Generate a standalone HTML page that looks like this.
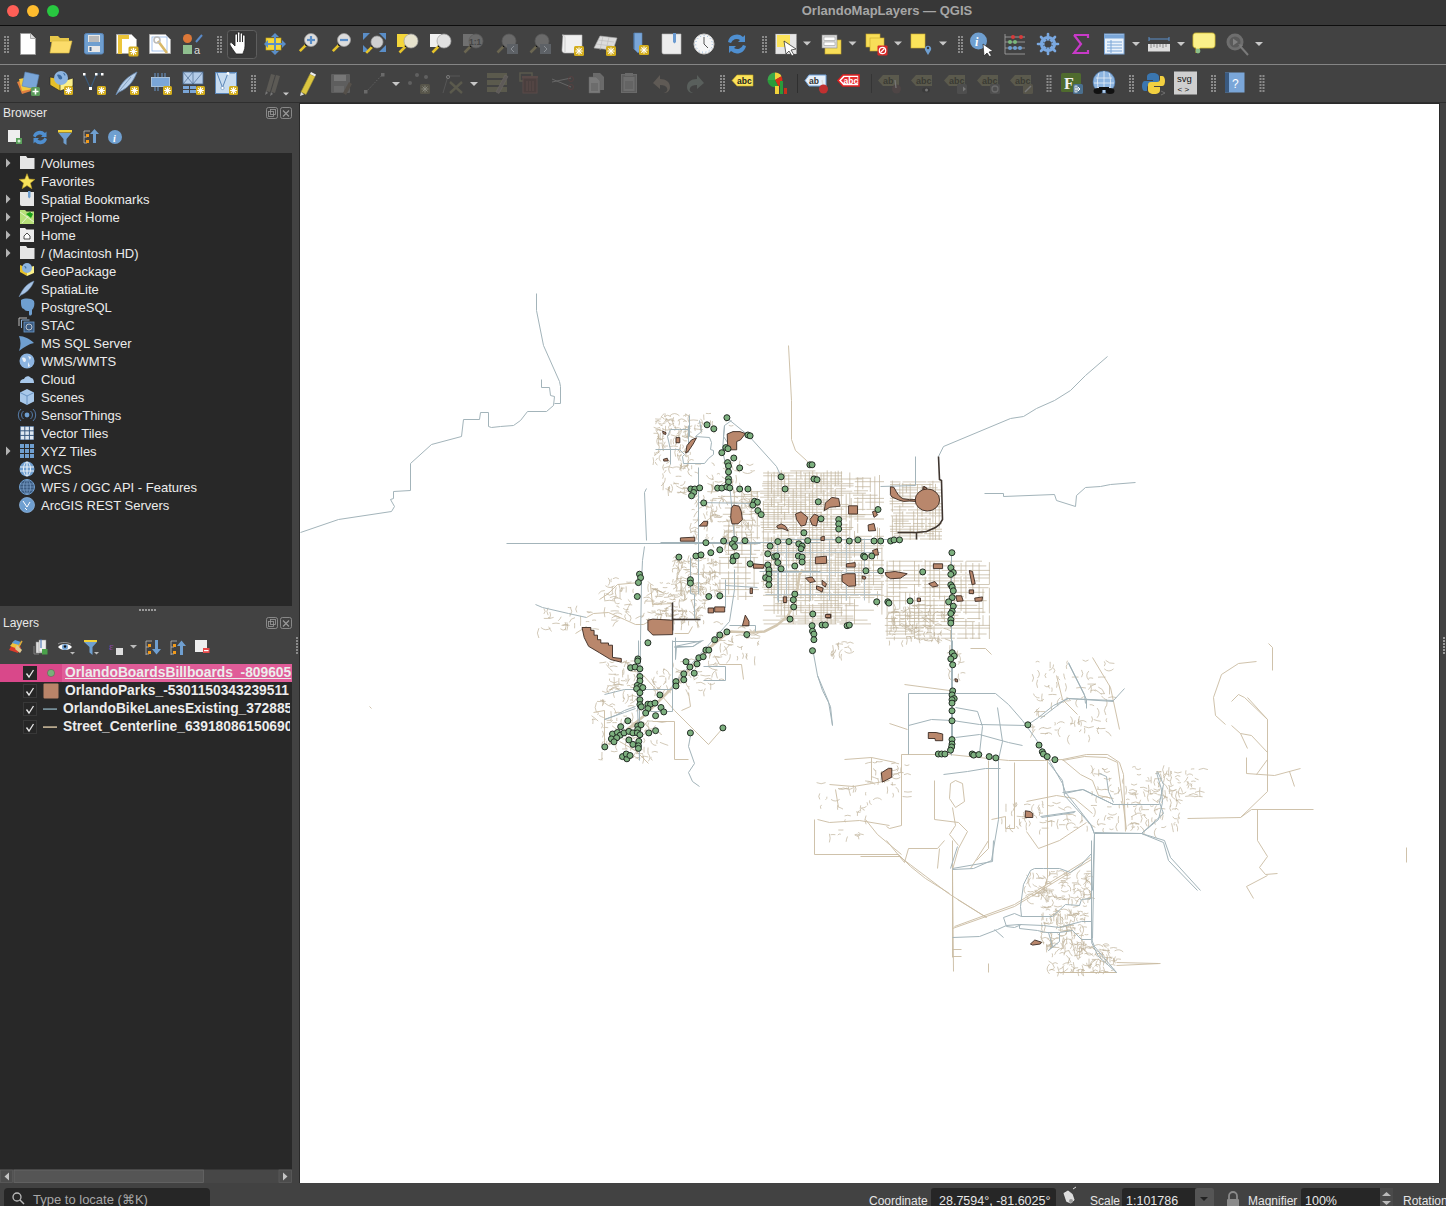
<!DOCTYPE html>
<html><head><meta charset="utf-8">
<style>
*{margin:0;padding:0;box-sizing:border-box}
html,body{width:1446px;height:1206px;overflow:hidden;background:#424242;font-family:"Liberation Sans",sans-serif;color:#e6e6e6}
.abs{position:absolute}
#title{left:0;top:0;width:1446px;height:25px;background:#373737}
#title .t{position:absolute;left:0;width:1774px;top:3px;text-align:center;font-size:13px;font-weight:700;color:#a6a6a6}
.tl{position:absolute;top:5px;width:12px;height:12px;border-radius:50%}
.ptitle{position:absolute;left:3px;font-size:12px;color:#e8e8e8;line-height:15px}
.item{position:absolute;left:41px;font-size:13px;line-height:18px;color:#ececec;white-space:nowrap}
.ltxt{position:absolute;font-size:13.8px;line-height:18px;font-weight:700;color:#ececec;white-space:nowrap;overflow:hidden;width:227px}
.st{position:absolute;font-size:12px;line-height:15px;color:#e6e6e6;white-space:nowrap}
</style></head><body>
<div id="title" class="abs">
 <div class="tl" style="left:7px;background:#fe5f57"></div>
 <div class="tl" style="left:27px;background:#febc2e"></div>
 <div class="tl" style="left:47px;background:#28c840"></div>
 <div class="t">OrlandoMapLayers — QGIS</div>
</div>
<div class="abs" style="left:0;top:25px;width:1446px;height:1px;background:#0e0e0e"></div>
<div class="abs" style="left:0;top:64px;width:1446px;height:1px;background:#858585"></div>
<div class="abs" style="left:0;top:102px;width:1446px;height:1px;background:#2e2e2e"></div>
<svg class="abs" style="left:0;top:0" width="1446" height="104"><rect x="4" y="36" width="2" height="2" fill="#8a8a8a"/><rect x="7" y="36" width="2" height="2" fill="#8a8a8a"/><rect x="4" y="39" width="2" height="2" fill="#8a8a8a"/><rect x="7" y="39" width="2" height="2" fill="#8a8a8a"/><rect x="4" y="42" width="2" height="2" fill="#8a8a8a"/><rect x="7" y="42" width="2" height="2" fill="#8a8a8a"/><rect x="4" y="45" width="2" height="2" fill="#8a8a8a"/><rect x="7" y="45" width="2" height="2" fill="#8a8a8a"/><rect x="4" y="48" width="2" height="2" fill="#8a8a8a"/><rect x="7" y="48" width="2" height="2" fill="#8a8a8a"/><rect x="4" y="51" width="2" height="2" fill="#8a8a8a"/><rect x="7" y="51" width="2" height="2" fill="#8a8a8a"/><path d="M20.5 33.5h10l5 5v16h-15z" fill="#fff" stroke="#9a9a9a" stroke-width="1"/><path d="M30.5 33.5v5h5" fill="#ddd" stroke="#9a9a9a" stroke-width="0.8"/><path d="M50 36h8l2 2h9v4h-19z" fill="#e8c84a"/><path d="M50 53l2-12h20l-3 12z" fill="#fbdc6a" stroke="#d9b840" stroke-width="0.6"/><rect x="84.5" y="33.5" width="19" height="20.5" rx="2" fill="#6f9fd0" stroke="#5a86b8"/><rect x="88" y="35" width="12" height="7" fill="#e8e8e8"/><g stroke="#666" stroke-width="0.7"><line x1="89" y1="37" x2="99" y2="37"/><line x1="89" y1="39" x2="99" y2="39"/><line x1="89" y1="41" x2="99" y2="41"/></g><rect x="88" y="46" width="12" height="6" fill="#e8e8e8"/><rect x="89.5" y="47" width="2" height="4" fill="#4a6a90"/><path d="M116.5 34.5h15l5 5v14h-20z" fill="#fff" stroke="#aaa"/><path d="M118 35h4v19h-4zM118 35h11v4h-11z" fill="#ecc53a"/><rect x="128.5" y="46.5" width="10" height="10" rx="1.5" fill="#d3ad1c"/><g stroke="#fff" stroke-width="1.1" stroke-linecap="round"><line x1="133.5" y1="48.2" x2="133.5" y2="54.8"/><line x1="130.2" y1="51.5" x2="136.8" y2="51.5"/><line x1="131.2" y1="49.2" x2="135.8" y2="53.8"/><line x1="131.2" y1="53.8" x2="135.8" y2="49.2"/></g><path d="M149.5 34.5h16l5 5v14h-21z" fill="#fff" stroke="#aaa"/><rect x="152" y="37" width="15" height="14" fill="none" stroke="#8fb4e8" stroke-width="0.8"/><path d="M158 41l9 12" stroke="#d8b868" stroke-width="2.6"/><circle cx="157" cy="40" r="3" fill="none" stroke="#bbb" stroke-width="1.6"/><circle cx="187.5" cy="38.5" r="4.5" fill="#dd7838"/><line x1="196" y1="42" x2="202" y2="35" stroke="#5a8ac8" stroke-width="2"/><rect x="183" y="45" width="9" height="9" fill="#8fbf8f"/><text x="194" y="54" font-size="11" fill="#ddd" font-family="Liberation Sans">a</text><rect x="217" y="36" width="2" height="2" fill="#8a8a8a"/><rect x="220" y="36" width="2" height="2" fill="#8a8a8a"/><rect x="217" y="39" width="2" height="2" fill="#8a8a8a"/><rect x="220" y="39" width="2" height="2" fill="#8a8a8a"/><rect x="217" y="42" width="2" height="2" fill="#8a8a8a"/><rect x="220" y="42" width="2" height="2" fill="#8a8a8a"/><rect x="217" y="45" width="2" height="2" fill="#8a8a8a"/><rect x="220" y="45" width="2" height="2" fill="#8a8a8a"/><rect x="217" y="48" width="2" height="2" fill="#8a8a8a"/><rect x="220" y="48" width="2" height="2" fill="#8a8a8a"/><rect x="217" y="51" width="2" height="2" fill="#8a8a8a"/><rect x="220" y="51" width="2" height="2" fill="#8a8a8a"/><rect x="227.5" y="30.5" width="29" height="28" rx="3" fill="#3a3a3a" stroke="#5e5e5e"/><path d="M236 54c-2-3-5-7-6-9s1-3 2-2l3 3v-11c0-1.5 2.5-1.5 2.5 0v7-9c0-1.5 2.5-1.5 2.5 0v9-8c0-1.5 2.5-1.5 2.5 0v8-6c0-1.5 2.5-1.5 2.5 0v10c0 4-2 6-2 8z" fill="#fff" stroke="#222" stroke-width="0.8"/><rect x="266" y="38" width="15" height="12" fill="#f4d63a" stroke="#c8a820" stroke-width="0.6"/><g fill="#5a8ec8"><path d="M275 33l4 4h-8z"/><path d="M275 55l4-4h-8z"/><path d="M264 44l4-4v8z"/><path d="M286 44l-4-4v8z"/><rect x="274" y="36" width="2" height="16"/><rect x="267" y="43" width="16" height="2"/></g><line x1="305.82" y1="45.18" x2="299.82" y2="51.18" stroke="#e6c42a" stroke-width="2.6"/><circle cx="306.32" cy="44.68" r="1.3" fill="#111"/><circle cx="311" cy="40" r="6.5" fill="#dcdcdc" stroke="#a0a0a0" stroke-width="0.7"/><g stroke="#5a8ec8" stroke-width="2.2"><line x1="307" y1="40" x2="315" y2="40"/><line x1="311" y1="36" x2="311" y2="44"/></g><line x1="338.82" y1="45.18" x2="332.82" y2="51.18" stroke="#e6c42a" stroke-width="2.6"/><circle cx="339.32" cy="44.68" r="1.3" fill="#111"/><circle cx="344" cy="40" r="6.5" fill="#dcdcdc" stroke="#a0a0a0" stroke-width="0.7"/><line x1="340" y1="40" x2="348" y2="40" stroke="#5a8ec8" stroke-width="2.2"/><g fill="#5a8ec8"><path d="M363 33h7l-7 7z"/><path d="M386 33h-7l7 7z"/><path d="M386 52h-7l7-7z"/><path d="M363 52h7l-7-7z"/></g><line x1="372.18" y1="46.82" x2="366.18" y2="52.82" stroke="#e6c42a" stroke-width="2.6"/><circle cx="372.68" cy="46.32" r="1.3" fill="#111"/><circle cx="377" cy="42" r="6" fill="#cfcfcf" stroke="#a0a0a0" stroke-width="0.7"/><rect x="397" y="34" width="11" height="13" fill="#f4d63a"/><line x1="405.46" y1="46.54" x2="399.46" y2="52.54" stroke="#e6c42a" stroke-width="2.6"/><circle cx="405.96" cy="46.04" r="1.3" fill="#111"/><circle cx="411" cy="41" r="7" fill="#e6e2cc" stroke="#a0a0a0" stroke-width="0.7"/><rect x="430" y="34" width="11" height="13" fill="#f0f0f0"/><line x1="438.46" y1="46.54" x2="432.46" y2="52.54" stroke="#e6c42a" stroke-width="2.6"/><circle cx="438.96" cy="46.04" r="1.3" fill="#111"/><circle cx="444" cy="41" r="7" fill="#e0e0e0" stroke="#a0a0a0" stroke-width="0.7"/><rect x="463" y="34" width="10" height="12" fill="#707070"/><line x1="470.46" y1="46.54" x2="464.46" y2="52.54" stroke="#6b6651" stroke-width="2.6"/><circle cx="470.96" cy="46.04" r="1.3" fill="#111"/><circle cx="476" cy="41" r="7" fill="#6a6a6a" stroke="#5a5a5a" stroke-width="0.7"/><text x="469" y="44.5" font-size="8.5" font-weight="700" fill="#454545" font-family="Liberation Sans">1:1</text><line x1="503.46" y1="46.54" x2="497.46" y2="52.54" stroke="#6b6651" stroke-width="2.6"/><circle cx="503.96" cy="46.04" r="1.3" fill="#111"/><circle cx="509" cy="41" r="7" fill="#6a6a6a" stroke="#5a5a5a" stroke-width="0.7"/><rect x="507" y="44" width="11" height="10" fill="#5d6166"/><path d="M514 46l-3 3 3 3" fill="none" stroke="#8a8e93" stroke-width="1"/><line x1="536.46" y1="46.54" x2="530.46" y2="52.54" stroke="#6b6651" stroke-width="2.6"/><circle cx="536.96" cy="46.04" r="1.3" fill="#111"/><circle cx="542" cy="41" r="7" fill="#6a6a6a" stroke="#5a5a5a" stroke-width="0.7"/><rect x="540" y="44" width="11" height="10" fill="#5d6166"/><path d="M544 46l3 3-3 3" fill="none" stroke="#8a8e93" stroke-width="1"/><path d="M563 35h19v18h-17c-2 0-3-1-3-3z" fill="#f0f0f0" stroke="#bbb" stroke-width="0.6"/><path d="M562 35c2 0 3 1 3 3v14" fill="none" stroke="#ccc"/><rect x="574" y="46" width="10" height="10" rx="1.5" fill="#d3ad1c"/><g stroke="#fff" stroke-width="1.1" stroke-linecap="round"><line x1="579.0" y1="47.7" x2="579.0" y2="54.3"/><line x1="575.7" y1="51.0" x2="582.3" y2="51.0"/><line x1="576.7" y1="48.7" x2="581.3" y2="53.3"/><line x1="576.7" y1="53.3" x2="581.3" y2="48.7"/></g><path d="M594 48l6-12 17 2-4 12z" fill="#dcdcdc" stroke="#aaa" stroke-width="0.6"/><path d="M598 40l16 2M596 44l16 2M603 36l-3 14M609 37l-3 13" stroke="#b8b8b8" stroke-width="0.6"/><rect x="606" y="46" width="10" height="10" rx="1.5" fill="#d3ad1c"/><g stroke="#fff" stroke-width="1.1" stroke-linecap="round"><line x1="611.0" y1="47.7" x2="611.0" y2="54.3"/><line x1="607.7" y1="51.0" x2="614.3" y2="51.0"/><line x1="608.7" y1="48.7" x2="613.3" y2="53.3"/><line x1="608.7" y1="53.3" x2="613.3" y2="48.7"/></g><path d="M634 33h8v16l-4 4-4-4z" fill="#7aa6d8" stroke="#5a86b8" stroke-width="0.6"/><path d="M634 33v16" stroke="#4a76a8"/><rect x="639" y="45" width="10" height="10" rx="1.5" fill="#d3ad1c"/><g stroke="#fff" stroke-width="1.1" stroke-linecap="round"><line x1="644.0" y1="46.7" x2="644.0" y2="53.3"/><line x1="640.7" y1="50.0" x2="647.3" y2="50.0"/><line x1="641.7" y1="47.7" x2="646.3" y2="52.3"/><line x1="641.7" y1="52.3" x2="646.3" y2="47.7"/></g><path d="M662 34h19v20h-17c-2 0-2-1-2-3z" fill="#ededed" stroke="#bbb" stroke-width="0.6"/><path d="M673 33h3v9l-1.5 1.5-1.5-1.5z" fill="#6a9ad0"/><circle cx="704" cy="44" r="10" fill="#f6f6f6" stroke="#ccc"/><circle cx="704" cy="44" r="8.3" fill="none" stroke="#6f9fd0" stroke-width="0.8" stroke-dasharray="1 2.5"/><path d="M704 37v7l4 4" fill="none" stroke="#555" stroke-width="1"/><path d="M728 42a9 9 0 0 1 15-5l2-2v7h-7l2-2a6 6 0 0 0-9 3z" fill="#4f8fd0"/><path d="M746 46a9 9 0 0 1-15 5l-2 2v-7h7l-2 2a6 6 0 0 0 9-3z" fill="#4f8fd0"/><rect x="762" y="36" width="2" height="2" fill="#8a8a8a"/><rect x="765" y="36" width="2" height="2" fill="#8a8a8a"/><rect x="762" y="39" width="2" height="2" fill="#8a8a8a"/><rect x="765" y="39" width="2" height="2" fill="#8a8a8a"/><rect x="762" y="42" width="2" height="2" fill="#8a8a8a"/><rect x="765" y="42" width="2" height="2" fill="#8a8a8a"/><rect x="762" y="45" width="2" height="2" fill="#8a8a8a"/><rect x="765" y="45" width="2" height="2" fill="#8a8a8a"/><rect x="762" y="48" width="2" height="2" fill="#8a8a8a"/><rect x="765" y="48" width="2" height="2" fill="#8a8a8a"/><rect x="762" y="51" width="2" height="2" fill="#8a8a8a"/><rect x="765" y="51" width="2" height="2" fill="#8a8a8a"/><rect x="775.5" y="34" width="21" height="20" fill="#e6e6e6" stroke="#999" stroke-width="0.6" stroke-dasharray="1 1"/><rect x="777" y="35" width="13" height="12" fill="#fbe35a"/><path d="M784 41l12 8-5 1 3 5-2 1-3-5-3 3z" fill="#fff" stroke="#222" stroke-width="0.7"/><path d="M803 41.5h8l-4 4z" fill="#c8c8c8"/><rect x="825" y="40" width="16" height="14" fill="#f8de58" stroke="#c9a92a" stroke-width="0.6"/><rect x="822" y="35" width="15" height="13" fill="#e0e0e0" stroke="#888" stroke-width="0.6"/><g fill="#fff" stroke="#888" stroke-width="0.5"><rect x="824" y="37" width="11" height="3.5"/><rect x="824" y="42" width="11" height="3.5"/></g><path d="M848.5 41.5h8l-4 4z" fill="#c8c8c8"/><rect x="866" y="34" width="14" height="13" fill="#f8de58" stroke="#c9a92a" stroke-width="0.6"/><rect x="870" y="38" width="14" height="13" fill="#f8de58" stroke="#c9a92a" stroke-width="0.6"/><rect x="877.5" y="45.5" width="10" height="10" rx="1" fill="#d92a2a"/><circle cx="882.5" cy="50.5" r="3.2" fill="none" stroke="#fff" stroke-width="1.2"/><line x1="880.5" y1="52.5" x2="884.5" y2="48.5" stroke="#fff" stroke-width="1.2"/><path d="M894 41.5h8l-4 4z" fill="#c8c8c8"/><rect x="911" y="34" width="14" height="14" fill="#fbe35a" stroke="#d0b030" stroke-width="0.6"/><path d="M928 55l-3-5a3.2 3.2 0 1 1 6 0z" fill="#6f9fd0"/><circle cx="928" cy="48" r="1.2" fill="#3a3a3a"/><path d="M939 41.5h8l-4 4z" fill="#c8c8c8"/><rect x="958" y="36" width="2" height="2" fill="#8a8a8a"/><rect x="961" y="36" width="2" height="2" fill="#8a8a8a"/><rect x="958" y="39" width="2" height="2" fill="#8a8a8a"/><rect x="961" y="39" width="2" height="2" fill="#8a8a8a"/><rect x="958" y="42" width="2" height="2" fill="#8a8a8a"/><rect x="961" y="42" width="2" height="2" fill="#8a8a8a"/><rect x="958" y="45" width="2" height="2" fill="#8a8a8a"/><rect x="961" y="45" width="2" height="2" fill="#8a8a8a"/><rect x="958" y="48" width="2" height="2" fill="#8a8a8a"/><rect x="961" y="48" width="2" height="2" fill="#8a8a8a"/><rect x="958" y="51" width="2" height="2" fill="#8a8a8a"/><rect x="961" y="51" width="2" height="2" fill="#8a8a8a"/><circle cx="978.5" cy="41" r="8.5" fill="#6f9fd0"/><text x="975" y="46" font-size="12" font-style="italic" font-weight="700" fill="#fff" font-family="Liberation Serif">i</text><path d="M983 44l10 7-4 1 2.5 3.5-2 1-2.5-3.5-3 3z" fill="#fff" stroke="#222" stroke-width="0.7"/><g stroke="#aaa" stroke-width="0.8"><line x1="1005" y1="34" x2="1005" y2="54"/><line x1="1005" y1="54" x2="1025" y2="54"/><line x1="1005" y1="37" x2="1025" y2="37"/><line x1="1005" y1="42" x2="1025" y2="42"/><line x1="1005" y1="48" x2="1025" y2="48"/></g><g><circle cx="1013" cy="37" r="2" fill="#d83a3a"/><circle cx="1021" cy="37" r="2" fill="#d83a3a"/><circle cx="1010" cy="42" r="2" fill="#7ab87a"/><circle cx="1015" cy="42" r="2" fill="#7ab87a"/><circle cx="1010" cy="48" r="2" fill="#6f9fd0"/><circle cx="1015" cy="48" r="2" fill="#6f9fd0"/><circle cx="1020" cy="48" r="2" fill="#6f9fd0"/></g><g transform="translate(1048 44)"><circle r="6.5" fill="none" stroke="#7aa8e0" stroke-width="3.2"/><g stroke="#7aa8e0" stroke-width="2.6" stroke-linecap="round"><line x1="0" y1="-10" x2="0" y2="10"/><line x1="-10" y1="0" x2="10" y2="0"/><line x1="-7" y1="-7" x2="7" y2="7"/><line x1="-7" y1="7" x2="7" y2="-7"/></g><circle r="3.5" fill="#424242"/></g><path d="M1074 35h14v3M1074 35l7 9-7 9h14v-3" fill="none" stroke="#c83ac8" stroke-width="2.2"/><rect x="1104.5" y="34" width="19.5" height="20" fill="#eaf2fb" stroke="#7aa6d8"/><rect x="1105" y="34.5" width="19" height="4" fill="#7aa6d8"/><g stroke="#7aa6d8" stroke-width="1"><line x1="1107" y1="42" x2="1122" y2="42"/><line x1="1107" y1="45" x2="1122" y2="45"/><line x1="1107" y1="48" x2="1122" y2="48"/><line x1="1107" y1="51" x2="1122" y2="51"/><line x1="1111" y1="40" x2="1111" y2="53"/></g><path d="M1132 42h8l-4 4z" fill="#c8c8c8"/><line x1="1149" y1="39" x2="1169" y2="39" stroke="#5a8ec8" stroke-width="1"/><line x1="1149" y1="37" x2="1149" y2="41" stroke="#5a8ec8"/><line x1="1169" y1="37" x2="1169" y2="41" stroke="#5a8ec8"/><rect x="1148" y="44" width="22" height="7.5" fill="#dedede"/><g stroke="#777" stroke-width="0.8"><line x1="1151" y1="44" x2="1151" y2="48"/><line x1="1154" y1="44" x2="1154" y2="47"/><line x1="1157" y1="44" x2="1157" y2="48"/><line x1="1160" y1="44" x2="1160" y2="47"/><line x1="1163" y1="44" x2="1163" y2="48"/><line x1="1166" y1="44" x2="1166" y2="47"/></g><path d="M1177 42h8l-4 4z" fill="#c8c8c8"/><path d="M1196 33h16c2 0 3 1 3 3v9c0 2-1 3-3 3h-12l-4 5v-5c-2 0-3-1-3-3v-9c0-2 1-3 3-3z" fill="#fbf08a" stroke="#d8c030" stroke-width="0.8"/><circle cx="1198" cy="51" r="2.4" fill="#8ac08a"/><g transform="translate(1235 42)"><circle r="7" fill="#5a5a5a" stroke="#6e6e6e" stroke-width="3"/><path d="M-2 -3.5v7l5-3.5z" fill="#808080"/></g><path d="M1240 46l8 9" stroke="#7a7a7a" stroke-width="2"/><path d="M1238 44l5 1-2 2z" fill="#7a7a7a"/><path d="M1255 42h8l-4 4z" fill="#c8c8c8"/><rect x="4" y="75" width="2" height="2" fill="#8a8a8a"/><rect x="7" y="75" width="2" height="2" fill="#8a8a8a"/><rect x="4" y="78" width="2" height="2" fill="#8a8a8a"/><rect x="7" y="78" width="2" height="2" fill="#8a8a8a"/><rect x="4" y="81" width="2" height="2" fill="#8a8a8a"/><rect x="7" y="81" width="2" height="2" fill="#8a8a8a"/><rect x="4" y="84" width="2" height="2" fill="#8a8a8a"/><rect x="7" y="84" width="2" height="2" fill="#8a8a8a"/><rect x="4" y="87" width="2" height="2" fill="#8a8a8a"/><rect x="7" y="87" width="2" height="2" fill="#8a8a8a"/><rect x="4" y="90" width="2" height="2" fill="#8a8a8a"/><rect x="7" y="90" width="2" height="2" fill="#8a8a8a"/><path d="M17 82l9-3 5 12-9 3z" fill="#e08040"/><path d="M19 79l11-2 3 12-11 2z" fill="#f2cc40"/><path d="M25 72l14 3-3 14-14-3z" fill="#7aa6d8" stroke="#5a86b8" stroke-width="0.6"/><rect x="31" y="87" width="9" height="9" rx="1.5" fill="#5a9a5a"/><path d="M35.5 88.5v6M32.5 91.5h6" stroke="#fff" stroke-width="1.6"/><path d="M50 85l10 6 4-3v-8l-14-3z" fill="#e6c02a" stroke="#222" stroke-width="0.6"/><path d="M60 91l13-5v-8l-13 4z" fill="#fbf08a" stroke="#222" stroke-width="0.6"/><circle cx="61" cy="78" r="7" fill="#8cb4e0"/><path d="M57 75c2-1 4 0 5 2s-1 3-3 2zM63 73c2 0 3 2 2 3z" fill="#3a6aa0"/><rect x="64" y="86" width="9" height="9" rx="1.5" fill="#d3ad1c"/><g stroke="#fff" stroke-width="1.1" stroke-linecap="round"><line x1="68.5" y1="87.53" x2="68.5" y2="93.47"/><line x1="65.53" y1="90.5" x2="71.47" y2="90.5"/><line x1="66.43" y1="88.43" x2="70.57" y2="92.57"/><line x1="66.43" y1="92.57" x2="70.57" y2="88.43"/></g><path d="M84 74l6.5 14.5 6-14.5M96.5 74h6" fill="none" stroke="#3a5a7a" stroke-width="1.2"/><g fill="#fff"><rect x="83" y="73" width="2.5" height="2.5"/><rect x="95" y="73" width="2.5" height="2.5"/><rect x="101" y="73" width="2.5" height="2.5"/><rect x="89" y="87" width="3" height="3"/></g><rect x="97" y="86" width="9" height="9" rx="1.5" fill="#d3ad1c"/><g stroke="#fff" stroke-width="1.1" stroke-linecap="round"><line x1="101.5" y1="87.53" x2="101.5" y2="93.47"/><line x1="98.53" y1="90.5" x2="104.47" y2="90.5"/><line x1="99.43" y1="88.43" x2="103.57" y2="92.57"/><line x1="99.43" y1="92.57" x2="103.57" y2="88.43"/></g><path d="M116 95c3-8 8-17 21-23-3 8-8 16-18 20z" fill="#b8d0ea" stroke="#6a8ab0" stroke-width="0.8"/><path d="M116 95l15-18" stroke="#5a7aa0" stroke-width="0.6"/><rect x="130" y="86" width="9" height="9" rx="1.5" fill="#d3ad1c"/><g stroke="#fff" stroke-width="1.1" stroke-linecap="round"><line x1="134.5" y1="87.53" x2="134.5" y2="93.47"/><line x1="131.53" y1="90.5" x2="137.47" y2="90.5"/><line x1="132.43" y1="88.43" x2="136.57" y2="92.57"/><line x1="132.43" y1="92.57" x2="136.57" y2="88.43"/></g><g stroke="#6a9ad0" stroke-width="1"><line x1="155" y1="73" x2="155" y2="77"/><line x1="158" y1="73" x2="158" y2="77"/><line x1="162" y1="73" x2="162" y2="77"/><line x1="165" y1="73" x2="165" y2="77"/><line x1="155" y1="87" x2="155" y2="91"/><line x1="158" y1="87" x2="158" y2="91"/></g><rect x="151.5" y="77.5" width="18" height="9" fill="#7aa6d8" stroke="#bcd4ec" stroke-width="0.8"/><rect x="163" y="86" width="9" height="9" rx="1.5" fill="#d3ad1c"/><g stroke="#fff" stroke-width="1.1" stroke-linecap="round"><line x1="167.5" y1="87.53" x2="167.5" y2="93.47"/><line x1="164.53" y1="90.5" x2="170.47" y2="90.5"/><line x1="165.43" y1="88.43" x2="169.57" y2="92.57"/><line x1="165.43" y1="92.57" x2="169.57" y2="88.43"/></g><rect x="183" y="72" width="20" height="12" fill="#b4cce8" stroke="#4a6a90" stroke-width="0.8"/><path d="M183 72l10 12M193 72l-10 12M193 72v12M203 72l-10 12" stroke="#4a6a90" stroke-width="0.7"/><g fill="#7aa6d8"><rect x="183" y="86" width="6" height="3"/><rect x="190" y="86" width="6" height="3"/><rect x="183" y="90" width="6" height="3"/><rect x="190" y="90" width="6" height="3"/></g><rect x="196" y="86" width="9" height="9" rx="1.5" fill="#d3ad1c"/><g stroke="#fff" stroke-width="1.1" stroke-linecap="round"><line x1="200.5" y1="87.53" x2="200.5" y2="93.47"/><line x1="197.53" y1="90.5" x2="203.47" y2="90.5"/><line x1="198.43" y1="88.43" x2="202.57" y2="92.57"/><line x1="198.43" y1="92.57" x2="202.57" y2="88.43"/></g><rect x="215.5" y="72.5" width="21" height="21" fill="#c8dcf0" stroke="#5a86b8"/><path d="M217 73l5.5 14.5 5.5-14.5 7 0" fill="none" stroke="#5a86b8" stroke-width="1"/><circle cx="222.5" cy="88" r="1.6" fill="#fff" stroke="#5a86b8" stroke-width="0.6"/><circle cx="228" cy="73.5" r="1.4" fill="#fff"/><rect x="229" y="86" width="9" height="9" rx="1.5" fill="#d3ad1c"/><g stroke="#fff" stroke-width="1.1" stroke-linecap="round"><line x1="233.5" y1="87.53" x2="233.5" y2="93.47"/><line x1="230.53" y1="90.5" x2="236.47" y2="90.5"/><line x1="231.43" y1="88.43" x2="235.57" y2="92.57"/><line x1="231.43" y1="92.57" x2="235.57" y2="88.43"/></g><rect x="251" y="75" width="2" height="2" fill="#8a8a8a"/><rect x="254" y="75" width="2" height="2" fill="#8a8a8a"/><rect x="251" y="78" width="2" height="2" fill="#8a8a8a"/><rect x="254" y="78" width="2" height="2" fill="#8a8a8a"/><rect x="251" y="81" width="2" height="2" fill="#8a8a8a"/><rect x="254" y="81" width="2" height="2" fill="#8a8a8a"/><rect x="251" y="84" width="2" height="2" fill="#8a8a8a"/><rect x="254" y="84" width="2" height="2" fill="#8a8a8a"/><rect x="251" y="87" width="2" height="2" fill="#8a8a8a"/><rect x="254" y="87" width="2" height="2" fill="#8a8a8a"/><rect x="251" y="90" width="2" height="2" fill="#8a8a8a"/><rect x="254" y="90" width="2" height="2" fill="#8a8a8a"/><path d="M266 91l5-17 4 1-5 17z" fill="#5c5a55"/><path d="M271 92l5-17 4 1-5 17z" fill="#5c5a55"/><path d="M266 91l-1 4 3-2zM271 92l-1 4 3-2z" fill="#777"/><path d="M283 92.5h6l-3 3z" fill="#c8c8c8"/><path d="M301 92l9-18 5 2.5-9 18z" fill="#dcc640" stroke="#a09030" stroke-width="0.6"/><path d="M310 74l1-2 5 2.5-1 2z" fill="#eee"/><path d="M301 92l-1 4 4-1.5z" fill="#ddd"/><rect x="331" y="74" width="19" height="19" rx="1" fill="#5e5e5e"/><rect x="334" y="75" width="12" height="6" fill="#777"/><rect x="334" y="86" width="10" height="6" fill="#6a6a6a"/><path d="M343 93l6-11 3 2-6 11z" fill="#55504a"/><path d="M366 92l16-17" stroke="#6a6a6a" stroke-width="0.8" stroke-dasharray="1.5 1.5"/><rect x="364" y="90" width="3.5" height="3.5" fill="#6a6a6a"/><rect x="381" y="73" width="3.5" height="3.5" fill="#6a6a6a"/><path d="M392 82h8l-4 4z" fill="#c8c8c8"/><circle cx="410" cy="83" r="2" fill="#606060"/><circle cx="417" cy="75" r="2" fill="#606060"/><circle cx="426" cy="77" r="2" fill="#606060"/><rect x="420" y="84" width="10" height="10" rx="1.5" fill="#57554a"/><g stroke="#8a8a80" stroke-width="0.9"><line x1="425" y1="85.5" x2="425" y2="92.5"/><line x1="421.5" y1="89" x2="428.5" y2="89"/><line x1="422.5" y1="86.5" x2="427.5" y2="91.5"/><line x1="422.5" y1="91.5" x2="427.5" y2="86.5"/></g><path d="M443 93l5-17h12" fill="none" stroke="#5e5e5e" stroke-width="0.7"/><circle cx="448" cy="77" r="1.6" fill="none" stroke="#777"/><path d="M450 82l12 11M462 82l-12 11" stroke="#5b5a4d" stroke-width="2.4"/><path d="M470 82h8l-4 4z" fill="#c8c8c8"/><g fill="#5b5a4d"><rect x="487" y="73" width="20" height="5"/><rect x="487" y="80" width="20" height="5"/><rect x="487" y="87" width="20" height="5"/></g><path d="M496 92l9-17 3 1.5-9 17z" fill="#5e5a58" stroke="#6e6a68" stroke-width="0.5"/><rect x="520" y="73" width="12" height="8" fill="none" stroke="#5b5a4d" stroke-width="1.5"/><rect x="523" y="78" width="14" height="15" fill="#4a3f3e" stroke="#5a4a48" stroke-width="1"/><g stroke="#5a4a48" stroke-width="1.2"><line x1="527" y1="81" x2="527" y2="91"/><line x1="530" y1="81" x2="530" y2="91"/><line x1="533" y1="81" x2="533" y2="91"/></g><rect x="522" y="76" width="16" height="2" fill="#5a4a48"/><path d="M552 79l19 8M552 82l19-4" stroke="#666" stroke-width="1"/><circle cx="571" cy="79" r="2.5" fill="none" stroke="#5a4040" stroke-width="0.8"/><circle cx="571" cy="87" r="2.5" fill="none" stroke="#5a4040" stroke-width="0.8"/><path d="M593 73h7l4 4v13h-11z" fill="#6a6a6a"/><path d="M589 77h7l4 4v12h-11z" fill="#7a7a7a" stroke="#666" stroke-width="0.5"/><g stroke="#555" stroke-width="0.7"><line x1="591" y1="84" x2="598" y2="84"/><line x1="591" y1="86" x2="598" y2="86"/><line x1="591" y1="88" x2="598" y2="88"/><line x1="591" y1="90" x2="598" y2="90"/></g><rect x="621.5" y="74.5" width="15" height="18" fill="#5e5e5e" stroke="#6a6a6a"/><rect x="625" y="73" width="8" height="3" fill="#6a6a6a"/><rect x="623.5" y="77" width="11" height="14" fill="#6e6e6e"/><g stroke="#555" stroke-width="0.7"><line x1="625" y1="82" x2="633" y2="82"/><line x1="625" y1="84" x2="633" y2="84"/><line x1="625" y1="86" x2="633" y2="86"/><line x1="625" y1="88" x2="633" y2="88"/></g><path d="M653 83l7-8v4c6 0 10 3 10 8s-4 6-6 6c3-1 4-3 3-5s-3-3-7-3v4z" fill="#5f5a55"/><path d="M704 83l-7-8v4c-6 0-10 3-10 8s4 6 6 6c-3-1-4-3-3-5s3-3 7-3v4z" fill="#595f5c"/><rect x="720" y="75" width="2" height="2" fill="#8a8a8a"/><rect x="723" y="75" width="2" height="2" fill="#8a8a8a"/><rect x="720" y="78" width="2" height="2" fill="#8a8a8a"/><rect x="723" y="78" width="2" height="2" fill="#8a8a8a"/><rect x="720" y="81" width="2" height="2" fill="#8a8a8a"/><rect x="723" y="81" width="2" height="2" fill="#8a8a8a"/><rect x="720" y="84" width="2" height="2" fill="#8a8a8a"/><rect x="723" y="84" width="2" height="2" fill="#8a8a8a"/><rect x="720" y="87" width="2" height="2" fill="#8a8a8a"/><rect x="723" y="87" width="2" height="2" fill="#8a8a8a"/><rect x="720" y="90" width="2" height="2" fill="#8a8a8a"/><rect x="723" y="90" width="2" height="2" fill="#8a8a8a"/><path d="M732 80.5l5-5.5h16v11h-16z" fill="#fbe35a" stroke="#c8a820" stroke-width="0.6"/><text x="737" y="84" font-size="8.5" font-weight="700" fill="#222" font-family="Liberation Sans">abc</text><path d="M775 80v-7.5a7.5 7.5 0 0 1 6.5 3.75z" fill="#f2d23a"/><path d="M775 80l6.5-3.75a7.5 7.5 0 0 1-3 10.2z" fill="#d8301a"/><path d="M775 80l3.5 6.45a7.5 7.5 0 0 1-11-6.45z" fill="#2a9a3a"/><path d="M775 80h-7.5a7.5 7.5 0 0 1 7.5-7.5z" fill="#3aa84a"/><rect x="775" y="86" width="4" height="8" fill="#f2d23a"/><rect x="780" y="81" width="3" height="13" fill="#2a9a3a"/><rect x="784" y="88" width="3" height="6" fill="#c8301a"/><line x1="797.5" y1="74" x2="797.5" y2="93" stroke="#2f2f2f" stroke-width="1"/><path d="M805 80.5l4-5.5h17v11h-17z" fill="#e6f0fa" stroke="#6fa0d8" stroke-width="1"/><text x="809" y="84.3" font-size="8.5" font-weight="700" fill="#333" font-family="Liberation Sans">ab</text><line x1="822" y1="80" x2="823.5" y2="88" stroke="#ddd" stroke-width="1.4"/><circle cx="823.5" cy="89" r="4.5" fill="#c03030"/><path d="M838 80.5l5-5.5h16v11h-16z" fill="#fff" stroke="#e02020" stroke-width="1.6"/><path d="M841 80.5l3.5-3.5h13v7h-13z" fill="#e83030"/><text x="843.5" y="84" font-size="8.5" font-weight="700" fill="#fff" font-family="Liberation Sans">abc</text><line x1="871.5" y1="74" x2="871.5" y2="93" stroke="#353535" stroke-width="1"/><path d="M878 80.5l5-5.5h16v11h-16z" fill="#5b5a4d"/><text x="883" y="84" font-size="9" font-weight="700" fill="#3a3a34" font-family="Liberation Sans">ab</text><circle cx="896.5" cy="89" r="4.5" fill="#4e4545"/><line x1="895" y1="80" x2="896" y2="88" stroke="#777" stroke-width="1.2"/><path d="M911 80.5l5-5.5h16v11h-16z" fill="#5b5a4d"/><text x="916" y="84" font-size="9" font-weight="700" fill="#3a3a34" font-family="Liberation Sans">abc</text><ellipse cx="926" cy="90" rx="4" ry="2.5" fill="#3a3a3a"/><circle cx="926.5" cy="90" r="1.5" fill="#777"/><path d="M944 80.5l5-5.5h16v11h-16z" fill="#5b5a4d"/><text x="949" y="84" font-size="9" font-weight="700" fill="#3a3a34" font-family="Liberation Sans">abc</text><rect x="957" y="84" width="10" height="10" rx="1.5" fill="#4e4e4e"/><path d="M959 89h4v-2.5l3 2.5-3 2.5v-2.5" fill="#777"/><path d="M977 80.5l5-5.5h16v11h-16z" fill="#5b5a4d"/><text x="982" y="84" font-size="9" font-weight="700" fill="#3a3a34" font-family="Liberation Sans">abc</text><rect x="990" y="84" width="10" height="10" rx="1.5" fill="#4e4e4e"/><circle cx="995" cy="89" r="3" fill="none" stroke="#6a6a6a" stroke-width="1.3"/><path d="M1010 80.5l5-5.5h16v11h-16z" fill="#5b5a4d"/><text x="1015" y="84" font-size="9" font-weight="700" fill="#3a3a34" font-family="Liberation Sans">abc</text><rect x="1023" y="84" width="10" height="10" rx="1.5" fill="#57554a"/><path d="M1025 92l6-6" stroke="#777" stroke-width="1.5"/><rect x="1046.5" y="75" width="2" height="2" fill="#8a8a8a"/><rect x="1049.5" y="75" width="2" height="2" fill="#8a8a8a"/><rect x="1046.5" y="78" width="2" height="2" fill="#8a8a8a"/><rect x="1049.5" y="78" width="2" height="2" fill="#8a8a8a"/><rect x="1046.5" y="81" width="2" height="2" fill="#8a8a8a"/><rect x="1049.5" y="81" width="2" height="2" fill="#8a8a8a"/><rect x="1046.5" y="84" width="2" height="2" fill="#8a8a8a"/><rect x="1049.5" y="84" width="2" height="2" fill="#8a8a8a"/><rect x="1046.5" y="87" width="2" height="2" fill="#8a8a8a"/><rect x="1049.5" y="87" width="2" height="2" fill="#8a8a8a"/><rect x="1046.5" y="90" width="2" height="2" fill="#8a8a8a"/><rect x="1049.5" y="90" width="2" height="2" fill="#8a8a8a"/><rect x="1061" y="73" width="20" height="19" rx="1.5" fill="#4f6b2e"/><text x="1064" y="89" font-size="16" font-weight="700" fill="#f2f2f2" font-family="Liberation Serif">F</text><rect x="1073" y="84" width="10" height="10" rx="1.5" fill="#4a6f8e"/><path d="M1075 89h5m-2-2l2 2-2 2" fill="none" stroke="#fff" stroke-width="1"/><rect x="1075" y="86" width="2" height="6" fill="none" stroke="#fff" stroke-width="0.8"/><circle cx="1104" cy="82" r="11" fill="#8cb4e0" stroke="#4a76a8" stroke-width="0.6"/><path d="M1096 78h16M1094 83h20M1097 88h14M1104 71v22M1099 73c-2 5-2 13 0 18M1109 73c2 5 2 13 0 18" stroke="#e8f0f8" stroke-width="0.8" fill="none"/><g fill="#111"><ellipse cx="1098" cy="91" rx="4.5" ry="3"/><ellipse cx="1110" cy="91" rx="4.5" ry="3"/><rect x="1099" y="87" width="10" height="3"/></g><rect x="1129" y="75" width="2" height="2" fill="#8a8a8a"/><rect x="1132" y="75" width="2" height="2" fill="#8a8a8a"/><rect x="1129" y="78" width="2" height="2" fill="#8a8a8a"/><rect x="1132" y="78" width="2" height="2" fill="#8a8a8a"/><rect x="1129" y="81" width="2" height="2" fill="#8a8a8a"/><rect x="1132" y="81" width="2" height="2" fill="#8a8a8a"/><rect x="1129" y="84" width="2" height="2" fill="#8a8a8a"/><rect x="1132" y="84" width="2" height="2" fill="#8a8a8a"/><rect x="1129" y="87" width="2" height="2" fill="#8a8a8a"/><rect x="1132" y="87" width="2" height="2" fill="#8a8a8a"/><rect x="1129" y="90" width="2" height="2" fill="#8a8a8a"/><rect x="1132" y="90" width="2" height="2" fill="#8a8a8a"/><path d="M1153 73c-5 0-6 2-6 4v3h6v1h-8c-2 0-3 2-3 5s1 5 3 5h2v-3c0-2 1-3 3-3h6c2 0 3-1 3-3v-5c0-2-2-4-6-4z" fill="#3a76b0"/><path d="M1154 94c5 0 6-2 6-4v-3h-6v-1h8c2 0 3-2 3-5s-1-5-3-5h-2v3c0 2-1 3-3 3h-6c-2 0-3 1-3 3v5c0 2 2 4 6 4z" fill="#f2d040"/><path d="M1161 91l4 2-4 2" fill="none" stroke="#777" stroke-width="0.8"/><rect x="1174" y="71.5" width="23" height="23" fill="#cfcfcf"/><text x="1177" y="82" font-size="9.5" fill="#111" font-family="Liberation Sans">svg</text><text x="1177.5" y="92" font-size="8" fill="#111" font-family="Liberation Sans">&lt; &gt;</text><rect x="1211" y="75" width="2" height="2" fill="#8a8a8a"/><rect x="1214" y="75" width="2" height="2" fill="#8a8a8a"/><rect x="1211" y="78" width="2" height="2" fill="#8a8a8a"/><rect x="1214" y="78" width="2" height="2" fill="#8a8a8a"/><rect x="1211" y="81" width="2" height="2" fill="#8a8a8a"/><rect x="1214" y="81" width="2" height="2" fill="#8a8a8a"/><rect x="1211" y="84" width="2" height="2" fill="#8a8a8a"/><rect x="1214" y="84" width="2" height="2" fill="#8a8a8a"/><rect x="1211" y="87" width="2" height="2" fill="#8a8a8a"/><rect x="1214" y="87" width="2" height="2" fill="#8a8a8a"/><rect x="1211" y="90" width="2" height="2" fill="#8a8a8a"/><rect x="1214" y="90" width="2" height="2" fill="#8a8a8a"/><rect x="1225" y="72.5" width="19.5" height="20" fill="#7aa6d8"/><rect x="1225" y="72.5" width="4" height="20" fill="#3a5a80"/><text x="1232" y="88" font-size="12" fill="#fff" font-family="Liberation Sans">?</text><rect x="1259.5" y="75" width="2" height="2" fill="#8a8a8a"/><rect x="1262.5" y="75" width="2" height="2" fill="#8a8a8a"/><rect x="1259.5" y="78" width="2" height="2" fill="#8a8a8a"/><rect x="1262.5" y="78" width="2" height="2" fill="#8a8a8a"/><rect x="1259.5" y="81" width="2" height="2" fill="#8a8a8a"/><rect x="1262.5" y="81" width="2" height="2" fill="#8a8a8a"/><rect x="1259.5" y="84" width="2" height="2" fill="#8a8a8a"/><rect x="1262.5" y="84" width="2" height="2" fill="#8a8a8a"/><rect x="1259.5" y="87" width="2" height="2" fill="#8a8a8a"/><rect x="1262.5" y="87" width="2" height="2" fill="#8a8a8a"/><rect x="1259.5" y="90" width="2" height="2" fill="#8a8a8a"/><rect x="1262.5" y="90" width="2" height="2" fill="#8a8a8a"/></svg>
<div class="abs" style="left:0;top:153px;width:292px;height:453px;background:#282828"></div>
<div class="abs" style="left:0;top:664px;width:292px;height:506px;background:#282828"></div>
<div class="abs" style="left:299px;top:103px;width:1141px;height:1080px;background:#2a2a2a"></div>
<div class="abs" style="left:300px;top:104px;width:1139px;height:1079px;background:#fff;overflow:hidden"><svg width="1139" height="1079" viewBox="300 104 1139 1079" style="position:absolute;left:0;top:0"><path d="M790.3 470.9L815.4 470.9M763.1 473.0L801.5 473.0M803.0 473.0L842.2 473.0M763.2 475.8L783.1 475.8M783.8 475.8L793.7 475.8M795.9 475.8L817.6 475.8M819.5 475.8L842.0 475.8M781.7 479.0L803.0 479.0M803.9 479.0L827.6 479.0M829.7 479.0L862.2 479.0M762.9 481.8L785.5 481.8M788.4 481.8L811.5 481.8M812.2 481.8L842.6 481.8M762.3 483.7L775.7 483.7M776.3 483.7L808.9 483.7M810.0 483.7L830.5 483.7M831.2 483.7L853.6 483.7M762.1 485.9L781.6 485.9M784.5 485.9L797.3 485.9M798.4 485.9L813.8 485.9M815.8 485.9L832.2 485.9M833.8 485.9L853.6 485.9M763.4 488.7L773.1 488.7M775.6 488.7L811.5 488.7M813.0 488.7L833.8 488.7M835.9 488.7L845.9 488.7M760.1 491.2L796.1 491.2M797.0 491.2L813.0 491.2M814.5 491.2L826.4 491.2M829.4 491.2L852.3 491.2M760.1 493.2L798.5 493.2M799.4 493.2L824.8 493.2M826.6 493.2L865.9 493.2M763.9 495.3L788.9 495.3M790.2 495.3L805.4 495.3M808.3 495.3L843.6 495.3M760.1 497.2L777.1 497.2M779.3 497.2L817.9 497.2M764.5 500.0L799.4 500.0M801.5 500.0L835.1 500.0M763.9 502.2L782.6 502.2M785.5 502.2L806.2 502.2M809.0 502.2L840.2 502.2M762.7 504.6L774.9 504.6M777.9 504.6L806.7 504.6M809.5 504.6L831.4 504.6M833.9 504.6L848.7 504.6M764.6 506.6L783.9 506.6M785.8 506.6L822.8 506.6M825.6 506.6L849.6 506.6M763.6 509.2L789.4 509.2M791.2 509.2L817.0 509.2M817.8 509.2L843.7 509.2M762.2 512.5L789.8 512.5M791.6 512.5L821.8 512.5M762.8 514.7L801.0 514.7M801.8 514.7L813.7 514.7M814.4 514.7L830.1 514.7M832.3 514.7L865.4 514.7M764.4 516.8L803.4 516.8M806.3 516.8L827.0 516.8M830.0 516.8L864.6 516.8M761.6 518.9L792.7 518.9M794.6 518.9L816.7 518.9M818.0 518.9L846.0 518.9M760.5 522.3L777.0 522.3M779.5 522.3L796.1 522.3M797.7 522.3L834.8 522.3M760.4 524.8L798.4 524.8M800.9 524.8L811.6 524.8M812.2 524.8L847.8 524.8M761.2 527.5L772.7 527.5M773.3 527.5L787.8 527.5M789.0 527.5L821.3 527.5M823.1 527.5L836.8 527.5M837.3 527.5L853.3 527.5M764.1 529.5L785.9 529.5M788.5 529.5L809.1 529.5M811.3 529.5L850.7 529.5M761.7 531.9L771.5 531.9M772.2 531.9L803.9 531.9M804.8 531.9L815.5 531.9M818.2 531.9L847.6 531.9M779.8 535.3L799.2 535.3M800.7 535.3L823.9 535.3M824.9 535.3L849.0 535.3M762.6 538.1L794.7 538.1M797.0 538.1L833.1 538.1M764.2 540.0L800.7 540.0M803.1 540.0L837.0 540.0M838.9 540.0L863.0 540.0M763.4 543.2L793.6 543.2M794.2 543.2L806.4 543.2M807.2 543.2L841.9 543.2M844.0 543.2L872.1 543.2M873.8 543.2L881.9 543.2M762.7 545.8L791.8 545.8M794.1 545.8L810.2 545.8M811.3 545.8L842.7 545.8M845.0 545.8L884.0 545.8M763.4 548.4L796.0 548.4M798.1 548.4L808.5 548.4M809.7 548.4L841.5 548.4M843.4 548.4L851.8 548.4M853.0 548.4L882.5 548.4M762.6 550.7L785.5 550.7M786.2 550.7L822.8 550.7M825.8 550.7L863.8 550.7M761.0 553.0L799.3 553.0M801.3 553.0L813.8 553.0M816.7 553.0L828.9 553.0M830.7 553.0L867.1 553.0M760.0 554.9L783.8 554.9M785.0 554.9L797.5 554.9M798.8 554.9L833.7 554.9M836.1 554.9L870.9 554.9M784.4 557.2L803.9 557.2M805.1 557.2L814.7 557.2M835.5 557.2L852.0 557.2M764.7 560.4L790.3 560.4M790.9 560.4L822.3 560.4M824.7 560.4L853.3 560.4M854.0 560.4L884.0 560.4M794.3 562.8L823.3 562.8M825.2 562.8L845.8 562.8M760.5 565.0L779.4 565.0M780.5 565.0L796.8 565.0M799.5 565.0L831.5 565.0M833.0 565.0L857.8 565.0M859.1 565.0L869.1 565.0M872.0 565.0L884.0 565.0M761.1 568.2L777.8 568.2M804.1 568.2L840.1 568.2M840.7 568.2L871.4 568.2M764.6 570.6L799.1 570.6M802.0 570.6L817.9 570.6M818.8 570.6L843.5 570.6M846.4 570.6L877.5 570.6M781.5 572.5L799.2 572.5M800.3 572.5L828.7 572.5M829.5 572.5L839.7 572.5M841.7 572.5L862.1 572.5M864.1 572.5L872.4 572.5M762.4 575.7L777.9 575.7M780.8 575.7L811.3 575.7M811.9 575.7L835.8 575.7M837.4 575.7L853.6 575.7M856.4 575.7L871.7 575.7M873.0 575.7L884.0 575.7M763.7 578.8L787.9 578.8M790.8 578.8L808.8 578.8M809.8 578.8L824.9 578.8M826.2 578.8L864.6 578.8M865.6 578.8L880.7 578.8M761.1 581.3L800.2 581.3M800.9 581.3L810.8 581.3M813.5 581.3L849.8 581.3M852.8 581.3L884.0 581.3M763.7 584.6L772.8 584.6M774.2 584.6L794.2 584.6M795.1 584.6L803.2 584.6M804.6 584.6L843.1 584.6M846.0 584.6L860.7 584.6M863.2 584.6L884.0 584.6M761.9 587.2L799.3 587.2M800.7 587.2L837.4 587.2M838.9 587.2L872.9 587.2M873.5 587.2L882.6 587.2M763.7 589.4L800.5 589.4M801.7 589.4L840.3 589.4M841.5 589.4L872.4 589.4M873.6 589.4L881.7 589.4M764.7 592.3L773.5 592.3M815.3 592.3L831.3 592.3M833.0 592.3L870.7 592.3M763.0 595.3L781.5 595.3M782.9 595.3L816.0 595.3M817.0 595.3L849.0 595.3M849.7 595.3L858.8 595.3M860.1 595.3L884.0 595.3M773.3 597.6L804.0 597.6M805.1 597.6L826.4 597.6M828.6 597.6L860.5 597.6M862.7 597.6L874.5 597.6M778.0 600.6L790.9 600.6M792.9 600.6L811.3 600.6M814.3 600.6L838.5 600.6M775.1 603.7L786.9 603.7M817.9 603.7L853.7 603.7M763.0 605.7L790.8 605.7M792.2 605.7L804.8 605.7M805.9 605.7L833.1 605.7M834.1 605.7L842.5 605.7M844.7 605.7L858.6 605.7M783.0 607.7L811.5 607.7M812.4 607.7L842.6 607.7M764.3 610.2L804.2 610.2M805.2 610.2L836.5 610.2M837.0 610.2L873.9 610.2M800.4 612.7L828.3 612.7M830.1 612.7L842.7 612.7M775.9 616.1L815.1 616.1M815.7 616.1L853.4 616.1M780.5 618.2L815.6 618.2M816.6 618.2L831.6 618.2M833.4 618.2L853.6 618.2M762.8 620.1L795.1 620.1M797.6 620.1L809.4 620.1M811.3 620.1L839.4 620.1M840.9 620.1L867.5 620.1M787.8 622.0L820.3 622.0M821.9 622.0L835.7 622.0M836.4 622.0L848.6 622.0M763.7 623.9L796.6 623.9M797.2 623.9L821.3 623.9M824.2 623.9L836.5 623.9M839.5 623.9L871.0 623.9M763.4 500.9L763.4 518.4M763.4 519.6L763.4 551.8M763.4 556.0L763.4 567.8M763.4 572.5L763.4 586.1M768.1 470.8L768.1 500.0M768.1 502.9L768.1 528.1M768.1 532.5L768.1 555.5M768.1 574.2L768.1 592.8M771.5 473.8L771.5 493.8M771.5 497.6L771.5 506.9M771.5 537.0L771.5 562.9M771.5 563.4L771.5 572.3M771.5 575.6L771.5 595.2M774.1 471.8L774.1 482.6M774.1 484.2L774.1 507.9M774.1 509.3L774.1 534.2M774.1 535.3L774.1 568.6M774.1 569.7L774.1 580.3M774.1 584.8L774.1 613.9M778.0 471.8L778.0 497.2M778.0 501.9L778.0 529.7M778.0 534.3L778.0 543.5M778.0 545.8L778.0 560.2M778.0 564.2L778.0 572.5M778.0 577.3L778.0 589.1M778.0 592.4L778.0 614.0M781.3 470.2L781.3 502.3M781.3 506.0L781.3 514.1M781.3 518.0L781.3 538.6M781.3 541.1L781.3 555.2M781.3 556.7L781.3 565.8M781.3 569.7L781.3 596.4M781.3 600.1L781.3 615.3M784.6 473.2L784.6 507.3M784.6 511.7L784.6 520.1M784.6 590.2L784.6 617.0M788.7 474.3L788.7 494.1M788.7 497.2L788.7 513.5M788.7 528.0L788.7 536.7M788.7 541.4L788.7 558.7M788.7 559.4L788.7 568.5M788.7 571.8L788.7 598.7M788.7 599.5L788.7 623.4M793.2 488.9L793.2 522.3M793.2 523.8L793.2 534.8M793.2 539.1L793.2 569.0M793.2 573.2L793.2 598.3M793.2 599.3L793.2 609.9M793.2 611.3L793.2 624.0M796.4 471.4L796.4 498.7M796.4 500.7L796.4 534.7M796.4 539.0L796.4 563.7M796.4 566.1L796.4 585.9M796.4 587.9L796.4 615.0M800.9 470.9L800.9 478.9M800.9 482.8L800.9 517.2M800.9 519.9L800.9 541.2M800.9 542.5L800.9 563.9M800.9 584.9L800.9 598.7M800.9 601.5L800.9 612.4M805.3 473.1L805.3 490.7M805.3 493.0L805.3 525.1M805.3 529.6L805.3 538.2M805.3 539.9L805.3 572.3M805.3 574.5L805.3 606.3M805.3 608.9L805.3 624.0M809.4 471.7L809.4 488.6M809.4 492.9L809.4 518.7M809.4 520.0L809.4 539.8M809.4 542.9L809.4 554.4M809.4 558.8L809.4 573.3M809.4 575.1L809.4 602.1M809.4 603.3L809.4 615.5M812.7 470.9L812.7 505.3M812.7 506.2L812.7 540.2M812.7 542.4L812.7 577.0M812.7 580.8L812.7 600.6M812.7 603.9L812.7 614.8M812.7 617.1L812.7 624.0M816.9 472.5L816.9 497.6M816.9 498.7L816.9 523.0M816.9 526.8L816.9 559.4M816.9 562.4L816.9 590.7M821.1 473.2L821.1 493.5M821.1 496.8L821.1 507.4M821.1 511.5L821.1 538.7M821.1 540.3L821.1 559.8M821.1 563.1L821.1 582.1M821.1 586.8L821.1 599.7M821.1 603.8L821.1 622.2M823.8 472.7L823.8 485.1M823.8 489.8L823.8 511.8M823.8 514.9L823.8 537.5M823.8 540.3L823.8 565.6M823.8 588.9L823.8 615.4M827.2 470.3L827.2 485.7M827.2 486.3L827.2 505.6M827.2 509.2L827.2 526.7M827.2 559.1L827.2 573.0M827.2 575.3L827.2 589.0M827.2 593.0L827.2 622.9M831.1 471.1L831.1 505.2M831.1 508.5L831.1 538.6M831.1 541.2L831.1 557.2M831.1 558.3L831.1 588.8M831.1 593.1L831.1 608.3M831.1 610.0L831.1 624.0M835.3 471.4L835.3 486.0M835.3 488.7L835.3 508.2M835.3 533.8L835.3 543.4M835.3 548.0L835.3 577.1M835.3 581.4L835.3 606.5M835.3 607.0L835.3 624.0M838.2 470.7L838.2 485.0M838.2 519.0L838.2 548.1M838.2 552.7L838.2 581.9M838.2 583.3L838.2 610.0M841.4 471.2L841.4 482.9M841.4 483.7L841.4 504.3M841.4 507.0L841.4 528.5M841.4 532.9L841.4 541.0M841.4 543.6L841.4 566.8M841.4 571.1L841.4 589.2M841.4 594.1L841.4 604.1M841.4 607.5L841.4 616.2M846.2 494.3L846.2 521.7M846.2 523.7L846.2 555.0M846.2 557.6L846.2 579.8M846.2 581.2L846.2 601.0M846.2 604.0L846.2 624.0M849.8 472.5L849.8 487.9M849.8 492.7L849.8 518.4M849.8 520.4L849.8 537.0M849.8 540.1L849.8 565.2M849.8 596.4L849.8 605.7M854.5 531.0L854.5 557.4M854.5 560.9L854.5 581.3M854.5 582.2L854.5 595.1M854.5 599.1L854.5 624.0M858.9 562.4L858.9 585.8M861.6 537.8L861.6 556.9M861.6 560.3L861.6 574.0M861.6 574.6L861.6 582.7M864.3 538.3L864.3 569.4M864.3 570.3L864.3 595.3M869.0 553.2L869.0 584.4M869.0 585.2L869.0 603.1M873.5 556.1L873.5 585.2M877.5 527.3L877.5 559.3M877.5 591.2L877.5 606.9M881.9 547.3L881.9 578.3M881.9 581.9L881.9 614.6M855.7 478.2L871.1 478.2M854.8 481.7L884.0 481.7M854.9 486.7L870.3 486.7M853.9 490.8L868.0 490.8M853.0 495.2L877.6 495.2M854.2 498.4L884.0 498.4M853.6 502.2L862.3 502.2M865.2 502.2L884.0 502.2M851.2 509.4L865.6 509.4M866.3 509.4L876.0 509.4M851.3 514.6L878.5 514.6M854.2 519.0L884.0 519.0M854.4 536.3L871.9 536.3M874.3 536.3L884.0 536.3M853.4 539.6L866.8 539.6M867.7 539.6L884.0 539.6M851.2 498.0L851.2 530.0M857.7 477.3L857.7 494.4M857.7 497.1L857.7 522.0M857.7 523.5L857.7 533.1M862.8 477.1L862.8 489.3M862.8 493.5L862.8 510.6M870.3 478.3L870.3 492.0M870.3 493.8L870.3 508.8M874.8 476.4L874.8 508.6M879.5 475.0L879.5 505.5M879.5 528.1L879.5 540.0M890.0 481.9L900.5 481.9M902.5 481.9L926.4 481.9M927.4 481.9L942.0 481.9M890.0 484.6L900.1 484.6M901.6 484.6L932.7 484.6M901.7 487.8L937.6 487.8M890.9 489.9L917.9 489.9M919.7 489.9L942.0 489.9M893.1 492.9L928.8 492.9M931.1 492.9L942.0 492.9M893.8 496.1L917.6 496.1M919.4 496.1L942.0 496.1M889.9 498.3L901.2 498.3M903.7 498.3L912.7 498.3M915.0 498.3L929.2 498.3M889.5 501.2L925.3 501.2M926.0 501.2L937.9 501.2M889.7 503.7L916.6 503.7M917.5 503.7L942.0 503.7M893.7 506.8L914.1 506.8M916.7 506.8L941.5 506.8M890.7 509.9L906.4 509.9M908.0 509.9L942.0 509.9M893.2 513.0L903.0 513.0M905.8 513.0L942.0 513.0M890.8 515.9L915.8 515.9M917.4 515.9L941.5 515.9M892.9 519.2L930.9 519.2M892.2 521.1L908.7 521.1M893.8 523.6L911.0 523.6M913.1 523.6L924.9 523.6M927.8 523.6L942.0 523.6M889.7 526.3L901.7 526.3M902.9 526.3L924.0 526.3M925.1 526.3L935.9 526.3M890.0 529.2L920.7 529.2M922.6 529.2L942.0 529.2M890.1 531.4L914.5 531.4M916.5 531.4L924.9 531.4M927.5 531.4L942.0 531.4M893.9 533.7L911.4 533.7M912.3 533.7L922.4 533.7M924.0 533.7L934.0 533.7M893.8 535.9L925.4 535.9M926.8 535.9L942.0 535.9M893.1 539.0L917.7 539.0M920.0 539.0L942.0 539.0M892.4 480.6L892.4 512.1M892.4 516.1L892.4 539.9M896.3 514.5L896.3 532.7M899.8 482.8L899.8 501.2M899.8 505.2L899.8 536.1M902.8 482.9L902.8 506.6M902.8 511.2L902.8 528.0M906.4 484.6L906.4 492.8M910.2 483.4L910.2 501.9M910.2 526.1L910.2 540.0M913.7 511.1L913.7 532.3M917.5 484.1L917.5 496.7M917.5 501.6L917.5 531.9M922.0 485.0L922.0 516.9M922.0 518.1L922.0 534.0M926.0 503.9L926.0 513.1M926.0 517.1L926.0 533.4M930.0 483.3L930.0 496.7M930.0 499.6L930.0 514.8M930.0 517.7L930.0 540.0M932.9 480.8L932.9 509.3M932.9 510.2L932.9 522.8M932.9 527.0L932.9 540.0M935.5 483.9L935.5 500.6M935.5 502.7L935.5 515.2M935.5 516.2L935.5 540.0M939.2 494.5L939.2 528.4M939.2 531.7L939.2 540.0M888.5 561.2L922.6 561.2M924.6 561.2L963.3 561.2M966.2 561.2L982.0 561.2M886.4 565.9L919.8 565.9M920.7 565.9L940.2 565.9M943.1 565.9L960.4 565.9M961.2 565.9L986.3 565.9M885.8 570.4L901.6 570.4M902.8 570.4L918.4 570.4M920.6 570.4L939.5 570.4M941.7 570.4L952.7 570.4M955.3 570.4L967.4 570.4M970.0 570.4L990.0 570.4M885.9 574.8L924.6 574.8M927.4 574.8L951.6 574.8M953.2 574.8L965.4 574.8M966.6 574.8L990.0 574.8M887.0 578.0L901.8 578.0M902.6 578.0L927.1 578.0M928.2 578.0L960.9 578.0M963.1 578.0L989.2 578.0M884.9 580.9L920.1 580.9M922.3 580.9L933.8 580.9M935.2 580.9L959.2 580.9M959.8 580.9L977.8 580.9M888.5 584.5L921.3 584.5M924.0 584.5L936.2 584.5M936.8 584.5L966.5 584.5M967.9 584.5L989.1 584.5M888.2 587.7L907.5 587.7M922.5 587.7L953.3 587.7M953.9 587.7L967.1 587.7M968.3 587.7L988.5 587.7M886.9 592.3L917.8 592.3M919.4 592.3L949.3 592.3M949.8 592.3L984.5 592.3M884.2 596.4L900.1 596.4M919.6 596.4L930.4 596.4M931.9 596.4L963.8 596.4M888.1 600.7L916.2 600.7M916.9 600.7L947.2 600.7M949.0 600.7L986.7 600.7M912.9 605.3L938.3 605.3M938.9 605.3L958.4 605.3M959.4 605.3L977.3 605.3M910.2 608.5L927.8 608.5M928.6 608.5L954.7 608.5M957.2 608.5L982.7 608.5M887.8 612.2L922.4 612.2M923.7 612.2L943.2 612.2M943.8 612.2L960.8 612.2M963.1 612.2L985.4 612.2M895.1 615.3L905.8 615.3M908.7 615.3L934.8 615.3M936.5 615.3L958.4 615.3M885.2 618.5L897.7 618.5M900.1 618.5L935.0 618.5M935.9 618.5L964.4 618.5M967.2 618.5L980.6 618.5M888.1 621.6L906.4 621.6M908.2 621.6L928.1 621.6M929.2 621.6L938.5 621.6M940.6 621.6L974.8 621.6M884.8 625.4L902.4 625.4M903.1 625.4L933.1 625.4M934.7 625.4L973.7 625.4M974.3 625.4L990.0 625.4M888.2 628.1L923.6 628.1M925.1 628.1L942.2 628.1M944.0 628.1L965.5 628.1M967.1 628.1L990.0 628.1M885.5 631.2L907.7 631.2M909.0 631.2L923.3 631.2M887.4 634.0L914.9 634.0M916.8 634.0L955.3 634.0M957.4 634.0L975.0 634.0M977.7 634.0L986.6 634.0M885.9 638.2L912.4 638.2M914.3 638.2L940.3 638.2M941.1 638.2L954.9 638.2M956.8 638.2L968.4 638.2M969.5 638.2L980.5 638.2M887.1 560.6L887.1 582.4M887.1 583.3L887.1 602.3M887.1 604.8L887.1 636.1M893.4 560.6L893.4 595.3M893.4 596.3L893.4 626.7M899.8 560.7L899.8 589.6M899.8 591.2L899.8 609.3M899.8 612.4L899.8 626.2M905.6 592.0L905.6 604.5M905.6 606.6L905.6 635.2M909.8 593.5L909.8 602.7M909.8 603.6L909.8 626.5M914.5 561.0L914.5 581.0M914.5 584.1L914.5 595.2M914.5 596.2L914.5 625.8M914.5 628.8L914.5 639.0M918.8 564.4L918.8 586.9M918.8 591.1L918.8 624.7M918.8 626.7L918.8 638.8M925.2 560.2L925.2 573.1M925.2 576.7L925.2 595.3M925.2 596.5L925.2 627.3M930.1 561.1L930.1 593.2M930.1 593.9L930.1 606.5M930.1 609.1L930.1 632.7M930.1 634.8L930.1 639.0M934.0 562.3L934.0 596.9M934.0 598.1L934.0 624.2M934.0 625.9L934.0 639.0M939.6 564.8L939.6 599.6M944.6 595.6L944.6 622.0M950.5 561.8L950.5 584.6M950.5 585.4L950.5 602.5M950.5 607.4L950.5 628.4M950.5 630.0L950.5 639.0M954.3 564.4L954.3 584.6M954.3 587.6L954.3 603.8M954.3 604.6L954.3 620.8M961.1 562.9L961.1 573.1M961.1 576.2L961.1 610.9M965.9 561.3L965.9 569.9M965.9 571.6L965.9 598.6M965.9 600.9L965.9 614.3M965.9 618.7L965.9 639.0M972.8 563.0L972.8 573.1M972.8 577.6L972.8 594.8M972.8 622.0L972.8 639.0M979.1 563.2L979.1 582.2M979.1 584.2L979.1 593.8M979.1 594.5L979.1 619.4M979.1 622.1L979.1 639.0M983.0 588.6L983.0 613.2M983.0 615.2L983.0 625.7M989.4 562.1L989.4 584.7M989.4 587.7L989.4 613.4M989.4 615.4L989.4 639.0M933.2 615.4Q932.7 619.6 933.2 623.9M909.6 623.6Q911.4 625.3 913.0 627.1M926.4 632.6Q929.1 632.1 931.9 632.6M944.8 638.7Q948.2 640.1 951.6 641.4M920.6 610.7Q925.4 614.6 930.2 610.7M938.6 635.7Q936.3 639.9 938.6 644.1M902.8 640.3Q900.2 643.6 902.8 646.8M911.2 611.8Q915.3 614.2 919.7 612.6M892.7 627.9Q895.6 626.3 898.5 627.9M910.4 637.6Q913.2 634.9 916.1 637.6M890.2 630.2Q889.0 632.6 890.2 634.9M925.6 615.0Q927.7 620.4 933.4 621.3M916.2 638.6Q920.4 641.3 924.6 638.6M905.1 616.3Q908.3 615.1 911.5 616.3M923.8 639.4Q926.0 641.0 928.3 639.4M930.9 605.7Q927.9 609.9 930.9 614.1M945.7 615.0Q947.3 613.8 948.9 615.0M906.3 622.6Q905.3 625.3 906.3 628.1M894.1 616.6Q889.6 621.3 894.1 626.0M890.9 612.7Q895.1 609.6 899.4 612.7M922.9 625.3Q926.9 629.1 930.8 625.3M907.0 636.5Q909.0 636.6 910.9 636.5M889.1 612.3Q887.8 615.4 886.4 618.5M895.4 617.1Q892.4 620.3 895.4 623.6M937.6 640.0Q940.2 639.0 942.1 641.0M904.1 606.6Q903.1 608.2 904.1 609.9M943.3 613.9Q943.0 616.5 943.3 619.2M920.3 629.5Q916.6 633.6 911.2 633.3M913.1 624.0Q910.9 626.8 913.1 629.7M934.8 637.2Q935.4 642.1 940.3 642.3M903.5 626.6Q906.3 627.5 909.2 626.6M893.9 627.0Q893.3 628.6 893.9 630.2M907.5 627.9Q912.2 628.9 911.2 633.6M931.5 635.6Q933.3 638.9 931.5 642.1M924.9 631.5Q922.2 634.3 924.9 637.2M904.2 628.4Q908.1 630.8 912.7 630.4M941.7 632.3Q939.9 634.1 937.4 634.6M922.6 625.1Q927.8 624.8 932.4 627.2M900.7 610.3Q903.5 612.0 906.2 610.3M915.2 627.7Q919.6 626.1 924.0 627.7M909.6 636.0Q911.9 638.4 911.3 641.7M894.9 617.2Q893.5 621.5 894.9 625.8M904.7 614.7Q907.6 615.7 910.4 616.9M934.5 632.1Q934.5 634.1 934.5 636.1M926.6 627.0Q929.8 630.4 926.6 633.7M900.4 625.1Q901.8 626.1 903.3 626.9M941.3 613.5Q941.1 616.0 942.2 618.2M938.0 611.5Q934.6 611.9 933.2 615.1M941.5 630.5Q938.8 633.4 941.5 636.2M913.6 626.5Q916.5 626.8 917.1 629.7M924.3 640.2Q928.7 641.7 933.2 640.2M907.8 606.6Q910.0 610.2 910.8 614.3M942.3 627.8Q946.5 628.9 950.4 630.6M915.3 635.1Q918.3 634.7 921.2 635.1M917.0 622.9Q917.0 628.1 912.5 630.5M919.9 638.3Q918.5 640.8 919.9 643.3M895.7 612.2Q897.5 612.2 899.3 612.2M937.3 612.0Q940.4 613.3 943.5 612.0M916.5 606.0Q920.2 609.1 918.5 613.6M912.2 605.9Q915.9 606.0 919.6 605.9M889.3 640.6Q889.9 643.0 889.3 645.5M926.8 615.1Q925.1 618.5 921.4 617.1M906.4 636.1Q908.0 640.4 906.4 644.7M896.5 611.7Q892.8 612.6 889.1 613.3M922.3 617.5Q925.5 620.5 929.2 622.6M891.9 615.6Q890.8 619.5 893.8 622.1M891.0 612.1Q894.0 614.0 897.1 612.1M922.7 620.8Q927.5 616.6 932.3 620.8M913.7 627.7Q915.4 628.7 917.1 627.7M917.3 604.5Q921.4 604.5 925.4 604.5M927.4 629.0Q929.9 627.2 932.5 629.0M941.3 611.7Q943.2 613.3 945.0 611.7M912.6 628.4Q910.4 629.4 908.0 629.8M938.5 638.2Q939.3 640.1 938.5 642.1M902.3 625.5Q904.9 624.5 907.5 625.5M903.7 624.3Q901.1 622.6 899.3 625.1M911.3 605.2Q914.1 606.1 917.0 605.2M928.6 611.3Q927.8 613.4 928.6 615.4M895.5 634.7Q893.2 633.5 891.8 635.6M919.0 614.8Q916.9 617.5 919.0 620.2M941.0 611.4Q942.3 613.6 943.9 615.5M894.0 609.2Q896.5 609.6 898.9 609.2M906.1 625.5Q907.9 627.1 909.8 625.5M926.4 605.9Q929.1 604.9 931.8 605.9M909.8 608.1Q905.8 610.1 902.5 613.0M894.5 624.4Q898.4 628.7 894.5 632.9M891.3 625.4Q890.8 628.4 891.3 631.3M909.1 617.9Q912.9 619.1 916.8 617.9M894.1 604.2Q896.8 607.9 894.1 611.7M894.4 636.5Q894.2 638.4 894.4 640.3M907.5 613.1Q908.4 616.6 907.5 620.1M900.3 618.9Q902.5 619.9 904.7 618.9M919.5 612.9Q921.3 612.8 923.1 612.9M934.1 625.1Q938.0 622.4 941.9 625.1M950.0 645.1Q949.6 648.0 950.0 650.9M947.8 668.6Q948.8 670.8 951.1 671.7M946.9 653.1Q950.5 651.0 954.1 653.1M957.6 650.5Q957.1 653.0 957.6 655.6M948.7 655.7Q953.5 651.8 958.3 655.7M949.7 671.1Q947.6 675.0 949.7 678.9M949.1 678.2Q953.0 682.1 956.9 678.2M957.9 661.7Q961.1 663.4 964.4 661.7M955.5 651.4Q958.6 655.1 955.5 658.7M956.8 656.9Q954.6 656.0 952.6 657.4M953.4 653.6Q957.4 655.5 961.3 653.6M958.5 673.7Q957.2 677.6 959.9 680.7M959.1 655.1Q962.3 660.3 958.1 664.7M960.5 673.1Q962.9 671.9 965.3 673.1M842.2 649.4Q837.6 653.0 840.0 658.3M832.0 651.0Q830.1 653.8 832.0 656.7M838.7 642.3Q837.5 646.1 838.7 649.9M848.2 647.4Q851.7 648.0 851.2 651.6M833.1 653.2Q835.2 656.2 833.1 659.1M841.4 642.2Q844.2 641.0 847.1 642.2M832.7 645.1Q833.1 649.0 834.1 652.8M835.6 644.2Q839.3 643.4 843.0 644.2M837.3 643.3Q836.8 645.8 839.2 647.0M849.2 645.6Q847.4 648.1 844.4 647.6M846.8 643.4Q850.1 640.8 853.5 643.4M835.7 649.5Q835.3 654.3 830.5 655.1M841.5 653.9Q840.4 657.2 841.5 660.5M832.4 650.4Q833.6 653.4 832.4 656.5M844.5 651.3Q849.3 655.2 854.0 651.3M718.8 557.6L758.1 557.6M719.8 563.4L742.1 563.4M733.7 567.2L746.4 567.2M748.3 567.2L757.8 567.2M718.4 572.9L750.8 572.9M721.0 578.6L750.7 578.6M717.8 583.2L744.2 583.2M746.7 583.2L759.0 583.2M717.8 589.6L749.4 589.6M750.7 589.6L759.0 589.6M721.8 596.4L735.8 596.4M738.7 596.4L753.0 596.4M719.9 559.8L719.9 575.0M719.9 579.6L719.9 599.8M728.6 556.6L728.6 568.7M728.6 571.3L728.6 594.4M738.0 557.6L738.0 573.4M738.0 575.1L738.0 600.0M745.8 556.8L745.8 590.1M745.8 591.7L745.8 600.0M754.1 557.1L754.1 586.9M748.9 491.6L760.0 491.6M722.9 496.4L758.8 496.4M726.5 502.2L738.8 502.2M739.4 502.2L760.0 502.2M724.9 508.0L745.8 508.0M722.8 514.3L752.2 514.3M726.1 520.3L754.9 520.3M723.4 525.9L733.5 525.9M736.1 525.9L752.8 525.9M753.9 525.9L760.0 525.9M723.8 532.1L754.2 532.1M722.7 537.8L739.5 537.8M741.1 537.8L760.0 537.8M722.6 544.0L737.7 544.0M739.1 544.0L757.7 544.0M726.0 550.4L751.2 550.4M753.7 550.4L760.0 550.4M725.2 554.2L756.3 554.2M728.5 524.7L728.5 555.0M734.4 490.3L734.4 516.7M734.4 519.2L734.4 536.5M734.4 538.8L734.4 554.4M741.9 490.2L741.9 503.5M741.9 504.9L741.9 520.1M741.9 523.7L741.9 555.0M751.3 491.6L751.3 519.0M751.3 532.6L751.3 555.0M757.3 491.2L757.3 525.9M757.3 526.6L757.3 539.4M676.8 560.7Q681.0 564.2 685.2 560.7M707.8 572.6Q712.1 572.9 716.5 572.6M683.3 569.4Q686.0 570.5 688.8 569.4M714.5 591.3Q716.6 594.3 714.5 597.3M712.3 571.2Q714.1 572.2 716.1 572.5M689.1 555.3Q686.6 559.7 689.1 564.1M681.2 576.2Q680.0 580.9 681.2 585.6M711.8 572.9Q715.6 570.7 719.3 572.9M688.0 587.6Q689.8 587.4 691.6 587.6M697.7 589.1Q701.6 589.6 705.5 589.1M704.4 586.9Q701.6 587.8 702.4 590.6M704.3 572.4Q708.8 576.1 713.4 572.4M699.0 557.3Q701.3 555.0 703.6 557.3M697.5 582.6Q697.5 585.7 694.4 585.9M676.2 591.1Q680.5 590.3 684.8 591.1M714.4 590.5Q718.4 592.2 722.7 591.7M713.4 564.7Q715.4 565.8 717.4 564.7M711.7 558.6Q711.5 560.6 711.3 562.6M676.8 584.1Q681.4 580.2 686.0 584.1M673.3 579.0Q672.7 580.7 672.6 582.5M708.0 557.9Q708.1 559.6 708.0 561.3M702.2 575.7Q703.3 578.1 705.9 578.2M692.6 559.5Q689.0 563.3 692.6 567.1M699.6 558.2Q702.9 559.7 706.2 558.2M710.2 586.4Q710.9 588.2 710.2 590.1M685.3 573.3Q688.8 569.8 692.3 573.3M675.4 559.2Q675.0 563.2 673.0 566.7M716.3 589.2Q717.9 592.7 721.8 593.5M675.6 555.8Q674.0 556.7 673.3 558.4M710.2 570.9Q710.8 575.5 710.2 580.1M703.8 564.3Q704.4 566.9 703.8 569.5M679.3 561.0Q676.8 565.8 679.3 570.7M709.7 591.8Q713.8 587.8 717.9 591.8M696.2 567.6Q699.6 571.0 696.2 574.4M706.7 563.8Q709.4 561.7 712.1 563.8M709.1 566.6Q713.2 568.9 712.1 573.4M692.6 562.8Q694.3 564.3 696.0 562.8M690.3 588.8Q694.3 590.0 698.2 588.8M681.8 582.9Q679.8 587.5 681.8 592.1M716.5 561.5Q712.6 562.5 713.2 566.6M684.8 569.5Q687.5 570.5 690.2 569.5M681.4 564.6Q682.4 570.5 677.2 573.4M675.1 557.5Q678.5 555.8 680.7 558.9M672.7 568.4Q672.1 570.4 672.7 572.4M695.0 587.5Q699.7 585.2 704.4 587.5M689.8 580.8Q691.9 582.3 694.0 580.8M692.7 566.9Q694.9 565.2 697.2 566.9M681.4 568.0Q684.1 565.7 686.7 568.0M676.0 584.0Q678.5 587.8 676.0 591.6M678.5 558.6Q684.0 561.7 682.0 567.8M698.3 557.3Q700.8 559.5 703.3 557.3M688.0 575.1Q689.8 576.6 689.7 578.9M688.5 574.4Q690.4 573.5 692.3 574.4M689.1 583.3Q691.4 584.5 693.7 583.3M710.4 563.9Q715.0 559.8 719.6 563.9M701.9 585.9Q701.9 588.3 701.9 590.6M676.9 575.5Q677.1 578.8 676.9 582.0M679.8 563.5Q682.9 562.1 685.9 563.5M692.0 563.8Q694.9 562.9 697.3 564.8M705.5 575.8Q709.0 580.4 705.5 584.9M714.5 574.4Q715.8 576.8 714.5 579.1M675.7 564.8Q679.8 569.1 676.9 574.2M708.3 578.3Q709.9 580.2 708.3 582.0M703.7 572.6Q702.9 575.0 703.5 577.4M695.2 555.9Q692.3 557.6 690.8 560.5M706.8 579.6Q705.6 581.6 706.8 583.6M714.6 582.4Q719.0 585.4 718.2 590.6M682.2 577.1Q686.9 580.4 691.5 577.1M684.8 591.1Q684.1 595.5 684.8 600.0M714.3 569.9Q716.3 573.8 714.3 577.6M693.5 573.9Q698.3 575.1 703.1 573.9M681.7 585.9Q682.7 588.1 681.7 590.3M715.9 583.0Q715.3 584.6 715.9 586.2M673.0 568.8Q675.1 567.4 677.2 568.8M708.5 577.4Q710.8 580.6 708.5 583.8M682.8 559.5Q687.7 564.3 692.5 559.5M678.1 566.9Q680.8 571.0 678.1 575.2M698.4 571.7Q696.2 574.3 692.8 573.8M678.8 582.5Q683.7 578.2 688.6 582.5M713.2 558.9Q712.4 560.4 713.2 562.0M679.9 560.1Q678.8 561.9 679.9 563.6M701.4 574.0Q702.7 575.4 704.2 576.6M702.6 568.7Q705.4 572.0 702.6 575.3M712.4 576.1Q711.8 578.2 712.4 580.4M690.5 590.4Q687.9 590.7 686.5 592.9M700.1 572.5Q703.9 572.0 707.8 572.5M687.3 583.1Q682.9 588.0 687.3 592.8M707.4 563.6Q710.4 563.9 713.4 563.6M690.0 560.0Q692.7 563.3 693.3 567.5M701.9 583.4Q703.8 584.8 705.7 583.4M677.1 573.9Q679.1 579.5 673.8 582.5M698.2 589.9Q698.1 593.8 701.3 596.2M686.2 585.0Q690.1 584.2 694.0 585.0M677.3 578.3Q679.8 579.0 682.3 578.3M703.7 590.8Q703.1 592.9 703.7 595.1M679.4 557.4Q680.3 561.5 676.3 562.8M712.4 577.0Q715.3 574.5 718.3 577.0M672.2 561.4Q676.1 558.8 680.1 561.4M712.5 584.1Q714.9 586.1 717.2 584.1M715.6 560.5Q716.8 563.2 715.6 565.8M705.6 587.4Q707.4 590.0 705.6 592.7M676.1 578.1Q679.8 580.1 681.5 583.9M694.6 560.2Q698.2 562.0 701.8 560.2M709.8 570.6Q708.2 573.2 709.8 575.7M693.7 584.8Q696.8 586.5 699.6 588.8M673.0 613.6Q672.6 617.3 673.0 620.9M652.6 588.7Q656.0 589.6 659.2 591.1M690.6 601.1Q693.9 597.9 697.2 601.1M688.9 589.8Q688.0 592.2 686.8 594.4M655.9 588.4Q659.6 593.3 655.9 598.3M647.8 599.5Q644.3 600.2 644.6 603.8M693.3 593.4Q695.9 594.8 698.5 593.4M663.6 592.7Q666.2 595.0 668.8 592.7M698.4 599.5Q700.1 601.2 702.5 601.1M697.9 608.4Q701.1 605.9 704.3 608.4M648.3 596.5Q650.5 598.8 652.8 601.0M671.9 615.1Q674.3 619.4 674.3 624.3M671.7 618.1Q676.5 620.7 681.2 618.1M649.4 617.9Q648.3 620.1 645.9 619.6M672.9 605.8Q675.1 607.7 677.9 606.9M671.1 584.4Q674.6 582.8 676.6 586.1M661.9 611.7Q663.8 611.0 665.8 611.7M694.7 605.1Q693.2 608.1 694.7 611.0M670.4 594.5Q672.8 594.8 673.2 597.2M660.1 610.6Q662.6 615.2 660.1 619.9M655.5 613.4Q659.6 615.4 663.8 613.4M652.0 588.7Q657.1 588.9 661.2 591.9M659.4 591.2Q662.5 594.2 665.7 591.2M682.2 593.5Q679.7 597.6 674.9 597.2M669.9 613.9Q674.5 616.5 679.0 613.9M659.8 582.6Q661.4 583.7 663.0 582.6M694.8 591.6Q695.4 594.4 694.8 597.2M661.6 618.7Q660.1 619.6 660.0 621.3M679.2 617.5Q683.5 621.8 687.9 617.5M689.1 611.2Q693.3 613.2 695.2 617.4M671.1 593.3Q668.5 594.2 668.2 597.0M665.4 614.8Q669.9 617.9 674.3 614.8M703.2 615.9Q699.0 613.7 696.7 617.8M702.7 599.8Q705.8 601.2 708.9 599.8M666.4 583.6Q668.3 582.5 670.2 583.6M648.4 583.7Q647.2 587.8 648.4 591.9M663.3 600.1Q662.3 602.7 660.9 605.2M699.8 610.3Q696.6 609.4 695.0 612.3M681.2 620.9Q682.0 625.5 681.2 630.2M698.6 607.6Q696.7 609.8 698.6 612.1M684.8 615.5Q684.2 619.3 684.8 623.1M670.8 609.7Q674.0 609.4 676.6 611.4M675.9 610.8Q673.8 611.0 673.0 613.0M657.6 616.3Q656.2 621.3 657.6 626.3M648.8 597.7Q646.1 596.5 643.5 597.8M655.6 602.9Q658.8 603.6 662.1 602.9M667.4 614.3Q672.1 618.1 676.7 614.3M678.2 611.4Q682.7 608.7 687.3 611.4M645.5 601.1Q650.1 601.2 654.7 601.1M701.8 603.4Q703.8 603.1 705.8 603.4M681.3 591.4Q681.3 593.9 682.6 596.1M647.4 612.0Q651.7 614.1 656.0 612.0M658.7 591.2Q662.6 591.1 664.3 594.7M698.1 620.0Q696.4 624.1 698.1 628.1M688.1 591.9Q692.5 591.8 696.9 591.9M644.1 615.8Q639.3 615.7 635.5 618.6M652.8 599.4Q653.5 603.1 652.8 606.9M688.7 620.9Q688.2 623.2 688.7 625.5M662.8 587.5Q665.1 587.9 667.3 587.5M651.7 592.8Q649.2 594.3 646.5 595.7M702.6 599.9Q704.8 599.9 707.0 599.9M658.4 595.1Q661.3 594.2 664.1 595.1M670.4 595.1Q674.3 594.8 678.2 595.1M695.7 602.9Q696.2 604.6 695.7 606.2M683.1 617.8Q685.1 620.7 683.1 623.6M684.4 610.9Q683.9 612.4 682.8 613.4M696.8 612.6Q694.7 616.2 696.8 619.8M653.7 603.1Q657.5 606.1 661.3 603.1M693.6 582.1Q694.8 584.7 693.6 587.3M676.3 581.8Q675.4 585.2 676.3 588.6M673.6 594.3Q676.3 597.2 673.6 600.0M693.6 583.7Q697.9 581.7 702.3 583.7M664.6 613.9Q666.7 612.1 668.7 613.9M657.0 610.5Q659.0 608.7 661.0 610.5M660.4 610.3Q664.4 610.7 668.4 610.3M701.2 584.6Q705.9 580.2 710.6 584.6M674.8 610.2Q672.2 612.4 672.4 615.7M681.0 620.1Q682.6 618.6 684.3 620.1M664.3 608.8Q666.4 607.4 668.5 608.8M681.8 607.9Q683.5 612.8 681.8 617.7M669.4 598.8Q672.4 600.4 675.7 599.3M654.9 588.2Q655.2 590.3 656.7 591.8M671.6 605.9Q666.3 606.7 664.4 611.8M679.7 599.1Q678.2 603.6 679.7 608.2M675.7 586.9Q675.1 588.9 673.1 589.0M654.9 596.3Q658.8 596.5 662.7 596.4M644.3 612.9Q643.5 615.8 641.4 618.0M685.1 594.4Q686.4 598.0 683.5 600.5M699.5 588.6Q701.7 594.0 707.3 594.8M694.9 620.6Q698.6 622.9 699.1 627.2M681.9 587.3Q678.6 591.8 681.9 596.3M705.3 600.7Q703.0 605.1 705.3 609.5M679.5 617.3Q683.1 614.4 686.7 617.3M692.2 585.1Q692.5 587.6 692.2 590.1M689.0 591.3Q693.1 587.5 697.1 591.3M695.7 593.0Q696.7 594.7 695.7 596.4M675.5 601.0Q671.6 601.7 670.5 605.5M691.0 599.2Q692.6 603.5 693.8 607.9M651.4 611.0Q653.4 611.4 655.4 611.0M697.6 610.5Q694.2 615.3 697.6 620.0M660.1 601.3Q663.2 603.4 666.2 601.3M699.4 582.4Q702.3 585.2 700.0 588.6M662.0 614.6Q658.1 612.8 654.8 615.6M651.4 588.4Q654.7 591.1 657.9 588.4M657.8 615.3Q660.1 614.0 662.4 615.3M700.2 605.5Q697.3 609.6 692.8 612.0M682.7 619.7Q681.4 622.0 682.7 624.2M686.3 610.8Q684.4 613.3 686.8 615.4M701.2 587.4Q698.2 591.3 701.2 595.2M700.7 617.0Q697.8 618.4 694.6 618.3M678.4 611.5Q681.9 610.5 685.5 611.5M703.5 620.3Q704.0 622.3 703.5 624.2M677.9 593.6Q679.5 595.0 681.1 593.6M672.2 595.8Q668.3 597.7 663.9 597.4M702.9 606.4Q700.7 609.8 696.7 609.2M655.7 588.6Q652.2 589.2 652.6 592.6M648.0 581.4Q650.1 584.4 653.5 585.5M690.7 590.5Q692.6 592.3 694.5 590.5M686.0 609.5Q687.3 611.0 686.0 612.5M661.4 616.8Q658.2 620.7 661.4 624.7M680.5 614.0Q682.1 615.2 683.6 614.0M657.9 589.4Q657.3 591.3 656.9 593.1M664.1 619.7Q667.0 620.2 669.9 619.7M687.3 598.0Q684.1 602.4 678.9 600.9M666.6 607.5Q665.4 612.3 666.6 617.1M684.5 587.4Q681.1 591.5 684.5 595.5M666.9 602.7Q669.0 603.1 671.1 602.7M693.7 587.4Q692.9 590.6 692.1 593.7M672.7 611.0Q676.8 608.9 680.8 611.0M690.9 590.7Q695.3 593.6 699.7 590.7M680.5 598.2Q683.3 601.7 686.8 599.0M647.0 620.5Q649.4 619.1 651.7 620.5M610.6 611.1Q614.7 610.4 618.9 611.1M612.2 599.5Q617.0 596.4 621.7 599.5M616.3 618.0Q618.1 618.3 620.0 618.0M618.4 620.6Q613.9 621.9 612.8 626.5M611.4 578.7Q610.6 580.4 611.2 582.1M618.9 584.4Q620.0 588.1 620.5 591.9M609.9 597.6Q613.9 595.2 617.8 597.6M604.9 607.2Q603.3 612.2 604.9 617.2M612.9 578.7Q615.9 576.6 618.8 578.7M604.3 600.9Q609.3 599.7 614.3 600.9M624.5 588.1Q622.4 587.5 620.9 589.0M611.6 618.1Q616.0 614.3 620.3 618.1M616.4 606.0Q618.6 605.7 619.1 607.8M625.6 612.2Q627.5 611.2 629.4 612.2M633.3 588.8Q632.4 590.9 633.3 593.0M611.1 620.0Q614.2 620.3 617.2 620.0M616.2 587.3Q614.2 592.0 616.2 596.7M605.8 593.7Q609.7 596.6 613.5 593.7M604.8 590.5Q600.7 590.3 598.5 593.8M630.5 602.9Q628.1 607.1 626.3 611.7M612.3 586.0Q612.2 590.0 612.3 594.1M621.4 586.8Q623.7 589.3 621.4 591.7M616.2 603.3Q617.8 604.2 619.5 603.3M625.2 611.4Q627.4 613.9 629.9 616.0M620.0 589.9Q620.1 594.3 620.0 598.7M626.1 586.4Q626.4 589.5 626.1 592.5M604.8 592.9Q603.7 596.6 604.8 600.4M624.3 605.0Q628.2 603.7 632.2 605.0M615.5 596.2Q613.3 599.9 615.5 603.5M609.6 591.8Q608.8 593.9 606.6 594.1M605.4 585.7Q610.0 589.3 614.6 585.7M630.0 615.2Q632.1 618.2 630.0 621.3M623.2 608.4Q625.5 610.8 628.5 609.4M612.9 614.5Q617.6 611.3 622.2 614.5M627.9 599.4Q629.4 600.6 630.4 602.3M621.6 588.2Q620.8 589.8 621.6 591.4M626.3 582.0Q628.9 582.7 631.5 582.0M608.2 577.9Q611.3 581.8 608.2 585.6M625.4 614.4Q623.8 616.8 625.8 619.0M543.8 618.4Q547.1 618.5 550.4 618.4M543.9 608.7Q546.4 611.3 543.9 613.9M549.8 612.0Q551.3 614.9 549.8 617.8M569.9 613.2Q570.6 614.8 569.9 616.5M580.5 615.9Q580.8 620.9 580.5 625.8M570.5 607.7Q573.0 611.3 570.5 614.9M590.5 629.4Q594.7 627.9 598.9 629.4M585.8 621.7Q587.5 621.3 589.3 621.7M561.2 616.7Q560.3 619.1 558.2 620.8M576.9 605.7Q574.5 609.1 576.9 612.4M548.7 626.7Q549.8 629.2 551.5 631.5M552.3 623.6Q556.0 622.6 559.7 623.6M592.1 620.3Q594.1 619.7 596.1 620.3M560.4 628.8Q563.1 631.6 565.9 628.8M548.1 617.4Q550.8 619.0 553.6 617.4M562.6 625.5Q565.4 624.8 568.2 625.5M586.7 611.7Q589.6 611.9 592.5 612.4M548.1 607.7Q545.7 611.4 548.1 615.2M565.1 622.0Q566.9 626.2 565.1 630.4M566.9 622.3Q568.5 626.4 566.9 630.5M575.0 617.7Q570.6 618.2 569.4 622.4M574.6 623.1Q574.7 625.7 574.6 628.3M567.8 607.4Q569.5 607.8 571.2 607.4M538.9 628.2Q535.9 633.1 538.9 638.0M540.9 627.5Q545.5 631.6 550.6 628.2M561.6 625.4Q565.6 623.1 569.5 625.4M587.3 612.1Q588.9 613.5 590.5 612.1M709.1 649.1Q708.8 650.9 707.2 651.8M754.9 656.3Q754.0 660.9 754.9 665.4M757.5 642.6Q758.3 644.1 757.5 645.6M712.7 657.1Q716.1 656.3 719.5 657.1M735.7 635.7Q740.0 633.8 744.3 635.7M746.0 653.4Q748.1 655.8 746.0 658.2M712.8 638.2Q712.8 642.4 712.8 646.7M709.4 650.4Q710.2 654.5 709.4 658.6M716.2 640.4Q720.9 640.6 725.5 640.4M715.9 656.8Q719.0 657.8 722.2 656.8M720.7 643.3Q719.4 647.9 720.7 652.6M732.6 635.7Q730.4 639.2 732.6 642.7M752.5 632.8Q756.0 635.4 760.3 636.4M739.9 625.9Q744.1 628.3 748.4 625.9M742.6 652.8Q744.5 655.8 742.6 658.8M713.1 637.1Q716.4 638.0 719.7 637.1M730.1 631.8Q732.0 630.6 733.8 631.8M737.9 628.5Q741.7 624.9 745.4 628.5M755.4 628.8Q755.1 630.8 753.0 631.0M730.2 654.2Q730.7 659.8 726.3 663.2M737.2 646.3Q740.0 649.0 742.8 646.3M716.0 633.0Q718.4 630.9 720.8 633.0M737.2 656.0Q738.3 658.2 737.2 660.4M712.4 640.1Q713.7 642.5 712.4 644.8M720.4 655.3Q723.3 653.0 726.3 655.3M746.2 638.6Q749.4 636.8 752.7 638.6M709.9 650.5Q711.5 653.5 709.9 656.4M729.3 645.1Q726.7 648.6 723.2 651.3M747.2 653.4Q744.6 656.6 747.2 659.7M749.9 629.2Q750.3 631.3 752.5 631.3M758.8 640.8Q756.9 642.8 758.8 644.7M708.7 645.5Q706.3 649.2 708.7 652.9M752.6 637.9Q756.3 639.0 760.1 637.9M741.5 646.7Q741.4 648.2 741.5 649.8M719.8 623.6Q721.5 624.6 723.1 623.6M723.6 642.3Q727.2 645.0 731.7 645.4M758.8 632.7Q755.4 636.4 750.6 634.9M728.1 640.6Q731.0 641.5 733.6 642.8M732.8 638.3Q731.1 640.2 732.8 642.1M724.4 646.2Q727.7 649.7 727.3 654.5M713.6 622.6Q716.7 620.5 719.7 622.6M727.9 644.8Q730.6 644.4 733.4 644.8M687.7 460.6Q689.7 462.9 687.7 465.2M675.7 448.2Q673.9 452.4 675.7 456.7M655.3 462.0Q655.5 464.2 657.5 465.0M683.0 432.3Q687.3 429.3 691.6 432.3M661.2 417.3Q663.6 417.1 664.2 419.4M663.7 464.4Q661.6 467.4 663.7 470.4M654.7 452.3Q655.5 454.2 654.7 456.0M655.2 418.9Q658.2 419.5 661.2 418.9M679.7 427.7Q682.8 431.0 679.7 434.2M669.9 430.2Q671.0 434.5 667.0 436.5M682.6 439.3Q684.3 441.5 686.9 440.9M663.8 429.3Q661.8 431.0 659.2 430.6M689.3 460.3Q684.9 465.3 689.3 470.2M684.7 455.5Q686.7 456.7 688.6 455.5M673.6 417.2Q671.9 421.7 673.6 426.3M687.4 434.2Q686.7 436.3 687.4 438.4M656.9 438.2Q660.6 441.2 664.4 438.2M688.4 433.8Q690.8 437.3 694.8 438.3M680.4 447.5Q680.4 450.4 679.1 453.1M667.4 420.5Q669.3 423.2 670.7 426.2M684.0 425.8Q688.1 428.5 692.2 425.8M685.5 427.2Q684.7 431.4 685.5 435.7M689.4 460.2Q691.5 458.8 693.7 460.2M658.8 443.1Q661.0 443.2 663.2 443.1M658.3 442.2Q660.3 447.1 658.3 452.1M662.9 433.9Q663.0 435.5 662.9 437.0M669.3 446.5Q673.6 445.6 677.8 446.5M661.9 444.5Q662.7 447.5 663.5 450.5M662.1 428.2Q667.0 432.0 671.9 428.2M657.6 458.0Q656.7 459.2 655.7 460.4M658.4 434.1Q659.4 438.8 658.4 443.4M660.1 450.5Q658.1 453.7 654.7 455.0M669.0 423.3Q671.6 425.4 674.1 423.3M666.7 418.4Q666.1 421.3 663.5 422.7M663.1 435.8Q661.4 439.1 663.1 442.5M664.8 418.8Q668.4 420.6 672.1 418.8M678.1 450.4Q680.3 451.2 681.6 453.2M688.1 465.8Q684.4 466.0 683.3 469.5M683.1 416.1Q686.2 413.1 689.2 416.1M670.8 434.8Q675.6 437.5 680.5 434.8M674.7 425.6Q677.0 428.2 674.7 430.7M685.6 413.5Q686.6 415.1 685.6 416.8M665.4 413.6Q664.1 415.5 665.4 417.3M671.1 439.1Q670.7 441.9 671.1 444.7M653.5 433.3Q655.9 433.3 658.3 433.3M672.5 418.5Q671.6 420.3 672.5 422.2M682.6 444.7Q684.3 446.6 682.6 448.5M685.5 448.2Q683.6 450.7 685.5 453.2M662.2 443.6Q663.3 446.2 665.5 448.1M665.3 441.8Q661.5 445.8 663.3 451.1M677.4 435.8Q671.6 438.2 673.7 444.2M676.1 438.3Q677.2 442.2 675.3 445.7M677.7 420.8Q681.6 417.1 685.6 420.8M677.0 455.4Q679.3 456.6 681.6 455.4M679.6 464.9Q683.8 468.7 688.0 464.9M681.8 463.4Q679.7 465.8 681.8 468.2M658.7 436.8Q654.8 441.2 658.7 445.7M653.7 427.3Q656.9 429.5 660.1 427.3M653.0 457.3Q654.4 461.2 653.0 465.0M658.8 420.1Q655.7 421.0 655.7 424.2M684.6 437.4Q688.7 435.0 692.8 437.4M687.8 455.9Q689.6 458.3 687.8 460.6M681.4 454.0Q677.8 457.7 681.4 461.4M657.8 422.8Q661.8 425.6 665.7 422.8M674.0 427.6Q676.4 428.2 678.7 427.6M666.8 421.1Q670.7 418.7 674.6 421.1M664.3 413.3Q662.7 415.4 660.7 417.2M683.2 421.5Q685.0 420.2 686.9 421.5M655.7 452.9Q657.5 451.5 659.4 452.9M669.8 415.8Q674.6 411.3 679.4 415.8M665.6 425.8Q665.3 430.1 665.6 434.3M678.9 419.7Q680.1 422.6 678.9 425.4M657.3 436.1Q658.9 439.3 662.4 439.5M664.2 446.0Q666.0 446.2 667.9 446.0M684.9 426.6Q686.9 428.3 689.5 428.1M676.7 440.1Q675.3 442.3 676.7 444.4M688.7 431.2Q686.2 434.5 687.3 438.5M687.2 448.0Q688.1 450.6 687.2 453.1M683.7 428.3Q680.4 431.4 676.8 434.2M688.7 420.4Q693.4 419.5 698.1 420.4M689.7 414.3Q686.3 418.8 689.7 423.3M685.3 435.6Q683.8 436.6 682.2 435.7M682.6 451.7Q684.4 451.1 686.2 451.7M660.5 432.7Q659.5 436.5 660.5 440.3M666.5 418.7Q665.6 420.4 666.3 422.2M681.1 462.6Q682.7 466.9 679.5 470.1M687.7 444.3Q688.5 447.7 687.7 451.1M690.0 451.8Q690.9 453.4 690.0 455.0M655.0 421.4Q657.7 420.0 660.4 421.4M681.9 436.4Q685.3 438.0 688.6 436.4M659.4 424.0Q660.5 425.9 662.6 425.7M664.2 416.5Q667.6 414.0 671.0 416.5M655.9 430.2Q659.2 433.9 658.6 438.8M669.5 425.3Q667.6 427.5 669.5 429.6M686.3 453.2Q685.3 455.2 686.3 457.2M655.4 429.1Q658.2 429.9 660.9 429.1M656.7 430.7Q659.0 428.5 661.3 430.7M678.6 435.8Q680.5 439.6 678.6 443.3M679.1 428.8Q678.5 432.9 679.1 436.9M683.2 465.2Q686.0 465.7 688.8 465.2M680.8 444.2Q680.6 448.4 677.7 451.4M660.7 454.6Q657.4 458.0 660.7 461.4M670.4 460.1Q669.2 462.8 666.3 463.5M677.6 453.5Q677.4 457.3 679.0 460.8M684.3 428.1Q687.5 431.3 690.7 428.1M705.9 413.4Q708.5 413.8 711.0 413.4M696.9 425.4Q698.8 427.2 700.7 425.4M702.1 425.9Q699.6 428.9 702.1 431.8M701.3 425.7Q700.1 429.7 701.3 433.6M728.8 425.4Q731.1 426.7 733.4 425.4M700.5 418.8Q704.5 422.9 700.5 426.9M726.0 417.6Q726.7 419.9 726.0 422.1M710.3 420.3Q711.0 422.1 710.3 423.9M711.0 426.2Q710.9 430.8 714.8 433.3M712.5 421.1Q711.9 423.7 712.5 426.4M693.9 428.7Q698.5 429.4 703.1 429.7M695.2 424.6Q694.2 427.8 695.2 431.0M697.7 423.7Q700.7 420.9 703.7 423.7M703.7 414.5Q703.7 417.2 704.0 419.9M668.1 487.0Q669.5 488.9 668.1 490.7M669.6 486.2Q667.8 489.3 669.6 492.5M669.3 486.4Q670.2 488.0 669.3 489.6M681.1 491.3Q679.9 493.1 677.7 493.0M688.8 473.8Q689.9 475.7 692.1 476.1M673.1 483.9Q676.0 482.7 679.0 483.9M683.9 487.4Q685.1 490.5 683.9 493.6M681.1 464.7Q679.9 467.9 681.1 471.2M676.9 492.3Q681.7 492.5 686.5 492.3M691.6 465.3Q691.8 467.2 691.6 469.2M682.8 487.6Q685.4 486.7 687.7 488.1M663.4 468.0Q668.4 465.4 673.4 468.0M663.0 482.4Q663.6 486.3 663.0 490.2M695.1 464.1Q698.1 464.1 701.1 464.1M682.5 488.6Q687.0 488.5 691.6 488.6M679.2 468.2Q682.5 468.2 685.8 468.2M694.6 472.1Q696.4 472.2 698.0 473.3M665.4 488.7Q669.3 488.9 671.1 492.3M662.6 473.5Q664.2 476.1 662.6 478.7M665.2 477.8Q665.4 483.1 661.0 485.9M676.3 485.8Q679.3 488.0 683.0 489.0M689.1 468.9Q686.6 471.6 689.1 474.3M666.1 470.1Q665.4 471.9 663.7 473.0M680.2 491.4Q682.9 493.9 686.5 494.5M685.0 481.1Q684.6 485.4 680.3 485.5M673.5 482.2Q675.1 483.1 676.1 484.6M675.7 476.4Q678.5 476.0 681.3 476.4M673.3 467.3Q676.6 466.4 679.8 467.3M670.4 464.4Q667.0 469.0 670.4 473.6M685.6 490.4Q690.7 491.7 692.5 496.7M670.9 484.2Q674.2 488.5 670.9 492.8M668.5 487.4Q667.7 491.7 668.5 496.0M754.3 505.8Q757.4 505.3 760.5 505.8M716.6 506.4Q718.0 509.9 715.1 512.3M740.1 460.5Q738.7 463.4 740.0 466.4M712.0 474.7Q714.2 477.4 712.0 480.1M736.0 514.1Q732.1 517.9 735.5 522.2M722.0 498.8Q723.7 500.3 723.1 502.4M730.5 514.0Q733.6 511.9 736.6 514.0M721.0 499.6Q717.2 504.2 721.0 508.9M739.5 488.6Q742.3 491.5 744.4 495.0M750.5 470.6Q752.7 471.6 754.8 470.6M714.5 512.4Q716.3 515.0 714.5 517.5M723.9 463.1Q728.3 467.3 732.7 463.1M731.7 503.6Q734.6 501.5 737.4 503.6M750.8 523.9Q753.1 528.4 750.4 532.6M714.7 481.5Q718.6 482.9 722.4 481.5M742.6 471.9Q747.5 475.1 752.4 471.9M733.0 480.9Q731.6 483.3 733.0 485.7M739.2 504.6Q737.6 505.5 736.8 507.0M711.6 462.8Q714.3 463.1 714.4 465.9M736.8 515.4Q735.8 517.6 737.0 519.7M722.7 462.9Q727.7 461.9 732.6 462.9M744.2 510.1Q743.7 514.1 740.0 515.5M745.5 522.6Q747.2 526.4 745.5 530.1M735.9 475.0Q737.2 479.2 735.9 483.4M715.1 487.9Q719.9 491.4 724.7 487.9M753.1 493.0Q755.6 493.3 758.1 493.0M707.5 483.5Q710.7 484.4 713.5 486.3M734.4 470.6Q737.4 470.4 739.8 472.1M713.0 498.5Q710.3 502.8 713.0 507.0M748.5 521.8Q747.5 525.1 748.5 528.3M732.6 478.9Q733.0 481.0 732.6 483.1M712.2 484.6Q713.1 488.1 712.2 491.5M744.6 493.9Q742.1 497.9 745.6 501.1M743.5 494.3Q747.8 494.9 752.0 494.3M735.9 469.7Q738.5 469.9 741.2 469.7M710.9 505.2Q712.5 509.5 710.9 513.7M713.1 508.7Q711.9 512.7 713.1 516.6M751.3 489.2Q752.6 493.0 751.3 496.8M731.1 507.7Q732.9 512.0 735.2 515.9M739.5 482.8Q741.1 486.2 739.5 489.7M749.4 511.3Q751.9 512.1 754.5 511.3M727.1 462.6Q732.4 464.3 733.1 469.9M750.8 494.5Q753.2 494.8 753.6 497.2M739.0 501.0Q743.3 497.1 747.6 501.0M706.5 475.2Q708.8 480.0 714.0 479.1M713.3 514.5Q710.7 518.3 706.8 520.7M729.5 477.8Q726.8 482.2 721.9 483.9M733.4 510.1Q729.8 514.9 733.4 519.6M739.5 488.8Q737.4 491.8 733.9 492.8M737.9 505.6Q732.2 507.4 732.0 513.4M713.3 481.6Q712.8 485.6 713.3 489.6M707.3 491.6Q712.1 492.2 716.8 491.6M721.8 476.7Q724.2 479.5 727.7 478.2M733.4 488.4Q733.4 491.0 733.4 493.6M747.6 523.1Q749.3 525.4 747.6 527.6M722.9 468.1Q725.9 470.8 728.9 468.1M716.9 474.2Q718.4 472.7 720.0 474.2M726.5 518.9Q729.6 522.3 729.4 526.9M742.0 504.1Q739.2 508.1 742.0 512.1M725.7 466.2Q725.3 472.2 730.8 474.4M749.1 514.6Q753.4 512.3 757.8 514.6M724.1 499.1Q726.8 501.7 727.8 505.3M723.1 498.3Q723.8 500.1 723.1 502.0M741.2 512.2Q743.2 512.6 745.2 512.2M746.5 464.0Q749.9 467.0 753.3 464.0M711.1 483.9Q713.6 488.9 711.1 493.9M707.3 520.6Q709.3 523.0 707.3 525.4M726.1 530.5Q729.0 529.6 731.8 530.5M691.6 509.8Q693.2 508.9 694.7 509.8M736.0 527.6Q737.9 527.7 739.7 527.6M706.6 499.9Q707.1 504.8 706.6 509.6M705.3 503.9Q702.8 507.2 698.7 508.5M743.3 518.7Q745.9 522.1 749.2 524.7M745.2 505.0Q749.4 508.5 754.2 505.7M693.7 534.9Q694.5 539.3 693.7 543.7M728.4 516.5Q729.8 517.0 731.3 517.3M698.3 517.1Q698.4 521.4 694.5 523.2M690.3 532.7Q693.9 529.5 697.5 532.7M707.1 507.1Q709.0 507.6 710.9 507.1M704.9 506.5Q706.8 505.9 708.6 506.5M710.5 518.8Q712.5 520.3 711.8 522.7M714.7 517.4Q718.1 517.1 721.5 517.4M749.7 500.3Q746.8 504.4 749.7 508.5M695.5 528.8Q694.4 531.7 695.5 534.7M729.6 516.2Q731.6 518.1 730.1 520.4M729.0 539.9Q729.3 542.0 730.6 543.7M738.0 507.4Q738.0 511.3 738.0 515.2M722.1 521.9Q726.4 520.6 730.7 521.9M754.0 498.3Q754.3 500.8 754.3 503.4M752.9 539.0Q756.6 541.1 754.8 545.0M718.1 496.4Q721.4 498.1 724.7 496.4M712.4 511.3Q714.6 511.5 716.8 511.3M707.1 534.0Q706.4 535.5 707.1 537.0M745.0 497.9Q748.7 500.4 752.6 498.2M697.1 534.0Q695.7 536.8 697.1 539.7M713.2 536.9Q711.9 538.1 711.9 539.8M699.2 496.8Q697.2 500.7 694.6 504.3M727.1 533.3Q728.6 537.8 727.1 542.4M712.7 498.4Q717.6 498.6 722.5 498.4M745.7 534.5Q748.9 536.3 752.1 534.5M697.9 495.7Q696.2 496.5 694.6 497.4M705.2 537.8Q707.2 538.6 709.1 537.8M723.7 529.7Q728.6 534.5 733.5 529.7M740.3 541.4Q745.2 538.7 750.1 541.4M711.1 512.1Q709.5 517.0 711.1 522.0M722.5 536.3Q724.7 537.4 726.9 536.3M711.9 515.7Q716.0 514.1 720.1 515.7M745.1 531.9Q746.9 535.0 747.1 538.6M695.9 500.3Q698.9 503.6 696.2 507.1M735.1 496.6Q736.6 497.3 738.1 497.9M730.4 516.0Q729.9 518.9 732.5 520.2M731.1 541.6Q732.6 543.1 733.9 544.7M745.6 505.9Q746.4 508.2 748.3 509.6M727.7 534.5Q723.2 536.1 724.6 540.6M741.5 501.3Q742.6 503.0 744.4 503.8M744.9 503.0Q745.4 505.1 744.9 507.2M703.3 495.1Q705.1 497.5 703.3 499.9M707.1 511.3Q706.2 513.4 707.1 515.4M722.0 495.1Q721.3 497.5 722.0 499.8M744.1 519.2Q743.9 521.2 744.1 523.2M697.6 511.0Q695.1 513.7 693.8 517.2M742.6 521.5Q744.1 526.0 748.8 525.9M748.8 498.8Q752.0 503.0 748.8 507.2M726.6 543.5Q722.5 548.2 726.6 553.0M706.9 523.7Q707.6 527.6 706.9 531.4M717.6 521.5Q719.7 522.1 721.7 521.5M731.4 521.2Q735.9 521.2 740.4 521.2M751.9 505.3Q752.6 507.5 751.9 509.6M747.6 527.8Q748.0 530.2 750.4 530.1M691.2 528.7Q694.7 525.9 698.2 528.7M714.0 541.8Q711.4 544.7 714.0 547.7M715.7 516.2Q719.1 518.0 722.5 516.2M725.0 530.8Q723.1 534.6 725.0 538.3M704.1 523.4Q705.8 526.5 704.1 529.5M736.1 519.5Q735.3 522.6 732.5 524.2M753.0 516.9Q751.4 520.9 753.0 525.0M692.8 519.9Q696.1 520.1 699.3 519.9M710.0 500.3Q713.2 499.9 716.4 500.3M753.1 518.9Q755.9 520.2 755.5 523.2M691.2 523.0Q688.5 527.9 691.2 532.8M710.8 515.6Q714.5 512.9 718.1 515.6M703.4 513.4Q704.8 516.0 705.4 518.9M727.4 543.2Q731.2 541.9 734.9 543.2M692.3 542.9Q695.7 545.6 699.1 542.9M710.0 515.8Q712.0 518.5 712.5 521.8M707.9 539.7Q706.8 542.0 707.9 544.3M725.6 542.4Q725.6 545.5 725.6 548.6M734.9 507.8Q736.6 507.3 738.3 507.8M742.9 518.6Q739.7 523.2 742.9 527.8M749.3 501.3Q753.7 502.0 758.1 501.3M746.1 502.5Q749.3 501.9 752.5 502.5M737.0 531.3Q735.3 533.6 737.0 536.0M752.0 524.7Q753.7 526.1 755.4 524.7M731.9 525.8Q736.6 525.5 741.3 525.8M610.8 681.5Q614.2 684.4 617.6 681.5M639.5 662.1Q637.9 664.9 639.5 667.8M635.7 663.4Q638.1 665.2 640.4 663.4M621.3 663.1Q624.4 661.2 627.5 663.1M615.5 689.5Q617.0 688.2 618.6 689.5M608.8 689.9Q610.9 688.7 612.9 689.9M607.6 662.6Q608.7 664.1 608.8 665.9M630.4 661.0Q633.7 660.9 637.0 661.0M631.4 685.1Q633.2 683.7 635.0 685.1M609.6 661.6Q612.0 663.8 614.5 661.6M635.4 663.7Q631.5 668.0 635.4 672.3M614.3 674.7Q616.5 675.2 618.8 674.7M627.2 685.7Q628.8 685.0 630.3 685.7M615.0 686.0Q616.9 686.2 618.8 686.0M626.7 660.2Q625.3 663.5 624.2 667.0M609.9 666.7Q613.7 665.1 617.4 666.7M630.9 671.4Q633.8 671.8 636.7 671.4M614.1 677.0Q614.4 681.5 614.1 686.0M619.0 678.1Q618.5 681.1 619.0 684.0M606.4 664.5Q608.9 668.4 612.6 671.2M633.9 674.0Q636.6 677.7 633.9 681.4M607.0 686.0Q609.8 685.2 612.7 686.0M614.6 685.1Q619.3 683.3 623.9 685.1M625.9 678.7Q626.5 680.3 625.9 681.9M621.0 680.5Q623.1 681.2 625.1 680.5M625.9 663.1Q628.2 662.2 630.4 663.1M628.0 674.7Q628.2 677.9 628.0 681.1M623.6 668.4Q624.3 671.6 623.6 674.7M616.9 688.8Q618.7 688.8 620.5 689.0M637.5 682.9Q639.4 682.6 641.1 683.2M609.5 678.6Q609.0 680.6 610.7 681.7M626.5 661.3Q624.3 660.9 622.8 662.5M612.5 685.2Q617.5 682.9 622.5 685.2M638.7 672.4Q641.0 675.8 645.1 676.5M606.3 661.9Q602.9 662.8 599.4 662.9M638.0 678.2Q640.6 680.4 643.3 678.2M630.2 686.9Q634.6 689.3 639.1 686.9M608.6 686.1Q605.2 689.5 608.6 692.9M616.9 687.2Q611.5 686.3 609.5 691.4M622.7 669.8Q622.3 673.6 622.7 677.4M637.2 669.2Q637.3 672.6 637.2 676.0M628.4 662.0Q626.5 664.5 628.4 666.9M627.6 663.2Q629.3 665.0 627.6 666.9M629.9 678.6Q627.9 681.1 626.8 684.2M608.5 674.1Q612.3 674.6 616.1 674.1M685.8 681.3Q686.0 684.7 688.1 687.3M697.3 671.5Q699.7 672.2 702.1 671.5M661.1 685.7Q660.0 688.5 657.0 688.5M718.9 679.6Q721.4 678.4 724.0 679.6M678.7 670.8Q677.4 672.3 675.5 672.2M680.5 675.3Q683.6 676.5 686.6 675.3M687.4 674.9Q690.6 674.9 691.1 678.0M651.6 678.7Q653.4 682.2 655.4 685.6M657.3 670.8Q656.4 672.5 657.3 674.3M675.5 668.3Q679.6 672.4 684.9 669.9M654.8 688.5Q656.2 692.3 654.8 696.1M675.9 683.6Q678.7 680.9 681.4 683.6M704.5 679.4Q708.3 677.1 712.1 679.4M700.4 675.0Q705.3 676.6 710.4 675.5M654.3 676.8Q651.6 680.9 654.3 685.0M705.3 688.4Q702.4 692.0 704.1 696.3M689.0 686.0Q688.2 687.8 689.2 689.5M670.3 689.8Q669.6 691.5 670.3 693.2M690.5 665.3Q695.5 665.6 700.4 665.3M694.1 673.2Q693.2 676.3 694.1 679.4M698.3 690.0Q700.6 691.3 702.8 690.0M680.2 661.8Q686.4 659.8 688.9 665.8M695.5 664.4Q695.8 666.8 695.5 669.2M679.3 672.1Q683.0 673.3 683.5 677.2M659.3 676.5Q662.0 675.6 664.7 676.5M707.9 665.4Q712.7 663.7 717.5 665.4M687.3 668.4Q689.6 671.8 689.4 675.8M665.7 677.5Q666.1 680.3 665.7 683.0M670.7 674.5Q668.5 676.5 668.8 679.6M666.4 685.3Q669.4 689.5 666.4 693.8M697.7 677.4Q695.8 678.7 693.8 680.0M710.7 683.0Q710.8 686.4 710.7 689.8M715.3 663.5Q717.1 664.8 718.8 663.5M676.1 671.2Q679.4 673.6 682.7 671.2M654.5 686.5Q652.4 688.8 654.5 691.2M708.7 660.7Q708.2 662.7 708.7 664.6M693.4 673.1Q696.1 674.4 698.7 675.7M664.2 668.4Q662.2 671.4 664.2 674.4M695.6 661.3Q697.4 661.4 699.1 661.3M672.8 662.4Q674.5 665.7 672.3 668.8M663.0 669.2Q668.3 669.7 669.4 674.9M685.8 689.4Q687.4 692.4 688.7 695.6M715.8 671.7Q716.3 675.2 717.5 678.4M677.0 681.3Q681.6 683.8 686.2 681.3M696.0 682.9Q701.2 680.9 705.4 684.5M652.3 682.1Q654.4 681.6 656.5 682.1M708.3 666.7Q712.4 669.8 717.5 670.1M686.5 660.4Q691.4 657.6 696.3 660.4M716.2 662.5Q714.5 663.4 713.2 664.8M665.3 681.0Q665.6 683.8 663.0 684.5M679.9 677.3Q677.4 680.4 679.9 683.5M707.8 682.9Q711.4 686.3 715.0 682.9M716.5 670.1Q711.9 672.4 711.8 677.6M681.8 671.9Q678.9 675.2 677.8 679.4M665.2 689.3Q662.9 691.0 663.6 693.8M656.2 686.5Q657.5 689.2 660.3 688.3M647.4 721.0Q650.1 721.2 652.9 721.0M627.7 736.5Q631.6 737.4 635.1 739.2M637.6 723.7Q641.3 725.7 640.1 729.6M632.4 755.2Q636.3 757.4 640.0 760.1M612.1 725.8Q614.6 727.8 617.1 729.6M643.6 738.0Q646.1 740.5 643.6 743.1M624.0 755.1Q622.7 758.2 624.5 761.1M646.3 728.6Q643.8 731.3 646.3 734.0M612.4 722.6Q614.6 722.6 616.8 722.6M602.5 730.9Q604.6 734.2 602.5 737.4M659.9 742.3Q664.0 744.0 668.2 745.4M638.9 723.5Q638.6 727.9 642.7 729.2M610.9 751.1Q614.2 752.5 617.6 751.1M648.6 722.5Q647.1 725.5 648.6 728.4M630.7 755.9Q632.2 756.2 633.8 755.9M622.5 739.0Q625.9 738.8 629.2 739.0M648.0 720.4Q646.2 724.2 642.8 726.7M657.1 721.5Q662.0 723.4 666.8 721.5M603.4 727.7Q605.8 727.1 608.2 727.7M605.1 738.8Q603.5 741.6 605.1 744.3M630.7 722.9Q633.9 723.3 637.1 722.9M631.6 726.8Q634.2 725.9 636.9 726.8M601.5 722.7Q603.8 725.5 601.5 728.3M650.8 740.3Q651.3 745.2 656.3 745.4M635.6 758.2Q638.0 756.5 640.4 758.2M648.9 730.7Q650.7 730.6 652.5 730.7M645.0 722.9Q646.2 726.2 649.5 727.7M629.3 726.5Q625.9 728.5 627.0 732.3M644.1 730.8Q647.5 731.7 651.0 730.9M606.8 740.8Q606.7 744.0 606.8 747.2M633.3 737.8Q635.4 737.0 637.5 737.8M642.7 754.4Q645.0 759.0 642.7 763.6M648.1 747.5Q647.7 750.6 648.1 753.7M644.1 746.8Q643.9 749.7 644.1 752.6M657.1 739.8Q656.4 741.9 657.1 743.9M630.6 742.9Q632.2 746.8 630.6 750.6M626.2 734.0Q625.1 735.7 626.2 737.4M602.0 752.0Q601.8 756.2 602.0 760.5M626.1 741.2Q624.7 745.0 626.1 748.9M606.6 720.2Q609.0 720.5 611.5 720.2M638.5 751.5Q633.3 752.7 633.4 758.0M643.6 721.7Q644.6 723.5 643.6 725.3M651.8 752.2Q654.9 750.6 657.9 752.2M628.5 720.6Q630.2 719.8 631.8 720.6M645.0 733.8Q641.0 735.0 637.6 737.4M603.1 741.4Q600.1 744.7 603.1 748.0M618.6 736.9Q619.2 740.1 616.2 741.5M641.2 757.0Q644.8 755.5 648.3 757.0M622.1 749.0Q624.9 748.9 627.6 749.0M616.1 744.3Q614.7 747.4 616.9 750.0M641.1 737.8Q639.3 740.4 636.3 739.3M651.0 756.8Q650.1 759.3 652.6 760.3M659.6 732.1Q659.6 734.6 662.0 734.6M636.0 753.6Q639.5 753.7 643.0 753.6M655.4 725.5Q653.2 730.4 648.1 728.6M648.3 753.7Q651.4 757.5 648.3 761.3M602.8 758.2Q601.1 760.8 598.4 759.4M605.7 745.9Q604.7 747.6 603.7 749.3M624.0 758.6Q621.1 757.6 618.3 758.8M637.3 722.4Q635.5 727.4 630.2 728.3M635.8 749.7Q639.2 749.8 642.6 749.7M612.8 720.2Q610.7 723.6 606.7 722.8M631.7 748.2Q634.9 752.5 639.5 749.7M627.4 720.3Q628.6 721.8 627.4 723.3M603.0 699.4Q603.2 702.1 603.0 704.9M602.3 699.3Q604.5 702.7 602.3 706.1M621.5 718.8Q620.4 721.6 621.5 724.4M613.7 708.0Q615.4 710.5 616.2 713.5M609.5 705.1Q612.3 702.4 615.1 705.1M600.0 700.2Q602.2 701.1 604.3 700.2M622.9 696.8Q625.4 699.4 622.9 702.0M631.9 712.6Q634.2 717.2 631.9 721.8M610.3 690.0Q614.9 685.9 619.5 690.0M604.2 702.7Q608.0 706.1 613.0 707.0M628.5 696.8Q632.8 694.1 637.0 696.8M602.1 691.2Q605.5 693.6 608.9 691.2M591.9 719.7Q593.7 718.5 595.5 719.7M597.0 701.4Q601.3 701.8 605.7 701.4M629.9 700.1Q631.9 699.4 633.1 701.1M626.8 719.1Q624.3 720.8 623.7 723.8M597.7 711.8Q598.9 713.4 597.7 715.0M616.9 717.8Q616.5 719.4 616.9 721.0M624.7 690.3Q621.4 694.7 624.7 699.1M596.5 702.5Q593.8 707.4 596.5 712.4M614.5 691.0Q612.4 694.4 614.5 697.8M591.5 715.7Q595.0 718.1 598.2 721.1M632.3 693.8Q632.6 697.1 632.3 700.4M635.9 711.1Q639.1 708.1 642.3 711.1M599.1 715.4Q601.3 716.8 603.7 717.6M627.6 694.0Q629.9 699.8 625.1 703.7M636.6 698.0Q634.8 702.3 630.3 703.5M614.3 713.0Q618.1 711.5 621.8 713.0M592.8 718.8Q593.2 721.4 592.8 724.0M623.4 716.0Q625.2 716.5 626.9 716.0M627.8 706.3Q631.1 704.5 634.4 706.3M610.9 711.2Q611.6 716.0 610.9 720.8M1082.6 660.0Q1085.6 662.6 1088.5 660.0M1044.9 734.4Q1048.4 731.1 1052.0 734.4M1038.8 710.7Q1037.6 713.7 1038.8 716.6M1093.8 719.6Q1097.2 720.8 1100.8 721.3M1106.8 718.3Q1105.2 720.2 1106.8 722.1M1050.2 661.8Q1050.0 665.0 1050.2 668.1M1060.3 702.3Q1062.1 701.9 1063.9 702.3M1070.5 716.5Q1074.3 720.9 1070.5 725.2M1088.5 678.3Q1090.8 677.4 1093.1 678.3M1104.3 668.9Q1108.9 673.0 1113.5 668.9M1105.9 706.1Q1102.9 710.5 1105.9 715.0M1032.3 674.2Q1034.9 677.9 1032.3 681.7M1036.7 699.2Q1040.3 702.7 1043.9 699.2M1057.9 676.2Q1057.5 679.0 1060.1 680.0M1105.7 731.2Q1109.6 732.5 1111.2 736.2M1043.9 727.5Q1040.9 727.4 1038.8 729.6M1096.4 728.4Q1100.9 728.9 1105.4 728.4M1054.9 722.1Q1055.7 723.8 1054.9 725.4M1088.8 671.1Q1084.7 675.6 1088.8 680.2M1106.5 699.5Q1107.6 702.9 1106.5 706.4M1090.4 691.0Q1093.1 689.0 1095.8 691.0M1066.7 664.7Q1065.8 666.8 1066.7 668.9M1098.3 687.1Q1103.1 688.6 1104.3 693.5M1081.0 729.4Q1080.9 731.4 1079.0 731.8M1090.7 685.0Q1092.0 688.9 1090.7 692.9M1109.5 685.5Q1109.6 690.0 1109.5 694.4M1070.0 723.3Q1071.9 724.0 1073.8 723.3M1039.3 707.7Q1036.8 710.3 1034.2 712.8M1038.4 716.5Q1041.7 716.1 1045.0 716.5M1051.8 687.5Q1052.5 689.7 1051.8 691.8M1104.3 661.4Q1106.2 663.7 1104.3 666.1M1083.9 726.5Q1088.8 729.1 1093.7 726.5M1063.7 673.6Q1064.0 676.7 1065.2 679.5M1037.5 670.1Q1041.3 674.1 1037.5 678.1M1042.2 693.6Q1041.2 697.5 1042.2 701.5M1077.6 698.9Q1073.9 703.1 1077.6 707.3M1105.7 660.4Q1109.3 664.0 1114.4 663.4M1064.5 722.9Q1060.3 720.1 1056.9 723.9M1069.5 734.9Q1065.5 739.6 1069.5 744.4M1035.1 729.2Q1031.9 732.9 1030.5 737.6M1089.7 704.7Q1092.1 704.3 1094.1 705.8M1067.5 660.7Q1066.1 662.6 1067.5 664.5M1079.5 716.1Q1077.6 720.5 1079.5 724.8M1048.4 685.2Q1048.4 687.0 1049.6 688.4M1046.1 673.1Q1043.7 675.5 1046.1 678.0M1087.5 684.1Q1091.7 684.0 1095.8 684.1M1040.4 733.4Q1044.2 733.6 1048.0 733.4M1053.5 664.5Q1053.5 669.3 1048.9 670.3M1100.9 693.6Q1102.9 693.8 1104.9 693.6M1071.8 677.1Q1075.2 677.0 1078.5 677.1M1078.7 719.0Q1078.5 721.9 1078.7 724.8M1097.2 708.1Q1100.9 712.9 1097.2 717.7M1095.8 684.0Q1090.6 684.9 1088.3 689.7M1061.3 699.3Q1065.1 701.9 1069.6 700.8M1032.6 724.5Q1033.5 728.0 1032.6 731.5M1084.5 727.8Q1085.2 730.6 1084.5 733.3M1091.6 716.4Q1093.6 719.3 1091.6 722.2M1108.3 697.7Q1112.3 695.8 1116.4 697.7M1080.9 721.3Q1081.9 723.9 1080.9 726.4M1035.5 711.6Q1040.3 711.5 1045.1 711.6M1051.7 702.4Q1050.7 706.3 1051.7 710.2M1036.7 709.3Q1037.6 712.4 1036.7 715.6M1098.0 677.2Q1101.8 676.8 1105.6 677.2M1066.4 697.3Q1069.5 698.0 1070.6 701.0M1056.5 682.0Q1057.7 684.9 1056.5 687.7M1076.2 688.0Q1081.1 686.7 1085.9 688.0M1060.3 697.7Q1055.8 701.1 1057.9 706.3M1035.7 662.0Q1037.6 660.6 1039.5 662.0M1048.5 694.7Q1052.5 694.1 1056.5 694.7M1081.5 669.9Q1084.1 673.6 1081.5 677.2M1043.3 727.6Q1047.2 729.5 1051.2 727.6M1053.6 668.1Q1056.1 670.6 1053.6 673.2M1088.6 734.9Q1090.7 738.5 1088.6 742.2M1094.7 689.5Q1098.5 691.5 1101.6 694.5M1065.4 683.3Q1067.6 687.3 1065.4 691.4M1037.6 679.7Q1035.6 683.8 1037.6 687.8M1086.4 722.0Q1081.1 718.4 1077.0 723.4M1044.4 685.7Q1047.0 688.2 1049.6 685.7M1054.6 729.9Q1056.2 730.4 1057.7 729.9M1083.8 696.6Q1082.3 697.6 1080.7 698.5M1075.0 720.3Q1073.8 723.5 1075.0 726.8M1101.5 695.9Q1103.6 699.0 1107.1 700.2M1060.2 727.4Q1055.9 732.2 1060.2 737.0M1098.7 727.0Q1095.7 730.5 1098.7 734.0M1035.1 726.8Q1031.6 727.5 1028.1 726.9M1033.5 693.6Q1034.9 698.0 1039.5 697.9M1154.9 779.1Q1153.0 782.4 1154.9 785.6M1162.4 792.9Q1163.0 797.0 1167.1 797.2M1106.0 815.1Q1104.3 817.6 1104.3 820.5M1119.4 803.9Q1119.0 806.1 1119.4 808.3M1157.0 771.8Q1159.3 771.9 1161.6 771.8M1148.2 819.0Q1149.2 823.6 1148.2 828.2M1155.4 819.1Q1153.1 821.8 1155.4 824.6M1103.8 778.3Q1107.7 780.5 1111.5 778.3M1140.4 806.7Q1138.3 809.3 1140.4 811.8M1160.9 814.7Q1160.9 816.6 1160.5 818.5M1147.6 777.0Q1148.9 778.1 1148.9 779.8M1094.3 768.4Q1090.8 772.4 1094.3 776.4M1107.1 806.8Q1109.3 807.1 1111.5 806.8M1142.2 809.6Q1145.6 809.7 1149.0 809.6M1127.8 802.3Q1127.2 805.0 1127.8 807.7M1090.9 805.5Q1093.8 805.4 1096.8 805.5M1109.3 777.7Q1110.1 779.6 1109.3 781.4M1137.6 826.1Q1139.4 828.2 1137.6 830.3M1118.5 816.2Q1118.0 819.5 1118.5 822.9M1155.1 773.7Q1156.8 772.9 1158.5 773.7M1104.0 771.4Q1106.9 773.5 1109.8 771.4M1169.0 767.2Q1168.2 772.0 1169.0 776.8M1136.0 807.6Q1133.4 810.9 1136.0 814.1M1140.7 799.8Q1138.5 802.5 1140.7 805.2M1097.5 824.5Q1101.5 822.8 1105.5 824.5M1142.0 815.3Q1143.9 814.3 1145.8 815.3M1147.1 819.8Q1144.1 823.0 1147.1 826.2M1166.2 826.3Q1164.1 828.3 1161.3 827.4M1131.4 826.8Q1133.2 827.8 1135.1 826.8M1152.6 799.1Q1155.5 801.1 1158.4 803.0M1162.1 811.9Q1163.9 816.0 1162.1 820.1M1156.3 828.1Q1152.3 832.9 1156.3 837.7M1175.3 822.1Q1173.3 823.3 1174.3 825.4M1157.6 794.6Q1162.9 794.5 1167.0 797.8M1138.3 803.1Q1137.0 806.9 1133.1 806.5M1149.1 794.1Q1150.8 793.2 1152.5 794.1M1107.0 817.9Q1108.3 819.4 1110.4 819.3M1156.6 805.5Q1152.6 810.2 1156.6 814.9M1151.8 789.9Q1155.9 793.8 1160.1 789.9M1118.4 787.1Q1119.3 790.4 1118.4 793.7M1164.0 765.3Q1161.2 769.8 1164.0 774.2M1100.4 798.5Q1105.4 794.9 1110.3 798.5M1165.3 809.0Q1160.3 807.1 1155.6 809.5M1171.6 823.3Q1172.6 827.7 1173.4 832.1M1101.9 768.3Q1104.2 768.7 1104.5 770.9M1173.6 785.1Q1171.1 787.6 1168.2 785.5M1136.6 813.3Q1139.1 813.0 1141.6 813.3M1177.6 782.6Q1179.2 783.2 1180.9 782.6M1102.0 768.5Q1104.8 771.2 1107.6 768.5M1140.2 826.3Q1145.4 829.4 1143.8 835.1M1130.3 824.2Q1134.8 821.4 1139.2 824.2M1098.6 769.4Q1099.1 772.8 1098.6 776.2M1179.6 812.7Q1177.1 815.7 1179.6 818.7M1140.1 787.5Q1143.8 786.6 1147.2 788.5M1093.5 807.3Q1097.1 812.1 1093.5 817.0M1175.1 808.3Q1177.5 808.0 1178.3 810.2M1171.0 805.3Q1168.4 808.2 1171.0 811.2M1117.3 823.0Q1114.3 827.0 1117.3 831.1M1157.4 800.5Q1158.9 801.3 1160.0 802.6M1103.5 828.1Q1102.1 830.1 1103.5 832.2M1157.3 794.0Q1153.8 791.6 1150.5 794.3M1140.8 814.5Q1143.3 818.6 1140.8 822.6M1157.8 809.6Q1155.6 809.6 1153.8 810.8M1178.4 817.1Q1177.2 820.2 1178.4 823.4M1097.5 789.2Q1101.5 790.5 1105.5 789.2M1175.7 800.7Q1179.1 798.8 1182.6 800.7M1174.2 772.0Q1177.9 773.9 1181.6 772.0M1136.7 790.4Q1133.9 794.6 1136.7 798.7M1145.6 780.8Q1148.3 781.3 1151.0 780.8M1137.3 823.6Q1131.7 821.4 1127.6 825.8M1131.0 784.0Q1134.0 786.4 1137.1 784.0M1125.8 785.9Q1127.3 790.2 1125.8 794.5M1136.9 813.9Q1133.8 815.0 1131.1 816.9M1093.9 773.7Q1097.8 774.6 1101.6 773.7M1158.3 782.9Q1159.9 785.1 1158.3 787.2M1120.2 789.0Q1119.1 794.1 1113.9 794.1M1172.7 816.7Q1174.0 819.5 1177.0 818.8M1153.6 788.9Q1157.2 791.6 1160.7 788.9M1128.3 792.4Q1131.9 794.2 1135.4 792.4M1171.9 809.3Q1173.9 808.3 1176.0 809.3M1152.1 817.4Q1151.2 819.9 1152.1 822.3M1167.2 770.6Q1166.4 774.7 1163.7 778.0M1131.2 803.2Q1135.6 800.7 1139.9 803.2M1136.9 774.4Q1139.0 775.7 1141.1 774.4M1165.4 796.6Q1162.3 799.1 1161.5 803.0M1097.7 786.4Q1098.8 788.0 1097.7 789.6M1143.6 789.5Q1147.5 793.1 1151.4 789.5M1176.9 790.9Q1174.2 795.9 1176.9 800.8M1177.0 800.0Q1178.1 802.4 1180.6 803.6M1143.4 791.5Q1144.5 794.1 1145.0 796.9M1098.9 818.8Q1095.8 822.3 1098.9 825.8M1107.4 817.9Q1110.3 816.3 1113.2 817.9M1109.4 828.9Q1111.4 830.4 1113.5 828.9M1157.5 781.7Q1160.1 784.0 1159.0 787.3M1148.4 793.4Q1146.4 797.4 1148.4 801.4M1135.4 768.6Q1138.1 770.5 1140.9 768.6M1132.2 767.3Q1134.1 765.7 1136.0 767.3M1171.6 771.2Q1169.4 774.6 1171.6 778.1M1108.2 813.5Q1112.5 816.7 1116.8 813.5M1143.9 814.0Q1144.3 817.1 1146.9 818.9M1111.4 784.8Q1107.9 786.0 1108.5 789.7M1132.0 816.2Q1132.1 818.1 1132.0 820.0M1096.4 797.0Q1095.1 800.0 1096.4 802.9M1172.2 791.9Q1171.6 793.6 1172.2 795.4M1129.4 793.8Q1133.9 796.0 1138.4 793.8M1131.4 822.3Q1135.2 827.1 1130.5 830.9M1126.1 799.7Q1127.8 798.3 1129.5 799.7M1169.9 798.7Q1172.6 802.8 1169.9 806.9M1150.0 805.7Q1151.8 807.3 1153.6 805.7M1090.9 765.3Q1094.2 769.4 1090.9 773.5M1141.7 805.6Q1142.3 808.0 1141.7 810.4M1156.1 771.5Q1158.5 773.0 1161.0 771.5M1129.1 790.4Q1133.1 788.1 1136.5 791.3M1154.5 778.7Q1158.3 778.9 1162.2 778.7M1121.1 800.9Q1121.5 804.0 1123.8 806.0M1179.9 786.8Q1181.9 789.3 1182.5 792.5M1151.2 776.5Q1151.1 779.9 1151.2 783.3M1104.9 789.5Q1107.3 789.0 1109.1 790.7M1110.0 790.7Q1111.8 791.8 1113.8 791.8M1148.4 784.8Q1149.4 788.9 1148.4 793.1M1135.4 824.1Q1137.3 823.7 1139.3 824.1M1176.0 823.9Q1178.3 827.3 1177.5 831.4M1123.2 778.4Q1121.5 781.1 1123.2 783.8M1091.9 791.0Q1092.9 793.4 1091.9 795.8M1150.7 791.2Q1149.7 792.8 1150.7 794.3M1132.2 793.7Q1133.8 793.6 1135.4 793.7M1068.2 814.7Q1072.5 813.3 1076.0 816.2M1058.1 819.2Q1055.7 824.1 1058.1 829.1M1039.2 807.0Q1041.2 811.4 1039.2 815.8M1067.0 824.4Q1071.6 820.9 1075.6 825.1M1041.7 828.1Q1045.0 828.3 1048.3 828.1M1031.7 814.9Q1035.7 814.4 1036.9 818.4M1042.1 800.9Q1043.6 803.0 1042.1 805.1M1045.5 820.5Q1048.9 822.9 1052.2 820.5M1016.3 826.4Q1018.3 826.9 1018.3 829.0M1087.6 822.4Q1091.2 825.3 1095.3 827.4M1015.0 802.8Q1016.8 805.1 1015.0 807.4M1009.7 824.6Q1008.5 829.6 1013.1 832.0M1013.1 803.7Q1015.8 807.3 1013.1 810.8M1063.0 820.8Q1067.2 817.1 1071.3 820.8M1052.5 802.4Q1056.5 805.0 1060.5 802.4M1059.0 824.8Q1062.3 824.5 1065.5 824.8M1068.1 822.5Q1064.8 826.4 1068.1 830.3M1033.9 804.2Q1029.2 809.0 1033.9 813.9M1039.3 804.7Q1036.4 807.9 1039.3 811.1M1025.8 813.0Q1022.8 817.7 1025.8 822.3M1021.1 821.7Q1018.7 824.2 1021.1 826.7M1029.0 820.7Q1031.7 823.5 1029.0 826.3M1039.6 822.2Q1043.0 823.5 1046.4 822.2M1023.5 812.0Q1024.1 813.8 1023.5 815.5M1016.7 816.2Q1021.3 817.1 1025.9 816.2M1024.0 804.7Q1027.3 803.3 1030.5 804.7M1040.4 829.4Q1038.8 831.8 1039.7 834.5M1012.0 810.7Q1010.8 813.4 1012.0 816.1M1051.6 820.9Q1051.9 823.8 1051.6 826.6M1063.7 813.8Q1066.8 815.0 1069.9 813.8M1006.0 803.8Q1005.9 807.8 1006.0 811.8M1087.0 825.8Q1087.8 828.7 1087.0 831.6M1019.5 818.8Q1019.4 822.1 1019.5 825.4M1066.8 814.8Q1066.6 818.5 1068.5 821.7M1047.1 821.8Q1050.9 819.9 1054.8 821.8M1064.2 808.5Q1067.8 805.0 1071.4 808.5M1021.9 818.0Q1024.5 819.2 1027.0 818.0M1016.0 802.1Q1017.9 804.4 1016.0 806.7M1026.5 822.6Q1025.7 826.5 1026.5 830.4M1058.3 807.1Q1061.6 809.0 1065.2 810.3M1083.0 820.1Q1080.3 820.6 1080.0 823.4M1009.4 826.1Q1004.9 827.6 1006.0 832.1M1081.9 813.0Q1081.9 817.8 1081.9 822.5M1047.8 805.4Q1050.9 806.8 1053.9 805.4M1001.7 818.4Q1002.3 821.3 1001.7 824.2M1043.4 804.3Q1041.7 806.1 1043.4 808.0M1038.5 812.0Q1040.4 813.9 1042.9 813.0M1073.6 827.4Q1075.9 827.0 1078.2 827.4M856.0 811.8Q858.2 812.5 860.5 812.2M838.0 788.4Q842.2 790.6 846.4 788.4M839.0 807.2Q841.1 808.0 843.0 809.1M816.6 782.6Q821.1 784.9 825.6 782.6M838.8 789.2Q843.4 786.8 847.9 789.2M861.4 808.0Q862.6 809.8 864.7 810.2M860.7 805.3Q859.9 808.3 860.7 811.4M826.9 796.7Q827.3 798.7 825.5 799.8M838.3 830.0Q840.8 830.1 843.4 830.0M855.1 786.2Q857.0 789.2 855.1 792.2M858.2 832.3Q860.5 834.6 863.7 834.7M853.1 785.0Q855.0 788.8 853.1 792.7M854.8 835.0Q857.5 837.5 860.3 835.0M867.5 782.4Q872.2 780.1 874.9 784.7M821.5 804.9Q819.6 806.6 820.9 808.8M831.0 799.4Q835.3 802.6 839.6 799.4M866.1 815.5Q863.7 819.9 866.1 824.3M848.2 786.6Q849.2 791.2 850.5 795.8M867.0 802.3Q867.6 803.8 867.7 805.4M859.5 810.3Q856.5 812.3 857.4 815.9M846.1 788.1Q849.5 790.7 852.8 788.1M837.7 805.1Q837.2 807.5 837.7 809.8M865.8 792.1Q865.3 793.7 865.8 795.4M847.5 836.5Q846.4 839.1 846.1 841.8M830.6 834.7Q833.0 834.4 835.4 834.7M865.1 780.9Q869.0 780.8 872.2 783.1M845.3 819.3Q844.2 820.8 845.3 822.3M819.8 793.4Q817.7 796.4 819.8 799.4M840.8 834.2Q838.9 833.3 837.8 835.1M854.7 834.8Q857.4 833.6 860.2 834.8M857.4 835.1Q858.9 836.9 858.9 839.3M869.6 800.4Q868.9 803.4 871.5 804.9M829.4 833.8Q830.9 838.1 829.4 842.4M844.6 815.9Q847.7 814.6 850.8 815.9M866.5 806.4Q864.2 808.3 861.2 808.0M894.8 773.5Q894.0 775.3 892.6 776.5M902.6 796.5Q907.1 797.5 911.6 796.5M901.1 767.3Q900.3 770.3 901.1 773.2M888.9 768.6Q893.3 772.5 897.8 768.6M904.0 774.7Q907.4 772.5 910.8 774.7M877.9 778.0Q879.1 781.4 877.9 784.9M904.0 791.7Q907.9 792.5 911.9 791.7M899.4 773.1Q895.9 774.2 892.2 774.2M898.1 772.7Q900.8 772.1 903.6 772.7M895.1 774.1Q897.9 772.8 899.5 775.5M881.5 771.1Q881.4 772.8 881.5 774.6M889.2 776.0Q885.8 777.0 883.5 779.8M891.2 763.8Q895.2 762.1 899.1 763.8M871.4 776.6Q874.8 777.5 878.0 779.1M891.8 777.2Q896.1 780.5 900.4 777.2M897.1 765.6Q899.8 768.4 897.1 771.3M904.5 764.8Q906.9 766.4 909.3 764.8M880.7 772.7Q882.1 776.6 880.7 780.6M873.0 768.6Q874.8 769.0 875.0 770.9M875.6 770.0Q876.1 772.7 875.6 775.4M872.5 762.2Q874.8 763.6 877.0 762.2M890.7 784.4Q893.1 785.1 895.7 784.7M895.8 787.1Q898.5 789.0 898.7 792.4M892.3 782.1Q892.3 783.9 892.3 785.6M887.2 786.5Q888.2 790.1 887.2 793.7M892.8 792.9Q894.3 795.2 892.8 797.5M884.6 777.1Q884.2 780.1 884.6 783.1M873.1 799.8Q877.3 796.0 881.6 799.8M876.0 761.5Q879.2 762.2 882.5 761.5M871.6 762.1Q868.3 762.5 865.2 763.7M1187.9 776.8Q1186.6 780.0 1184.2 782.4M1163.4 774.7Q1165.5 778.7 1163.4 782.6M1170.5 770.8Q1170.4 772.8 1171.7 774.2M1163.5 775.0Q1166.3 772.4 1169.2 775.0M1166.6 778.1Q1167.0 780.9 1169.9 780.9M1188.7 795.1Q1193.3 792.1 1197.9 795.1M1169.4 789.6Q1173.1 792.3 1176.7 789.6M1186.7 775.5Q1189.8 772.4 1193.0 775.5M1164.9 790.2Q1165.9 794.4 1164.9 798.6M1180.3 776.3Q1177.3 774.4 1174.9 777.0M1179.6 788.1Q1176.8 792.8 1179.6 797.5M1171.4 777.6Q1169.2 781.5 1171.4 785.4M1162.8 787.7Q1162.8 790.3 1162.8 792.8M1189.8 789.0Q1192.9 788.2 1195.9 789.0M1198.7 769.6Q1203.3 767.2 1207.9 769.6M1195.0 792.4Q1199.7 789.7 1204.5 792.4M1194.3 768.9Q1192.6 768.7 1190.9 769.2M1160.4 773.5Q1162.3 777.6 1160.4 781.7M1167.4 796.8Q1166.2 799.1 1167.4 801.4M1177.4 791.9Q1181.8 796.0 1186.2 791.9M1161.6 798.0Q1158.4 799.0 1156.9 801.9M1194.3 796.8Q1198.4 795.8 1202.6 796.8M1170.9 793.3Q1171.3 797.7 1175.3 799.4M1191.9 783.6Q1190.0 785.5 1191.9 787.5M1187.8 781.2Q1190.4 784.8 1187.8 788.4M1189.8 783.1Q1190.9 784.5 1192.1 785.9M1175.8 789.7Q1172.4 792.0 1168.4 791.0M1185.2 796.4Q1189.9 795.4 1194.6 796.4M1162.1 782.3Q1166.4 784.8 1168.1 789.4M1194.8 778.1Q1196.6 779.1 1198.6 779.8M1191.2 781.4Q1193.4 780.7 1195.6 781.4M1186.0 770.3Q1185.3 772.5 1186.0 774.7M1200.0 787.2Q1199.1 791.7 1200.0 796.3M1175.7 778.5Q1178.4 778.7 1179.3 781.2M1169.3 786.2Q1170.2 790.1 1169.3 794.0M1176.1 799.0Q1178.4 803.0 1176.1 807.1M1186.9 781.2Q1188.7 783.4 1186.9 785.7M1060.8 885.1Q1063.3 885.3 1065.4 886.4M1049.9 872.4Q1050.5 875.0 1048.2 876.5M1088.4 897.4Q1087.9 900.2 1087.8 902.9M1068.5 898.7Q1068.1 901.8 1068.5 904.9M1032.6 884.1Q1034.3 886.1 1036.9 886.7M1058.4 899.8Q1061.6 898.0 1064.8 899.8M1071.8 898.9Q1072.8 902.3 1071.8 905.7M1040.8 893.8Q1044.1 896.9 1046.6 900.7M1025.6 886.1Q1022.5 889.8 1025.6 893.5M1083.7 877.9Q1085.6 879.0 1087.5 877.9M1060.9 881.8Q1063.5 883.7 1066.0 881.8M1058.5 883.5Q1063.4 880.0 1068.3 883.5M1032.9 872.7Q1034.2 876.0 1032.9 879.3M1042.7 875.7Q1048.3 878.4 1046.1 884.1M1085.0 888.3Q1081.4 893.0 1084.4 898.0M1046.4 894.9Q1045.4 898.7 1046.4 902.4M1034.4 890.3Q1038.7 894.4 1043.1 890.3M1047.3 897.2Q1048.8 896.1 1050.3 897.2M1089.3 889.9Q1092.1 894.9 1089.3 899.8M1040.9 893.1Q1042.7 896.5 1040.9 899.8M1087.0 874.1Q1084.7 876.0 1085.3 878.9M1050.0 890.0Q1049.3 891.6 1050.0 893.2M1052.0 899.5Q1054.9 902.7 1052.0 906.0M1030.6 872.4Q1031.0 875.1 1029.3 877.2M1078.1 879.7Q1076.7 882.3 1079.1 884.0M1077.2 896.0Q1079.4 897.9 1081.1 900.2M1042.2 889.2Q1046.4 888.9 1050.6 889.2M1060.7 880.5Q1063.2 880.6 1065.7 880.5M1050.2 873.8Q1053.2 873.7 1056.3 873.8M1045.2 883.4Q1046.7 882.2 1048.2 883.4M1050.8 890.1Q1052.5 889.6 1054.1 890.1M1077.5 888.2Q1078.6 892.2 1082.7 891.3M1045.6 891.2Q1049.2 890.5 1052.8 891.2M1058.1 871.2Q1063.1 869.3 1066.0 873.9M1047.7 890.2Q1045.7 890.4 1044.0 891.4M1061.7 896.2Q1063.4 895.8 1065.1 896.2M1061.1 890.4Q1064.8 893.5 1068.6 890.4M1071.9 882.9Q1074.7 882.7 1077.5 882.9M1039.7 877.6Q1042.4 879.6 1045.1 877.6M1026.6 874.8Q1030.1 879.5 1026.6 884.2M1053.2 877.4Q1055.5 875.7 1057.8 877.4M1080.3 891.5Q1081.4 893.7 1081.4 896.1M1038.9 885.9Q1043.3 887.1 1045.0 891.3M1056.4 899.5Q1061.5 895.1 1066.3 899.8M1081.4 887.5Q1084.9 890.8 1088.5 887.5M1048.9 896.9Q1052.8 895.2 1056.7 896.9M1088.6 874.0Q1084.1 878.4 1088.2 883.3M1044.0 886.2Q1043.7 891.1 1044.0 896.0M1083.8 874.0Q1087.9 872.7 1091.9 874.0M1055.1 894.4Q1057.2 896.1 1057.0 898.8M1066.8 871.9Q1067.7 876.1 1066.8 880.4M1033.9 895.2Q1029.3 892.4 1025.4 896.1M1070.6 877.6Q1066.4 880.5 1062.3 877.7M1036.1 878.3Q1039.8 877.7 1043.4 878.3M1036.3 873.0Q1038.9 875.4 1039.3 879.0M1046.8 887.3Q1045.3 889.6 1046.8 891.8M1063.3 873.9Q1067.1 877.0 1070.8 873.9M1045.1 882.3Q1047.8 880.4 1050.6 882.3M1068.8 894.2Q1071.3 897.3 1068.8 900.3M1047.5 892.4Q1048.2 894.2 1047.5 896.0M1073.6 885.7Q1077.4 882.3 1081.2 885.7M1054.3 897.4Q1057.7 898.4 1061.1 897.4M1086.7 898.6Q1090.8 896.2 1094.8 898.6M1068.6 898.7Q1065.3 900.0 1062.0 899.1M1036.1 889.7Q1035.2 891.6 1036.1 893.5M1074.9 899.4Q1075.9 901.7 1078.3 901.3M1070.8 897.2Q1074.5 899.0 1078.1 897.2M1066.2 871.2Q1067.7 872.8 1066.2 874.4M1087.5 877.0Q1090.4 875.3 1093.2 877.0M1038.5 892.4Q1039.2 894.7 1038.5 897.1M1063.2 882.9Q1062.8 885.9 1061.5 888.6M1049.6 871.2Q1050.0 873.4 1049.6 875.7M1081.8 897.2Q1077.1 899.2 1075.9 904.1M1080.2 870.4Q1075.3 873.6 1077.4 879.1M1074.1 883.3Q1074.1 887.7 1074.1 892.2M1047.2 897.9Q1046.4 900.4 1048.7 901.7M1044.5 889.9Q1041.6 895.3 1035.9 893.2M1084.7 895.3Q1080.6 899.6 1084.7 903.8M1086.5 871.3Q1089.1 871.2 1091.6 871.3M1051.0 890.9Q1052.4 894.9 1055.1 898.2M1042.9 892.7Q1041.4 894.4 1042.9 896.1M1085.4 886.6Q1087.8 890.2 1091.6 892.2M1084.4 892.3Q1083.8 894.0 1084.4 895.7M1026.8 897.4Q1028.2 898.0 1029.3 899.1M1081.1 878.5Q1086.5 878.4 1090.0 882.5M1089.1 878.4Q1086.2 881.6 1083.3 884.7M1048.6 895.7Q1050.0 899.4 1047.2 902.3M1030.6 877.7Q1026.5 882.6 1030.6 887.5M1089.1 891.7Q1092.9 895.7 1089.1 899.7M1083.5 894.3Q1087.7 895.5 1091.8 894.3M1027.1 899.4Q1028.6 904.3 1033.7 903.8M1027.6 891.4Q1030.5 892.3 1033.5 891.4M1033.4 895.6Q1036.8 897.5 1040.2 895.6M1084.4 899.2Q1086.5 898.4 1088.7 899.2M1086.0 880.1Q1090.5 880.9 1091.1 885.4M1075.9 888.1Q1074.7 890.0 1072.5 889.7M1038.8 893.0Q1042.6 891.0 1046.5 893.0M1057.3 870.1Q1056.3 872.9 1057.3 875.6M1046.6 883.2Q1049.2 884.1 1051.8 883.2M1051.0 871.5Q1052.9 872.1 1054.8 871.5M1081.1 890.0Q1076.0 889.4 1073.7 894.1M1086.2 879.7Q1086.3 883.4 1084.9 886.8M1044.0 886.9Q1044.7 892.1 1049.8 893.5M1037.5 887.7Q1039.7 889.1 1041.9 887.7M1067.3 884.9Q1071.6 886.8 1070.4 891.3M1041.1 939.3Q1043.8 941.0 1043.7 944.3M1044.1 906.6Q1046.7 908.7 1049.2 906.6M1041.7 913.9Q1042.9 917.3 1041.7 920.6M1060.3 931.3Q1064.2 931.7 1068.2 931.3M1064.0 941.1Q1061.7 945.1 1064.0 949.2M1084.9 917.0Q1084.1 920.2 1084.9 923.4M1064.8 925.6Q1069.4 925.0 1074.0 925.6M1082.2 933.7Q1079.9 937.7 1082.2 941.6M1060.4 925.9Q1060.3 928.1 1060.4 930.4M1046.7 943.9Q1046.0 948.2 1046.7 952.4M1063.7 937.8Q1065.2 940.4 1063.7 942.9M1066.8 914.1Q1070.8 916.3 1074.9 914.1M1071.7 929.4Q1070.5 931.5 1071.7 933.6M1066.6 930.2Q1068.7 929.3 1070.8 930.2M1047.3 938.8Q1051.4 942.3 1055.4 938.8M1052.2 915.0Q1054.1 913.1 1056.1 915.0M1077.8 910.5Q1078.9 912.6 1077.8 914.7M1074.6 913.2Q1077.4 913.1 1079.1 915.2M1067.3 915.4Q1071.8 915.5 1076.3 915.4M1058.0 922.9Q1060.8 925.4 1063.6 922.9M1041.3 938.6Q1045.1 936.3 1048.9 938.6M1081.1 926.3Q1078.7 929.4 1081.1 932.5M1065.1 922.7Q1066.6 922.0 1068.1 922.7M1050.5 917.1Q1052.9 920.0 1050.5 922.9M1079.8 905.1Q1076.5 907.0 1072.8 907.3M1051.6 940.8Q1051.5 945.6 1046.8 946.5M1057.9 914.8Q1058.1 918.6 1057.9 922.4M1054.5 944.2Q1056.3 942.9 1058.1 944.2M1051.2 915.2Q1048.6 918.2 1051.2 921.1M1077.0 917.7Q1075.8 919.9 1077.7 921.5M1069.4 942.8Q1073.9 947.3 1078.4 942.8M1070.7 919.6Q1068.5 923.8 1070.7 928.1M1064.3 923.7Q1063.3 925.5 1063.6 927.6M1042.5 925.6Q1040.6 928.8 1042.5 932.0M1079.9 915.9Q1083.0 913.7 1086.1 915.9M1040.7 907.0Q1043.5 908.9 1046.4 907.0M1081.7 944.2Q1084.3 946.6 1086.9 944.2M1071.1 920.5Q1072.4 921.7 1074.1 922.0M1053.4 911.5Q1057.1 909.7 1060.9 911.5M1080.0 913.5Q1073.8 915.1 1074.4 921.5M1049.1 914.5Q1051.1 916.1 1053.1 914.5M1041.6 922.7Q1041.9 924.7 1041.6 926.8M1047.6 907.0Q1049.4 906.2 1051.3 907.1M1053.9 913.0Q1053.5 917.1 1053.9 921.3M1066.7 926.0Q1069.8 926.1 1071.2 928.9M1054.9 909.1Q1057.9 911.1 1060.8 913.4M1073.9 932.1Q1075.9 935.7 1073.9 939.2M1041.9 932.7Q1044.7 931.0 1047.5 932.7M1066.9 915.0Q1068.1 917.3 1066.9 919.7M1050.2 940.5Q1051.2 942.8 1050.2 945.1M1044.0 921.8Q1046.6 926.6 1044.0 931.3M1042.2 905.9Q1046.9 910.2 1051.6 905.9M1050.7 943.8Q1051.9 946.3 1050.7 948.7M1073.4 943.7Q1077.8 946.4 1082.2 943.7M1080.4 919.5Q1082.7 920.0 1085.0 919.5M1079.2 912.8Q1076.3 914.6 1072.9 914.5M1056.8 917.1Q1057.3 921.1 1056.8 925.1M1063.4 937.4Q1061.5 942.0 1063.4 946.6M1077.0 941.2Q1078.9 945.1 1077.0 949.0M1076.1 933.4Q1077.7 934.4 1079.2 933.4M1051.7 941.5Q1051.2 943.7 1051.7 946.0M1059.4 915.8Q1061.8 917.2 1063.4 919.5M1072.1 927.0Q1075.3 927.3 1075.0 930.5M1060.4 927.6Q1064.5 925.0 1068.7 927.6M1057.4 933.7Q1062.1 938.4 1066.8 933.7M1077.8 942.5Q1079.4 943.1 1081.1 942.5M1070.3 938.8Q1074.3 943.8 1070.3 948.8M1055.1 915.3Q1057.6 913.0 1060.1 915.3M1041.5 936.4Q1040.8 938.8 1042.6 940.6M1052.5 940.9Q1051.6 943.7 1049.6 945.9M1070.9 939.9Q1066.2 937.3 1063.2 941.7M1051.3 931.9Q1052.5 934.2 1051.3 936.4M1053.8 905.9Q1057.9 908.1 1062.0 905.9M1055.9 937.9Q1057.6 938.8 1059.3 937.9M1055.2 942.7Q1050.8 944.3 1046.3 945.7M1056.8 918.6Q1055.6 920.4 1057.2 921.9M1044.4 922.7Q1048.8 925.5 1053.2 922.7M1082.1 927.2Q1084.5 926.3 1086.9 927.2M1084.0 913.1Q1086.2 914.3 1088.4 913.1M1043.1 912.5Q1043.0 916.3 1043.1 920.1M1055.2 911.7Q1059.1 912.3 1058.6 916.2M1056.0 907.9Q1056.3 911.3 1056.0 914.8M1082.0 938.8Q1082.7 943.3 1080.6 947.2M1084.6 934.5Q1086.5 935.1 1088.3 934.5M1078.3 911.7Q1080.5 910.9 1082.7 911.7M1040.6 930.8Q1043.0 934.3 1040.6 937.8M1066.5 942.9Q1063.6 945.6 1065.3 949.1M1084.1 941.3Q1083.1 943.4 1084.1 945.6M1077.9 925.3Q1079.8 923.8 1081.6 925.3M1056.3 921.6Q1059.0 925.4 1056.3 929.2M1051.4 939.3Q1053.5 943.7 1051.4 948.0M1072.5 937.0Q1070.6 940.9 1072.5 944.8M1071.9 927.2Q1071.5 931.8 1071.9 936.4M1062.2 916.8Q1063.4 919.7 1062.2 922.7M1060.5 913.9Q1059.9 918.7 1060.5 923.6M1064.2 930.4Q1068.6 930.4 1073.1 930.4M1061.3 917.1Q1060.0 918.8 1061.3 920.5M1045.8 910.1Q1048.0 908.0 1050.1 910.1M1062.4 930.5Q1067.0 932.0 1071.7 930.5M1050.1 937.5Q1054.2 940.1 1058.4 937.5M1049.6 932.1Q1053.7 936.6 1049.6 941.2M1068.5 908.7Q1071.7 911.8 1069.6 915.7M1081.9 925.3Q1085.3 929.8 1081.9 934.3M1077.9 933.4Q1075.9 935.7 1072.8 936.0M1082.9 905.8Q1084.9 907.2 1087.0 905.8M1051.1 942.7Q1051.2 945.9 1049.7 948.8M1066.2 924.9Q1067.9 929.5 1066.2 934.1M1070.8 911.3Q1070.0 916.5 1075.1 917.4M1062.9 928.9Q1061.0 931.6 1058.2 929.8M1060.7 909.7Q1066.6 907.6 1070.2 912.7M1079.0 935.7Q1081.4 934.6 1083.8 935.7M1046.9 918.0Q1046.3 919.7 1046.9 921.3M1083.3 918.3Q1081.4 918.2 1079.8 919.3M1054.1 913.3Q1054.6 915.2 1054.1 917.1M1060.7 942.8Q1064.2 946.7 1060.7 950.5M1083.8 941.6Q1083.3 944.2 1083.8 946.8M1066.1 923.6Q1070.3 926.5 1074.5 923.6M1082.1 912.4Q1084.3 916.3 1088.7 916.3M1058.4 934.6Q1060.5 937.1 1063.4 935.6M1040.2 942.7Q1042.3 941.5 1044.4 942.7M1065.1 925.4Q1069.1 930.0 1065.1 934.7M1072.8 928.3Q1074.3 927.2 1075.9 928.3M1072.8 913.0Q1074.9 915.2 1077.1 913.0M1071.2 909.5Q1070.8 911.9 1071.2 914.2M1066.9 936.6Q1066.1 940.4 1066.9 944.2M1065.1 914.2Q1065.6 916.9 1065.1 919.6M1058.6 925.9Q1061.8 927.9 1065.1 925.9M1084.4 942.7Q1087.5 946.7 1084.4 950.6M1043.3 922.9Q1046.1 924.1 1049.0 922.9M1099.6 949.1Q1101.8 950.8 1104.1 949.1M1075.6 946.5Q1073.0 951.2 1075.6 956.0M1069.5 962.5Q1065.7 962.4 1062.6 964.6M1083.7 969.0Q1082.0 972.6 1083.7 976.2M1115.4 956.5Q1112.8 959.9 1115.4 963.3M1068.7 950.2Q1069.8 953.6 1072.4 956.1M1052.2 953.4Q1053.0 955.2 1052.2 957.2M1053.8 968.5Q1052.4 969.9 1050.5 969.6M1103.9 945.8Q1106.3 946.0 1108.6 945.8M1104.7 971.7Q1106.6 971.3 1108.4 971.7M1089.0 958.7Q1089.1 963.5 1089.0 968.3M1064.9 949.3Q1065.6 951.2 1064.5 952.8M1076.5 949.4Q1080.7 946.5 1084.9 949.4M1082.1 948.6Q1086.7 946.6 1091.3 948.6M1093.4 946.9Q1098.3 942.1 1103.2 946.9M1073.3 962.1Q1075.1 967.0 1073.3 971.9M1102.5 945.3Q1105.9 942.2 1109.3 945.3M1103.1 966.7Q1105.9 970.4 1103.1 974.2M1078.8 969.2Q1077.1 972.7 1078.8 976.1M1090.2 963.9Q1092.2 966.5 1089.8 968.8M1098.6 971.9Q1102.6 969.0 1106.5 971.9M1095.6 960.1Q1090.8 959.9 1090.6 964.7M1082.2 945.3Q1080.9 949.5 1082.2 953.7M1069.9 957.7Q1068.4 960.9 1067.9 964.5M1113.3 957.9Q1114.8 961.0 1113.3 964.0M1086.5 962.8Q1086.5 965.9 1089.4 966.8M1110.0 948.1Q1113.6 946.9 1117.1 948.1M1098.8 949.2Q1102.2 952.5 1104.6 956.6M1103.8 957.2Q1108.1 958.2 1112.5 957.2M1082.0 965.2Q1084.0 968.3 1082.0 971.4M1098.4 964.0Q1101.9 968.8 1098.4 973.6M1048.6 961.0Q1053.6 963.0 1054.6 968.2M1107.9 948.3Q1108.1 951.2 1110.0 953.4M1073.4 945.3Q1074.9 948.2 1073.0 950.8M1114.6 950.9Q1119.2 948.2 1123.2 951.9M1107.8 958.2Q1106.1 960.7 1104.3 963.3M1109.5 965.3Q1112.4 963.7 1115.4 965.3M1115.9 959.3Q1118.4 958.6 1120.9 959.3M1097.5 956.7Q1099.6 955.1 1101.7 956.7M1114.3 969.0Q1113.0 970.8 1110.9 970.5M1064.1 965.3Q1062.7 968.5 1059.3 969.3M1107.6 951.0Q1108.1 956.0 1112.1 959.0M1111.3 960.5Q1114.0 961.5 1116.8 960.5M1046.7 946.2Q1051.1 946.2 1055.5 946.2M1081.0 949.3Q1086.3 948.9 1087.3 954.0M1102.4 950.4Q1106.1 950.9 1109.9 950.4M1095.5 959.8Q1090.5 962.3 1089.5 967.8M1050.2 947.4Q1054.8 947.5 1059.3 947.4M1107.1 957.1Q1107.4 960.8 1107.1 964.5M1059.5 953.5Q1062.2 951.3 1064.8 953.5M1072.4 964.8Q1070.7 963.6 1069.2 965.2M1092.8 971.2Q1095.4 968.6 1098.0 971.2M1103.0 950.4Q1104.8 949.5 1106.6 950.4M1093.1 967.0Q1091.9 972.2 1097.1 973.6M1084.5 953.8Q1090.2 951.3 1093.7 956.5M1083.0 953.1Q1078.9 955.9 1074.0 955.9M1083.0 969.0Q1079.9 972.3 1083.0 975.7M1063.1 966.6Q1063.8 970.7 1063.1 974.8M1071.0 965.7Q1073.7 969.7 1078.1 967.7M1100.3 953.1Q1099.4 954.8 1100.3 956.5M1075.3 967.9Q1072.5 970.0 1070.0 972.4M1076.4 970.7Q1080.7 967.7 1085.0 970.7M1099.6 959.9Q1101.6 962.0 1104.5 961.9M1103.5 945.1Q1104.9 946.6 1106.6 947.7M1079.4 954.1Q1079.5 956.0 1079.4 957.9M1080.4 946.7Q1083.1 949.7 1080.4 952.7M1091.6 946.3Q1094.3 950.9 1099.5 952.1M1056.0 951.6Q1055.6 953.3 1054.6 954.7M1049.5 964.1Q1044.7 969.0 1049.5 973.9M1057.5 966.7Q1060.4 971.5 1057.5 976.4M1106.6 954.4Q1108.2 957.0 1106.6 959.6M1082.6 964.2Q1087.3 967.5 1092.1 964.2M1048.8 970.4Q1051.8 968.5 1054.7 970.4M1047.8 947.1Q1046.9 949.4 1048.7 950.9M1052.7 963.6Q1055.2 961.7 1057.7 963.6M1100.0 956.4Q1102.8 959.5 1100.0 962.6M1091.8 959.4Q1095.4 959.4 1099.0 959.4M1102.8 952.2Q1101.4 955.4 1102.8 958.5M1078.5 950.9Q1074.9 955.4 1078.5 960.0M1098.2 964.5Q1095.5 964.1 1094.6 966.6M1083.4 947.4Q1083.4 950.5 1086.0 952.2M1094.3 955.0Q1099.1 951.9 1103.9 955.0M1100.1 961.4Q1100.7 963.5 1099.9 965.5M1086.2 953.5Q1089.6 956.6 1093.0 953.5M1068.2 968.4Q1064.9 971.7 1060.5 973.3M1113.9 958.9Q1114.0 960.4 1113.9 962.0M1066.4 955.3Q1069.5 958.3 1070.9 962.5M1071.1 968.8Q1071.2 971.7 1073.9 972.7M1090.4 971.9Q1092.0 971.8 1093.6 971.9M1103.8 958.2Q1105.8 960.1 1105.3 962.8M1080.8 956.7Q1080.0 958.6 1078.1 958.3M1069.1 950.7Q1064.3 950.4 1064.0 955.3M1097.6 960.4Q1094.5 963.7 1097.6 967.1M1075.9 950.4Q1079.3 953.3 1082.7 950.4M1089.0 947.2Q1092.8 947.0 1095.2 949.9M1095.8 952.3Q1094.9 954.9 1097.1 956.5M1079.7 946.4Q1079.1 950.3 1079.7 954.1M1089.0 964.2Q1089.2 965.8 1089.0 967.5M1098.3 958.6Q1099.2 960.5 1101.0 961.7M1110.1 957.2Q1109.7 959.8 1110.1 962.4M1063.1 948.4Q1058.7 948.0 1056.5 951.8M1103.4 960.9Q1103.8 963.3 1103.4 965.6M1086.7 946.0Q1090.8 948.4 1094.9 946.0" stroke="#bfb29a" stroke-width="0.7" fill="none"/><g fill="none" stroke="#c9bba2" stroke-width="0.9"><polyline points="791.5,400.5 791.5,439.5 795.5,450.5 806.5,460.5 809.5,464.5"/><polyline points="788.5,345.5 791.5,400.5"/><polyline points="643.5,675.5 661.5,695.5 674.5,710.5 708.5,744.5 722.5,728.5"/><polyline points="1062.5,760.5 1084.5,756.5 1106.5,757.5 1117.5,762.5 1126.5,829.5"/><polyline points="1187.5,818.5 1240.5,817.5 1251.5,809.5 1313.5,809.5"/><polyline points="1257.5,809.5 1257.5,840.5 1267.5,856.5 1259.5,867.5 1265.5,874.5 1277.5,873.5"/><polyline points="1267.5,875.5 1246.5,886.5 1253.5,898.5"/><polyline points="1240.5,817.5 1267.5,791.5 1267.5,719.5 1247.5,697.5"/><polyline points="1256.5,661.5 1238.5,663.5 1221.5,674.5 1213.5,697.5 1215.5,715.5 1225.5,724.5"/><polyline points="1231.5,701.5 1238.5,694.5 1244.5,697.5 1267.5,719.5"/><polyline points="1268.5,643.5 1272.5,647.5 1272.5,670.5"/><polyline points="1231.5,725.5 1240.5,733.5 1247.5,748.5"/><polyline points="1240.5,733.5 1251.5,735.5 1267.5,752.5"/><polyline points="1246.5,757.5 1246.5,773.5 1274.5,775.5 1300.5,768.5"/><polyline points="1256.5,774.5 1267.5,759.5"/><polyline points="1289.5,771.5 1294.5,786.5"/><polyline points="1406.5,847.5 1406.5,862.5"/><polyline points="1059.5,972.5 1116.5,972.5"/><polyline points="1116.5,965.5 1160.5,963.5"/><polyline points="952.5,928.5 1014.5,906.5 1091.5,859.5"/><polyline points="954.5,926.5 1014.5,904.5 1090.5,857.5"/><polyline points="952.5,840.5 952.5,957.5"/><polyline points="860.5,856.5 899.5,856.5 948.5,893.5 986.5,917.5"/><polyline points="886.5,840.5 904.5,862.5"/><polyline points="957.5,899.5 986.5,917.5"/><polyline points="952.5,949.5 961.5,949.5"/><polyline points="952.5,956.5 961.5,956.5"/><polyline points="988.5,963.5 988.5,972.5"/><polyline points="904.5,862.5 908.5,848.5 937.5,848.5 944.5,840.5"/><polyline points="937.5,868.5 939.5,848.5"/><polyline points="970.5,868.5 988.5,840.5"/><polyline points="586.5,617.5 593.5,613.5 608.5,612.5 624.5,619.5 635.5,624.5 643.5,624.5 652.5,619.5"/><polyline points="599.5,599.5 608.5,593.5 617.5,584.5 639.5,582.5"/><polyline points="575.5,633.5 586.5,626.5"/><polyline points="650.5,584.5 652.5,604.5 672.5,603.5"/><polyline points="674.5,633.5 688.5,633.5 692.5,626.5"/><polyline points="714.5,655.5 719.5,664.5 741.5,664.5 743.5,679.5"/><polyline points="688.5,692.5 690.5,706.5 681.5,710.5"/><polyline points="593.5,712.5 604.5,710.5 604.5,748.5"/><polyline points="652.5,721.5 674.5,721.5 674.5,759.5 688.5,759.5"/><polyline points="619.5,741.5 635.5,750.5 648.5,763.5"/><polyline points="901.5,754.5 949.5,754.5 1008.5,760.5 1044.5,760.5 1062.5,759.5 1086.5,754.5 1107.5,754.5 1119.5,762.5 1123.5,774.5 1125.5,831.5"/><polyline points="901.5,754.5 901.5,825.5 889.5,828.5 886.5,826.5"/><polyline points="814.5,819.5 814.5,854.5 898.5,854.5 910.5,866.5 925.5,878.5 949.5,893.5"/><polyline points="865.5,819.5 877.5,834.5 901.5,854.5"/><polyline points="817.5,819.5 829.5,822.5 859.5,820.5 889.5,825.5"/><polyline points="829.5,784.5 853.5,786.5 871.5,783.5 889.5,780.5"/><polyline points="871.5,757.5 871.5,780.5"/><polyline points="934.5,780.5 934.5,819.5 958.5,822.5 967.5,831.5 958.5,848.5 952.5,869.5"/><polyline points="950.5,783.5 955.5,780.5 962.5,783.5 964.5,801.5 955.5,807.5 949.5,798.5 950.5,783.5"/><polyline points="952.5,807.5 955.5,825.5 949.5,834.5 958.5,845.5"/><polyline points="991.5,819.5 1005.5,816.5 1005.5,828.5 1014.5,828.5 1014.5,762.5"/><polyline points="988.5,760.5 988.5,848.5 976.5,860.5"/><polyline points="1047.5,759.5 1047.5,878.5 1044.5,887.5 1032.5,896.5"/><polyline points="952.5,869.5 953.5,971.5"/><polyline points="1026.5,801.5 1056.5,795.5 1074.5,798.5 1092.5,813.5"/><polyline points="1026.5,831.5 1038.5,848.5 1059.5,840.5 1086.5,822.5"/><polyline points="1056.5,972.5 1116.5,972.5"/><polyline points="1116.5,962.5 1158.5,963.5"/><polyline points="904.5,684.5 949.5,690.5"/><polyline points="889.5,723.5 907.5,729.5"/><polyline points="844.5,759.5 871.5,757.5 895.5,762.5"/><polyline points="835.5,789.5 838.5,807.5"/><polyline points="1062.5,759.5 1080.5,774.5 1092.5,780.5 1098.5,795.5 1113.5,798.5"/><polyline points="1092.5,657.5 1110.5,687.5 1119.5,729.5"/><polyline points="1056.5,675.5 1062.5,699.5 1077.5,714.5"/><polyline points="970.5,648.5 985.5,648.5 991.5,654.5"/><polyline points="369.5,706.5 371.5,708.5"/></g><g fill="none" stroke="#b8c5ca" stroke-width="1"><polyline points="777.5,540.5 777.5,600.5"/><polyline points="786.5,540.5 786.5,600.5"/><polyline points="810.5,540.5 810.5,600.5"/><polyline points="829.5,540.5 829.5,600.5"/><polyline points="846.5,540.5 846.5,600.5"/><polyline points="864.5,540.5 864.5,600.5"/><polyline points="765.5,552.5 880.5,552.5"/><polyline points="765.5,572.5 880.5,572.5"/><polyline points="765.5,594.5 880.5,594.5"/></g><g fill="none" stroke="#d3c7b1" stroke-width="2.6"><polyline points="608.5,744.5 644.5,715.5 675.5,684.5 708.5,648.5 729.5,631.5 752.5,632.5 764.5,631.5 776.5,625.5 787.5,616.5 793.5,605.5 797.5,588.5 799.5,574.5 802.5,569.5"/></g><g fill="none" stroke="#a3b4ba" stroke-width="1"><polyline points="536.5,293.5 536.5,310.5 543.5,345.5 559.5,381.5 560.5,386.5 560.5,403.5 554.5,403.5"/><polyline points="541.5,379.5 541.5,387.5 549.5,387.5 550.5,395.5 554.5,396.5 553.5,405.5 546.5,411.5 527.5,411.5 520.5,420.5 513.5,425.5 500.5,426.5 491.5,427.5 488.5,426.5 488.5,412.5 480.5,412.5 479.5,419.5 463.5,419.5 461.5,436.5 431.5,444.5 410.5,463.5 410.5,490.5 393.5,491.5 393.5,498.5 390.5,499.5 394.5,506.5 391.5,511.5 338.5,519.5 300.5,532.5"/><polyline points="506.5,543.5 760.5,543.5"/><polyline points="646.5,488.5 644.5,492.5 646.5,540.5"/><polyline points="644.5,546.5 642.5,560.5 641.5,582.5 640.5,640.5 639.5,700.5 639.5,760.5"/><polyline points="938.5,456.5 943.5,446.5 1010.5,418.5 1023.5,416.5 1036.5,408.5 1054.5,400.5 1070.5,390.5 1085.5,375.5 1107.5,356.5"/><polyline points="915.5,456.5 915.5,485.5 880.5,486.5"/><polyline points="984.5,493.5 1003.5,493.5 1003.5,496.5 1054.5,494.5 1056.5,500.5 1075.5,506.5 1076.5,495.5 1085.5,487.5 1100.5,486.5 1110.5,484.5 1135.5,482.5"/><polyline points="780.5,539.5 899.5,539.5"/><polyline points="951.5,550.5 951.5,755.5"/><polyline points="813.5,653.5 817.5,675.5 822.5,690.5 830.5,706.5 832.5,725.5"/><polyline points="817.5,675.5 828.5,701.5 832.5,725.5"/><polyline points="690.5,735.5 688.5,746.5 694.5,763.5 688.5,772.5 692.5,781.5 699.5,786.5"/><polyline points="604.5,694.5 624.5,689.5 672.5,689.5 672.5,711.5 650.5,711.5"/><polyline points="638.5,640.5 638.5,657.5 637.5,706.5 639.5,759.5"/><polyline points="672.5,640.5 672.5,689.5"/><polyline points="674.5,646.5 703.5,640.5"/><polyline points="604.5,719.5 615.5,715.5 624.5,710.5 635.5,706.5"/><polyline points="1068.5,662.5 1084.5,694.5 1085.5,703.5"/><polyline points="1040.5,718.5 1066.5,698.5 1113.5,700.5 1124.5,688.5"/><polyline points="1048.5,762.5 1062.5,780.5 1064.5,795.5 1090.5,824.5 1094.5,833.5 1092.5,890.5"/><polyline points="1094.5,833.5 1141.5,833.5 1163.5,813.5 1159.5,802.5 1163.5,784.5 1157.5,771.5"/><polyline points="1064.5,793.5 1082.5,789.5 1113.5,804.5 1159.5,804.5"/><polyline points="1141.5,833.5 1163.5,842.5 1168.5,860.5 1197.5,890.5"/><polyline points="1040.5,816.5 1075.5,811.5"/><polyline points="1099.5,773.5 1106.5,776.5 1108.5,791.5 1113.5,802.5"/><polyline points="1091.5,840.5 1091.5,939.5 1094.5,946.5 1116.5,972.5"/><polyline points="952.5,937.5 979.5,936.5 997.5,929.5 1006.5,925.5 1019.5,924.5 1043.5,925.5 1059.5,927.5 1081.5,921.5 1091.5,921.5"/><polyline points="1021.5,916.5 1052.5,916.5 1065.5,904.5 1079.5,905.5 1081.5,899.5 1091.5,898.5"/><polyline points="1023.5,884.5 1030.5,870.5 1034.5,868.5 1043.5,868.5 1059.5,868.5 1070.5,872.5 1081.5,864.5 1091.5,853.5"/><polyline points="1023.5,884.5 1020.5,906.5 1021.5,916.5 1014.5,913.5 1003.5,917.5 1006.5,926.5 1014.5,927.5 1021.5,924.5"/><polyline points="952.5,868.5 992.5,861.5 993.5,840.5"/><polyline points="957.5,846.5 950.5,868.5"/><polyline points="994.5,929.5 1003.5,937.5"/><polyline points="1019.5,924.5 1019.5,928.5 1037.5,930.5 1045.5,932.5 1059.5,932.5 1072.5,930.5 1081.5,939.5 1091.5,939.5"/><polyline points="1048.5,932.5 1052.5,946.5 1048.5,950.5 1059.5,941.5 1059.5,932.5"/><polyline points="690.5,557.5 690.5,593.5 694.5,594.5 694.5,618.5"/><polyline points="677.5,679.5 729.5,621.5 734.5,589.5 734.5,569.5"/><polyline points="725.5,579.5 725.5,607.5 708.5,608.5"/><polyline points="725.5,585.5 757.5,587.5"/><polyline points="750.5,542.5 750.5,563.5"/><polyline points="778.5,551.5 778.5,602.5"/><polyline points="759.5,571.5 820.5,571.5"/><polyline points="660.5,542.5 820.5,542.5"/><polyline points="675.5,637.5 675.5,659.5 676.5,646.5 693.5,646.5 699.5,641.5 675.5,641.5"/><polyline points="729.5,625.5 755.5,625.5 755.5,631.5"/><polyline points="727.5,418.5 748.5,435.5 776.5,466.5 781.5,477.5"/><polyline points="724.5,425.5 722.5,450.5 729.5,482.5 734.5,539.5"/><polyline points="698.5,502.5 754.5,503.5"/><polyline points="698.5,467.5 698.5,594.5"/><polyline points="688.5,425.5 688.5,452.5"/><polyline points="535.5,604.5 542.5,607.5 568.5,613.5 586.5,617.5"/><polyline points="604.5,719.5 624.5,712.5 635.5,708.5"/><polyline points="672.5,641.5 701.5,641.5 692.5,646.5 674.5,647.5"/><polyline points="703.5,666.5 725.5,666.5 725.5,680.5 703.5,680.5"/><polyline points="952.5,640.5 952.5,750.5 950.5,753.5"/><polyline points="908.5,754.5 908.5,693.5 995.5,693.5 1008.5,704.5 1022.5,720.5 1035.5,738.5 1050.5,762.5 1062.5,783.5 1065.5,792.5 1077.5,807.5 1091.5,825.5 1094.5,834.5 1092.5,938.5 1091.5,942.5 1098.5,956.5 1116.5,972.5"/><polyline points="908.5,725.5 931.5,719.5 952.5,720.5 979.5,724.5 1026.5,725.5 1038.5,717.5 1053.5,705.5 1068.5,698.5 1113.5,701.5"/><polyline points="955.5,707.5 977.5,711.5 982.5,726.5 979.5,753.5"/><polyline points="955.5,737.5 979.5,734.5 1008.5,742.5 1022.5,745.5"/><polyline points="997.5,707.5 1002.5,741.5 998.5,759.5 998.5,819.5 991.5,860.5 973.5,868.5 952.5,869.5"/><polyline points="943.5,774.5 967.5,771.5 985.5,768.5 1000.5,768.5"/><polyline points="1068.5,663.5 1086.5,699.5 1086.5,708.5"/><polyline points="1094.5,832.5 1141.5,833.5 1158.5,819.5 1162.5,802.5 1161.5,789.5 1156.5,772.5"/><polyline points="1141.5,833.5 1164.5,840.5 1170.5,857.5 1200.5,890.5"/><polyline points="1062.5,792.5 1083.5,789.5 1113.5,804.5 1158.5,804.5"/><polyline points="1041.5,817.5 1074.5,812.5"/><polyline points="670.5,429.5 679.5,429.5 689.5,429.5"/><polyline points="689.5,415.5 689.5,436.5"/><polyline points="695.5,436.5 709.5,437.5 711.5,442.5 710.5,449.5 713.5,450.5 713.5,454.5 708.5,458.5 704.5,463.5 683.5,463.5 682.5,456.5 684.5,454.5 679.5,449.5 670.5,449.5 655.5,449.5"/><polyline points="670.5,429.5 667.5,436.5 670.5,449.5 670.5,464.5"/><polyline points="699.5,420.5 701.5,431.5 695.5,436.5"/><polyline points="731.5,420.5 724.5,425.5 723.5,436.5 727.5,442.5"/></g><g fill="none" stroke="#3f3630" stroke-width="1.6"><polyline points="938.5,456.5 939.5,479.5 941.5,480.5 942.5,519.5 939.5,524.5 935.5,527.5 926.5,531.5 916.5,532.5 897.5,532.5"/><polyline points="916.5,532.5 916.5,539.5"/><polyline points="672.5,602.5 672.5,630.5"/><polyline points="672.5,619.5 700.5,619.5"/></g><g fill="#b9876c" stroke="#3a2a22" stroke-width="0.9"><polygon points="727.2,434.0 733.0,431.6 740.0,431.6 745.4,433.6 740.5,439.9 736.7,441.5 736.7,449.8 729.7,449.8 727.6,444.8"/><polygon points="685.7,453.1 686.9,445.7 691.5,439.9 696.5,437.8 693.2,444.0 688.2,451.5"/><polygon points="676.0,437.6 679.8,437.6 679.8,442.7 676.0,442.7"/><polygon points="662.7,431.0 666.1,432.8 665.6,434.5 663.0,433.6"/><polygon points="663.4,459.3 667.2,458.2 668.3,460.9 663.8,461.1"/><polygon points="731.3,508.4 733.5,505.1 739.1,506.2 741.3,511.8 742.4,519.5 738.0,523.9 732.0,523.9 730.7,517.3"/><polygon points="699.2,526.1 703.7,521.3 707.7,521.3 707.0,526.1"/><polygon points="680.4,537.9 694.8,537.2 694.8,541.2 680.4,541.2"/><polygon points="647.9,620.2 652.8,619.1 672.7,620.2 672.7,634.6 652.8,635.0 647.9,630.1"/><polygon points="582.0,627.5 590.8,627.5 590.8,630.4 594.1,630.4 594.1,635.2 597.5,635.2 597.5,639.7 600.8,639.7 600.8,643.0 608.5,643.0 608.5,645.2 612.5,645.2 612.5,657.4 621.3,658.5 621.3,662.2 610.7,659.6 599.7,652.9 588.6,646.3 584.2,637.5"/><polygon points="742.4,625.7 745.3,615.1 749.0,621.3 749.0,625.7"/><polygon points="708.1,608.0 713.6,608.0 713.6,612.9 708.1,612.9"/><polygon points="714.7,606.9 724.7,606.9 724.7,612.0 714.7,612.0"/><polygon points="795.5,514.0 801.0,511.8 807.7,517.3 805.5,525.0 801.0,526.1 796.6,519.5"/><polygon points="809.9,519.5 814.3,514.0 818.7,516.2 816.5,526.1 812.1,525.0"/><polygon points="776.7,526.1 781.1,523.9 785.5,526.1 788.2,531.0 782.2,528.3 777.8,528.3"/><polygon points="825.4,502.9 832.0,497.4 838.7,498.5 840.0,506.2 829.8,507.3 824.3,510.6"/><polygon points="815.4,557.1 826.5,556.2 826.5,563.3 815.4,563.8"/><polygon points="805.5,578.1 812.1,577.0 815.4,581.5 809.9,582.6"/><polygon points="822.1,580.3 826.5,583.7 825.4,587.0 822.1,584.8"/><polygon points="816.5,585.9 823.2,588.1 822.1,592.1 816.5,589.2"/><polygon points="783.3,596.9 786.7,596.9 786.7,602.5 783.3,602.5"/><polygon points="750.1,588.1 752.4,588.1 752.4,593.6 750.1,593.6"/><polygon points="753.5,563.8 764.5,564.9 763.4,568.2 753.5,568.2"/><polygon points="826.5,614.2 830.9,614.2 830.9,618.0 826.5,618.0"/><polygon points="848.6,505.8 857.5,505.8 857.5,514.0 848.6,514.0"/><polygon points="868.1,525.0 874.0,523.5 875.6,530.6 868.5,531.0"/><polygon points="872.5,511.8 875.6,510.6 877.4,515.1 874.0,517.3"/><polygon points="890.4,486.8 893.9,487.3 896.4,491.8 898.9,495.7 902.8,498.7 909.8,499.7 916.0,499.5 916.0,501.5 909.8,500.9 903.8,501.4 898.9,500.0 891.9,497.0 890.4,494.7"/><polygon points="922.8,486.8 925.0,486.5 928.0,490.0 924.0,491.0"/><polygon points="922.7,488.5 926.1,487.4 928.3,491.8 923.8,492.9"/><polygon points="885.1,572.6 895.1,571.5 907.2,573.7 900.6,578.1 890.6,578.8 886.2,575.9"/><polygon points="933.4,563.8 942.6,563.8 942.6,568.6 933.4,568.6"/><polygon points="928.7,583.7 934.9,581.5 938.2,585.9 932.7,587.0"/><polygon points="955.9,595.8 961.5,595.8 963.2,600.9 957.0,601.4"/><polygon points="974.7,598.1 982.5,596.9 982.0,600.9 975.2,601.4"/><polygon points="969.2,570.4 972.5,571.5 975.2,583.7 972.1,584.8"/><polygon points="969.2,589.9 973.6,589.9 973.6,593.6 969.2,593.6"/><polygon points="917.2,598.1 920.5,598.1 920.5,601.4 917.2,601.4"/><polygon points="842.0,574.8 846.4,573.7 855.2,573.7 855.7,585.9 848.6,586.3 842.0,581.5"/><polygon points="862.3,575.9 865.9,577.0 865.2,579.2 862.3,578.8"/><polygon points="872.5,550.5 877.4,548.7 878.5,554.9 874.0,555.3"/><polygon points="846.4,563.8 855.2,562.6 855.2,567.1 846.4,567.1"/><polygon points="825.4,614.6 830.5,614.6 830.5,617.5 825.4,617.5"/><polygon points="820.9,537.2 824.3,536.1 824.3,540.5 820.9,540.5"/><polygon points="928.3,732.5 936.1,732.5 942.7,734.0 942.7,740.7 935.4,740.7 935.0,738.5 928.3,738.5"/><polygon points="881.4,772.8 888.5,768.3 891.8,768.3 891.8,777.2 882.3,782.1"/><polygon points="954.9,678.7 957.6,679.4 957.6,682.0 955.3,681.6"/><polygon points="1025.3,810.8 1030.1,811.5 1032.8,813.7 1032.8,817.5 1025.3,817.5"/><polygon points="1030.4,944.0 1034.8,940.0 1041.5,942.2 1040.3,944.0 1032.6,945.1"/><ellipse cx="927.4" cy="500" rx="12.2" ry="11"/></g><g fill="#7db07f" stroke="#222c24" stroke-width="1.0"><circle cx="726.9" cy="417.7" r="3.0"/><circle cx="707.0" cy="424.8" r="3.0"/><circle cx="713.8" cy="428.8" r="3.0"/><circle cx="747.9" cy="435.0" r="3.0"/><circle cx="750.1" cy="435.8" r="3.0"/><circle cx="725.8" cy="447.6" r="3.0"/><circle cx="728.0" cy="448.7" r="3.0"/><circle cx="721.8" cy="452.7" r="3.0"/><circle cx="733.8" cy="458.0" r="3.0"/><circle cx="727.6" cy="462.6" r="3.0"/><circle cx="728.5" cy="465.9" r="3.0"/><circle cx="739.7" cy="467.9" r="3.0"/><circle cx="728.5" cy="471.9" r="3.0"/><circle cx="728.5" cy="478.6" r="3.0"/><circle cx="728.5" cy="481.9" r="3.0"/><circle cx="781.1" cy="476.8" r="3.0"/><circle cx="785.1" cy="489.0" r="3.0"/><circle cx="809.9" cy="464.8" r="3.0"/><circle cx="812.1" cy="464.8" r="3.0"/><circle cx="813.9" cy="479.0" r="3.0"/><circle cx="817.0" cy="479.7" r="3.0"/><circle cx="690.8" cy="489.0" r="3.0"/><circle cx="694.8" cy="489.0" r="3.0"/><circle cx="699.7" cy="487.9" r="3.0"/><circle cx="693.7" cy="492.5" r="3.0"/><circle cx="691.5" cy="495.8" r="3.0"/><circle cx="717.6" cy="488.1" r="3.0"/><circle cx="721.8" cy="488.1" r="3.0"/><circle cx="726.9" cy="487.0" r="3.0"/><circle cx="729.8" cy="487.9" r="3.0"/><circle cx="739.7" cy="489.0" r="3.0"/><circle cx="747.9" cy="489.0" r="3.0"/><circle cx="703.7" cy="502.9" r="3.0"/><circle cx="754.6" cy="501.3" r="3.0"/><circle cx="757.4" cy="502.2" r="3.0"/><circle cx="752.8" cy="505.1" r="3.0"/><circle cx="757.9" cy="510.6" r="3.0"/><circle cx="761.2" cy="514.6" r="3.0"/><circle cx="818.3" cy="501.8" r="3.0"/><circle cx="821.0" cy="518.8" r="3.0"/><circle cx="838.7" cy="519.5" r="3.0"/><circle cx="838.7" cy="523.9" r="3.0"/><circle cx="838.7" cy="529.0" r="3.0"/><circle cx="803.9" cy="532.8" r="3.0"/><circle cx="807.7" cy="540.7" r="3.0"/><circle cx="838.7" cy="539.9" r="3.0"/><circle cx="705.9" cy="542.7" r="3.0"/><circle cx="723.6" cy="541.0" r="3.0"/><circle cx="734.6" cy="539.4" r="3.0"/><circle cx="732.4" cy="543.8" r="3.0"/><circle cx="734.6" cy="546.7" r="3.0"/><circle cx="745.0" cy="540.7" r="3.0"/><circle cx="770.1" cy="546.1" r="3.0"/><circle cx="777.8" cy="541.6" r="3.0"/><circle cx="788.9" cy="541.6" r="3.0"/><circle cx="798.8" cy="543.8" r="3.0"/><circle cx="802.1" cy="546.1" r="3.0"/><circle cx="801.0" cy="548.7" r="3.0"/><circle cx="678.9" cy="557.1" r="3.0"/><circle cx="695.9" cy="556.0" r="3.0"/><circle cx="701.0" cy="554.9" r="3.0"/><circle cx="710.8" cy="552.7" r="3.0"/><circle cx="719.8" cy="549.8" r="3.0"/><circle cx="733.5" cy="557.1" r="3.0"/><circle cx="736.4" cy="555.8" r="3.0"/><circle cx="732.9" cy="560.9" r="3.0"/><circle cx="750.1" cy="563.8" r="3.0"/><circle cx="767.8" cy="553.8" r="3.0"/><circle cx="774.5" cy="556.7" r="3.0"/><circle cx="776.7" cy="556.0" r="3.0"/><circle cx="777.8" cy="562.6" r="3.0"/><circle cx="781.1" cy="568.8" r="3.0"/><circle cx="794.8" cy="566.0" r="3.0"/><circle cx="767.8" cy="564.9" r="3.0"/><circle cx="768.9" cy="569.9" r="3.0"/><circle cx="768.9" cy="574.2" r="3.0"/><circle cx="765.6" cy="577.7" r="3.0"/><circle cx="768.9" cy="579.2" r="3.0"/><circle cx="768.9" cy="584.8" r="3.0"/><circle cx="798.4" cy="556.0" r="3.0"/><circle cx="802.1" cy="557.1" r="3.0"/><circle cx="802.1" cy="562.0" r="3.0"/><circle cx="639.5" cy="574.2" r="3.0"/><circle cx="640.6" cy="577.7" r="3.0"/><circle cx="638.4" cy="582.6" r="3.0"/><circle cx="690.4" cy="579.7" r="3.0"/><circle cx="690.4" cy="583.2" r="3.0"/><circle cx="637.3" cy="596.5" r="3.0"/><circle cx="708.8" cy="596.5" r="3.0"/><circle cx="719.8" cy="595.8" r="3.0"/><circle cx="794.8" cy="594.1" r="3.0"/><circle cx="793.3" cy="599.8" r="3.0"/><circle cx="793.7" cy="606.9" r="3.0"/><circle cx="790.0" cy="619.1" r="3.0"/><circle cx="812.8" cy="614.0" r="3.0"/><circle cx="812.1" cy="625.7" r="3.0"/><circle cx="812.5" cy="631.2" r="3.0"/><circle cx="813.9" cy="634.1" r="3.0"/><circle cx="813.9" cy="639.7" r="3.0"/><circle cx="812.5" cy="650.7" r="3.0"/><circle cx="822.1" cy="625.0" r="3.0"/><circle cx="825.4" cy="625.0" r="3.0"/><circle cx="647.9" cy="642.8" r="3.0"/><circle cx="714.7" cy="639.7" r="3.0"/><circle cx="719.8" cy="635.0" r="3.0"/><circle cx="726.9" cy="631.9" r="3.0"/><circle cx="746.8" cy="634.6" r="3.0"/><circle cx="705.9" cy="650.1" r="3.0"/><circle cx="708.8" cy="650.1" r="3.0"/><circle cx="698.8" cy="657.8" r="3.0"/><circle cx="703.2" cy="656.7" r="3.0"/><circle cx="637.9" cy="658.9" r="3.0"/><circle cx="849.3" cy="541.0" r="3.0"/><circle cx="857.9" cy="539.9" r="3.0"/><circle cx="874.0" cy="541.0" r="3.0"/><circle cx="880.7" cy="541.0" r="3.0"/><circle cx="890.6" cy="541.0" r="3.0"/><circle cx="894.0" cy="539.9" r="3.0"/><circle cx="899.5" cy="539.9" r="3.0"/><circle cx="878.0" cy="509.5" r="3.0"/><circle cx="863.6" cy="556.0" r="3.0"/><circle cx="864.8" cy="557.1" r="3.0"/><circle cx="871.8" cy="556.0" r="3.0"/><circle cx="865.9" cy="570.8" r="3.0"/><circle cx="880.7" cy="570.8" r="3.0"/><circle cx="876.7" cy="601.8" r="3.0"/><circle cx="887.8" cy="601.8" r="3.0"/><circle cx="888.9" cy="603.1" r="3.0"/><circle cx="910.1" cy="600.9" r="3.0"/><circle cx="922.7" cy="571.9" r="3.0"/><circle cx="951.9" cy="552.7" r="3.0"/><circle cx="950.8" cy="567.7" r="3.0"/><circle cx="953.3" cy="572.6" r="3.0"/><circle cx="950.8" cy="574.4" r="3.0"/><circle cx="950.8" cy="584.8" r="3.0"/><circle cx="952.2" cy="587.0" r="3.0"/><circle cx="953.3" cy="590.8" r="3.0"/><circle cx="952.2" cy="597.6" r="3.0"/><circle cx="948.6" cy="601.8" r="3.0"/><circle cx="953.3" cy="606.2" r="3.0"/><circle cx="952.2" cy="611.3" r="3.0"/><circle cx="950.8" cy="613.5" r="3.0"/><circle cx="950.8" cy="619.7" r="3.0"/><circle cx="950.8" cy="623.1" r="3.0"/><circle cx="952.2" cy="652.7" r="3.0"/><circle cx="954.2" cy="656.0" r="3.0"/><circle cx="950.8" cy="658.9" r="3.0"/><circle cx="847.1" cy="625.7" r="3.0"/><circle cx="849.3" cy="625.0" r="3.0"/><circle cx="637.7" cy="661.0" r="3.0"/><circle cx="630.6" cy="667.7" r="3.0"/><circle cx="635.1" cy="667.0" r="3.0"/><circle cx="639.9" cy="668.8" r="3.0"/><circle cx="639.9" cy="676.5" r="3.0"/><circle cx="639.9" cy="680.9" r="3.0"/><circle cx="637.3" cy="685.4" r="3.0"/><circle cx="640.6" cy="686.5" r="3.0"/><circle cx="642.8" cy="687.6" r="3.0"/><circle cx="636.6" cy="688.7" r="3.0"/><circle cx="639.9" cy="692.7" r="3.0"/><circle cx="659.9" cy="694.9" r="3.0"/><circle cx="639.9" cy="699.7" r="3.0"/><circle cx="639.9" cy="704.6" r="3.0"/><circle cx="641.3" cy="706.8" r="3.0"/><circle cx="647.9" cy="704.2" r="3.0"/><circle cx="650.6" cy="704.2" r="3.0"/><circle cx="655.0" cy="703.1" r="3.0"/><circle cx="647.9" cy="708.6" r="3.0"/><circle cx="645.7" cy="713.0" r="3.0"/><circle cx="661.0" cy="707.5" r="3.0"/><circle cx="663.8" cy="711.9" r="3.0"/><circle cx="655.6" cy="715.7" r="3.0"/><circle cx="627.8" cy="720.8" r="3.0"/><circle cx="620.7" cy="726.7" r="3.0"/><circle cx="637.7" cy="725.9" r="3.0"/><circle cx="641.0" cy="724.8" r="3.0"/><circle cx="637.7" cy="729.6" r="3.0"/><circle cx="612.5" cy="734.0" r="3.0"/><circle cx="617.4" cy="732.5" r="3.0"/><circle cx="620.2" cy="735.2" r="3.0"/><circle cx="624.0" cy="732.9" r="3.0"/><circle cx="628.9" cy="731.4" r="3.0"/><circle cx="632.9" cy="732.9" r="3.0"/><circle cx="637.3" cy="732.9" r="3.0"/><circle cx="639.9" cy="734.7" r="3.0"/><circle cx="648.8" cy="732.9" r="3.0"/><circle cx="655.6" cy="730.7" r="3.0"/><circle cx="611.4" cy="738.9" r="3.0"/><circle cx="616.7" cy="737.8" r="3.0"/><circle cx="614.0" cy="741.8" r="3.0"/><circle cx="628.9" cy="740.0" r="3.0"/><circle cx="632.9" cy="744.4" r="3.0"/><circle cx="638.8" cy="741.3" r="3.0"/><circle cx="638.4" cy="745.8" r="3.0"/><circle cx="638.4" cy="748.4" r="3.0"/><circle cx="604.8" cy="746.9" r="3.0"/><circle cx="622.5" cy="756.6" r="3.0"/><circle cx="626.9" cy="758.8" r="3.0"/><circle cx="626.2" cy="754.0" r="3.0"/><circle cx="630.0" cy="755.5" r="3.0"/><circle cx="686.0" cy="661.7" r="3.0"/><circle cx="689.9" cy="667.0" r="3.0"/><circle cx="697.0" cy="663.9" r="3.0"/><circle cx="694.2" cy="673.2" r="3.0"/><circle cx="683.8" cy="673.9" r="3.0"/><circle cx="683.8" cy="679.8" r="3.0"/><circle cx="676.0" cy="681.6" r="3.0"/><circle cx="676.0" cy="686.0" r="3.0"/><circle cx="690.4" cy="732.9" r="3.0"/><circle cx="722.9" cy="727.9" r="3.0"/><circle cx="952.7" cy="664.8" r="3.0"/><circle cx="952.7" cy="690.9" r="3.0"/><circle cx="952.0" cy="694.9" r="3.0"/><circle cx="954.2" cy="698.6" r="3.0"/><circle cx="952.0" cy="699.7" r="3.0"/><circle cx="952.0" cy="703.1" r="3.0"/><circle cx="952.0" cy="710.8" r="3.0"/><circle cx="952.0" cy="720.8" r="3.0"/><circle cx="952.0" cy="739.6" r="3.0"/><circle cx="952.0" cy="744.0" r="3.0"/><circle cx="951.6" cy="746.9" r="3.0"/><circle cx="950.5" cy="750.2" r="3.0"/><circle cx="938.3" cy="754.0" r="3.0"/><circle cx="941.6" cy="754.0" r="3.0"/><circle cx="944.9" cy="754.0" r="3.0"/><circle cx="972.2" cy="754.0" r="3.0"/><circle cx="973.7" cy="755.1" r="3.0"/><circle cx="978.8" cy="754.6" r="3.0"/><circle cx="989.2" cy="756.6" r="3.0"/><circle cx="995.8" cy="757.9" r="3.0"/><circle cx="1027.9" cy="724.8" r="3.0"/><circle cx="1039.0" cy="745.1" r="3.0"/><circle cx="1042.3" cy="751.8" r="3.0"/><circle cx="1043.4" cy="754.0" r="3.0"/><circle cx="1047.2" cy="756.6" r="3.0"/><circle cx="1054.9" cy="759.7" r="3.0"/></g></svg></div>
<svg class="abs" style="left:0;top:0" width="1446" height="1206"><rect x="266.5" y="107.5" width="11" height="11" rx="2" fill="none" stroke="#9a9a9a" stroke-width="0.8"/><rect x="280.5" y="107.5" width="11" height="11" rx="2" fill="none" stroke="#9a9a9a" stroke-width="0.8"/><rect x="268.5" y="111.5" width="5" height="5" fill="none" stroke="#9a9a9a" stroke-width="0.8"/><rect x="270.5" y="109.5" width="5" height="5" fill="none" stroke="#9a9a9a" stroke-width="0.8"/><path d="M283 110.5l6 6M289 110.5l-6 6" stroke="#9a9a9a" stroke-width="1.2"/><rect x="8" y="130" width="12" height="12" fill="#eeeeee"/><rect x="16" y="138" width="6" height="6" fill="#5aa05a"/><circle cx="19" cy="141" r="1.5" fill="#cfe8cf"/><path d="M33 136a7 7 0 0 1 12-3l1.5-1.5v5.5h-5.5l1.5-1.5a4.5 4.5 0 0 0-7 2z" fill="#4f8fd0"/><path d="M47 139a7 7 0 0 1-12 3l-1.5 1.5v-5.5h5.5l-1.5 1.5a4.5 4.5 0 0 0 7-2z" fill="#4f8fd0"/><rect x="58" y="130" width="14" height="2.5" fill="#f2d23a"/><path d="M58.5 133h13l-5 6v6l-3-2v-4z" fill="#6f9fd0"/><path d="M84 131h6M84 131v12M84 137h3M84 143h3" stroke="#bbb" stroke-width="0.8" fill="none"/><rect x="86" y="134" width="3" height="3" fill="#f29a1a"/><rect x="86" y="140" width="3" height="3" fill="#f29a1a"/><path d="M93 143v-9h-3l4.5-5 4.5 5h-3v9z" fill="#6f9fd0"/><circle cx="115" cy="137" r="7" fill="#6f9fd0"/><text x="113" y="141.5" font-size="10" font-style="italic" font-weight="700" fill="#fff" font-family="Liberation Serif">i</text><path d="M6 158.5l4.5 4.5-4.5 4.5z" fill="#b4b4b4"/><path d="M20 156h6l1.5 2h7v11h-14.5z" fill="#e6e6e6"/><polygon points="27.00,173.70 29.12,179.09 34.89,179.44 30.42,183.11 31.88,188.71 27.00,185.60 22.12,188.71 23.58,183.11 19.11,179.44 24.88,179.09" fill="#f7e25a" stroke="#b89a20" stroke-width="0.6"/><path d="M6 194.5l4.5 4.5-4.5 4.5z" fill="#b4b4b4"/><path d="M20 192h14v14h-12c-1.5 0-2-1-2-2z" fill="#e6e6e6"/><path d="M28 191h2.5v6l-1.25 1.5-1.25-1.5z" fill="#6f9fd0"/><path d="M6 212.5l4.5 4.5-4.5 4.5z" fill="#b4b4b4"/><path d="M20 210h5l1.5 1.5h7.5v12.5h-14z" fill="#b8e07a"/><path d="M20 212l14 10M22 223l10-11" stroke="#fff" stroke-width="0.6"/><path d="M26 214l4-2 3 2-2 4z" fill="#19a019"/><path d="M6 230.5l4.5 4.5-4.5 4.5z" fill="#b4b4b4"/><path d="M20 228h5l1.5 1.5h7.5v12.5h-14z" fill="#ececec"/><path d="M24 236l3-3 3 3v3h-6z" fill="#fff" stroke="#222" stroke-width="0.8"/><path d="M6 248.5l4.5 4.5-4.5 4.5z" fill="#b4b4b4"/><path d="M20 246h6l1.5 2h7v11h-14.5z" fill="#e6e6e6"/><path d="M20 272l7 4v-8l-7-3z" fill="#e6c02a"/><path d="M27 276l7-3v-7l-7 2z" fill="#fbf08a"/><circle cx="27" cy="268" r="5" fill="#8cb4e0"/><path d="M24 266c2 0 3 1 2 3z" fill="#3a6aa0"/><path d="M19 297c3-7 7-13 15-16-2 6-7 12-13 14z" fill="#a8c4e6" stroke="#6a8ab0" stroke-width="0.5"/><path d="M21 300c4-2 10-2 13 1 1 3 0 7-2 9v4c-1 2-3 2-3 0v-3c-2 0-4 0-5-2-2 0-3-3-3-6z" fill="#6f9fd0"/><path d="M19 326v-8h8" fill="none" stroke="#bbb" stroke-width="1"/><path d="M21.5 328v-8h8" fill="none" stroke="#8ab0d8" stroke-width="1"/><rect x="24" y="322" width="10" height="10" fill="#3a5a80" stroke="#6f9fd0" stroke-width="0.8"/><circle cx="29" cy="327" r="3" fill="none" stroke="#ddd" stroke-width="0.8"/><path d="M19 336c5 0 11 3 15 7-5 1-10 4-15 8 2-5 2-10 0-15z" fill="#6f9fd0"/><circle cx="27" cy="361" r="7.5" fill="#8cb4e0"/><path d="M22 358c2-1 4 0 4 2s-2 3-3 1zM28 356l3 1-1 3zM28 362l2 4-2 1z" fill="#e8f0f8"/><path d="M20 383c0-3 2-4 4-4 1-3 5-4 7-1 2 0 3 2 3 5z" fill="#a8c8ea"/><path d="M27 389l7 3.5v9l-7 3.5-7-3.5v-9z" fill="#a8c8ea"/><path d="M20 392.5l7 3.5 7-3.5M27 396v9" stroke="#5a86b8" stroke-width="0.8" fill="none"/><circle cx="27" cy="415" r="2.4" fill="#6f9fd0"/><path d="M23.5 411a5 5 0 0 0 0 8M30.5 411a5 5 0 0 1 0 8M21 409a8 8 0 0 0 0 12M33 409a8 8 0 0 1 0 12" fill="none" stroke="#5a86b8" stroke-width="0.9"/><rect x="20" y="426" width="14" height="14" fill="#3a5a80"/><rect x="20.7" y="426.7" width="3.6" height="3.6" fill="#dfe8f2"/><rect x="20.7" y="431.3" width="3.6" height="3.6" fill="#dfe8f2"/><rect x="20.7" y="435.9" width="3.6" height="3.6" fill="#dfe8f2"/><rect x="25.299999999999997" y="426.7" width="3.6" height="3.6" fill="#dfe8f2"/><rect x="25.299999999999997" y="431.3" width="3.6" height="3.6" fill="#dfe8f2"/><rect x="25.299999999999997" y="435.9" width="3.6" height="3.6" fill="#dfe8f2"/><rect x="29.9" y="426.7" width="3.6" height="3.6" fill="#dfe8f2"/><rect x="29.9" y="431.3" width="3.6" height="3.6" fill="#dfe8f2"/><rect x="29.9" y="435.9" width="3.6" height="3.6" fill="#dfe8f2"/><path d="M6 446.5l4.5 4.5-4.5 4.5z" fill="#b4b4b4"/><rect x="20" y="444" width="4" height="4" fill="#6f9fd0"/><rect x="20" y="449" width="4" height="4" fill="#6f9fd0"/><rect x="20" y="454" width="4" height="4" fill="#6f9fd0"/><rect x="25" y="444" width="4" height="4" fill="#6f9fd0"/><rect x="25" y="449" width="4" height="4" fill="#6f9fd0"/><rect x="25" y="454" width="4" height="4" fill="#6f9fd0"/><rect x="30" y="444" width="4" height="4" fill="#6f9fd0"/><rect x="30" y="449" width="4" height="4" fill="#6f9fd0"/><rect x="30" y="454" width="4" height="4" fill="#6f9fd0"/><circle cx="27" cy="469" r="7.5" fill="#6f9fd0"/><path d="M20 467h14M20 471h14M27 462v14" stroke="#e8f0f8" stroke-width="1.2"/><ellipse cx="27" cy="469" rx="3.5" ry="7" fill="none" stroke="#e8f0f8" stroke-width="1"/><circle cx="27" cy="487" r="7.5" fill="#3a5a80" stroke="#6f9fd0" stroke-width="1"/><path d="M20 484h14M20 487h14M20 490h14M27 480v14" stroke="#8ab0d8" stroke-width="0.6"/><ellipse cx="27" cy="487" rx="3.5" ry="7" fill="none" stroke="#8ab0d8" stroke-width="0.6"/><circle cx="27" cy="505" r="7.5" fill="#6f9fd0" stroke="#8ab0d8" stroke-width="0.8"/><path d="M23 501l4 6 3-5M25 508l2 2" stroke="#fff" stroke-width="1" fill="none"/><rect x="266.5" y="617.5" width="11" height="11" rx="2" fill="none" stroke="#9a9a9a" stroke-width="0.8"/><rect x="280.5" y="617.5" width="11" height="11" rx="2" fill="none" stroke="#9a9a9a" stroke-width="0.8"/><rect x="268.5" y="621.5" width="5" height="5" fill="none" stroke="#9a9a9a" stroke-width="0.8"/><rect x="270.5" y="619.5" width="5" height="5" fill="none" stroke="#9a9a9a" stroke-width="0.8"/><path d="M283 620.5l6 6M289 620.5l-6 6" stroke="#9a9a9a" stroke-width="1.2"/><rect x="139" y="609" width="2" height="2" fill="#9a9a9a"/><rect x="142" y="609" width="2" height="2" fill="#9a9a9a"/><rect x="145" y="609" width="2" height="2" fill="#9a9a9a"/><rect x="148" y="609" width="2" height="2" fill="#9a9a9a"/><rect x="151" y="609" width="2" height="2" fill="#9a9a9a"/><rect x="154" y="609" width="2" height="2" fill="#9a9a9a"/><rect x="296" y="637" width="2" height="2" fill="#8a8a8a"/><rect x="1443" y="637" width="2" height="2" fill="#9a9a9a"/><rect x="296" y="640" width="2" height="2" fill="#8a8a8a"/><rect x="1443" y="640" width="2" height="2" fill="#9a9a9a"/><rect x="296" y="643" width="2" height="2" fill="#8a8a8a"/><rect x="1443" y="643" width="2" height="2" fill="#9a9a9a"/><rect x="296" y="646" width="2" height="2" fill="#8a8a8a"/><rect x="1443" y="646" width="2" height="2" fill="#9a9a9a"/><rect x="296" y="649" width="2" height="2" fill="#8a8a8a"/><rect x="1443" y="649" width="2" height="2" fill="#9a9a9a"/><rect x="296" y="652" width="2" height="2" fill="#8a8a8a"/><rect x="1443" y="652" width="2" height="2" fill="#9a9a9a"/><path d="M9 650l4-7 8 4-3 6z" fill="#d83a2a"/><path d="M10 646l4-5 7 3-3 5z" fill="#f2c23a"/><path d="M12 643l3-3 6 2-2 3z" fill="#5a9ad8"/><path d="M17 645l5 5-2 3-5-4z" fill="#e0c890"/><line x1="19" y1="646" x2="22" y2="641" stroke="#d8a838" stroke-width="1.5"/><path d="M34 654v-8M34 654h5" stroke="#aaa" stroke-width="0.6" fill="none"/><rect x="36" y="642" width="9" height="11" fill="#ddd" stroke="#888" stroke-width="0.5"/><rect x="39" y="640" width="7" height="12" fill="#eee" stroke="#888" stroke-width="0.5"/><path d="M41 639v9" stroke="#3a6ab0" stroke-width="1"/><rect x="42" y="649" width="5.5" height="5.5" fill="#4aa04a"/><path d="M58 647c3-4 11-4 14 0-3 4-11 4-14 0z" fill="#fff"/><circle cx="65" cy="647" r="3" fill="#6f9fd0"/><circle cx="65" cy="646.5" r="1.2" fill="#111"/><path d="M58 644c3-2 9-2 13 0" stroke="#ccc" stroke-width="0.6" fill="none"/><path d="M70 652h5l-2.5 2.5z" fill="#bbb"/><rect x="84" y="640" width="13" height="2" fill="#f2d23a"/><path d="M84 642h13l-4.5 5v8l-3-2.5v-5.5z" fill="#6f9fd0"/><path d="M94 652h5l-2.5 2.5z" fill="#bbb"/><text x="109" y="650" font-size="11" fill="#8a4aa8" font-family="Liberation Serif">ε</text><rect x="116" y="648" width="7" height="7" fill="#ddd"/><path d="M130 645h7l-3.5 3.5z" fill="#bbb"/><path d="M146 641h6M146 641v14M146 647h3M146 654h3" stroke="#bbb" stroke-width="0.8" fill="none"/><rect x="148" y="644" width="3" height="3" fill="#f29a1a"/><rect x="148" y="651" width="3" height="3" fill="#f29a1a"/><path d="M155 640v9h-3l4.5 5.5 4.5-5.5h-3v-9z" fill="#6f9fd0"/><path d="M171 641h6M171 641v14M171 647h3M171 654h3" stroke="#bbb" stroke-width="0.8" fill="none"/><rect x="173" y="644" width="3" height="3" fill="#f29a1a"/><rect x="173" y="651" width="3" height="3" fill="#f29a1a"/><path d="M180 655v-9h-3l4.5-5.5 4.5 5.5h-3v9z" fill="#6f9fd0"/><rect x="195" y="640" width="12" height="12" fill="#eeeeee"/><rect x="203" y="648" width="6.5" height="5" fill="#e84a4a"/><rect x="204" y="650" width="4.5" height="1.2" fill="#fff"/><rect x="0" y="664" width="292" height="18" fill="#d9488a"/><rect x="62" y="664" width="230" height="18" fill="#e05c98"/><rect x="23" y="666" width="14" height="14" fill="#262626"/><path d="M26.5 673.5l2.5 3.5 4.5-7" fill="none" stroke="#e8e8e8" stroke-width="1.3"/><circle cx="51" cy="673" r="3.6" fill="#78b07a" stroke="#3a5a3a" stroke-width="0.4"/><rect x="23.5" y="684.5" width="13" height="13" fill="#262626" stroke="#383838"/><path d="M26.5 691.5l2.5 3.5 4.5-7" fill="none" stroke="#e8e8e8" stroke-width="1.3"/><rect x="43.5" y="683.5" width="15" height="15" rx="1" fill="#b98469"/><rect x="23.5" y="702.5" width="13" height="13" fill="#262626" stroke="#383838"/><path d="M26.5 709.5l2.5 3.5 4.5-7" fill="none" stroke="#e8e8e8" stroke-width="1.3"/><rect x="43" y="708.3" width="14" height="1.6" fill="#7d98a3"/><rect x="23.5" y="720.5" width="13" height="13" fill="#262626" stroke="#383838"/><path d="M26.5 727.5l2.5 3.5 4.5-7" fill="none" stroke="#e8e8e8" stroke-width="1.3"/><rect x="43" y="726.3" width="14" height="1.6" fill="#c7b597"/><rect x="0" y="1169.5" width="292" height="13.5" fill="#474747"/><rect x="0.5" y="1170" width="12" height="12.5" fill="#4c4c4c" stroke="#5e5e5e" stroke-width="0.7"/><path d="M9 1172.5v8l-4.5-4z" fill="#c4c4c4"/><rect x="14" y="1170" width="189.5" height="12.5" fill="#555" stroke="#6a6a6a" stroke-width="0.7"/><rect x="279" y="1170" width="12.5" height="12.5" fill="#4c4c4c" stroke="#5e5e5e" stroke-width="0.7"/><path d="M283 1172.5v8l4.5-4z" fill="#c4c4c4"/><rect x="4" y="1188" width="206" height="22" rx="4" fill="#262626"/><circle cx="17" cy="1197" r="4" fill="none" stroke="#bbb" stroke-width="1.3"/><line x1="20" y1="1200" x2="24" y2="1204" stroke="#bbb" stroke-width="1.5"/><rect x="931" y="1188" width="125" height="22" rx="3" fill="#262626"/><path d="M1063 1193l5-3 5 4 2 6-4 4-5-2z" fill="#ddd" stroke="#222" stroke-width="0.6"/><circle cx="1071" cy="1201" r="2" fill="#999"/><path d="M1073 1189l3-2" stroke="#ddd"/><rect x="1122" y="1188" width="92" height="22" rx="3" fill="#262626"/><rect x="1195" y="1188" width="19" height="22" rx="2" fill="#555"/><path d="M1200 1197h8l-4 4z" fill="#222"/><rect x="1227" y="1199" width="12" height="9" rx="1" fill="#8a8a8a"/><path d="M1229 1199v-3a4 4 0 0 1 8 0v3" fill="none" stroke="#8a8a8a" stroke-width="1.8"/><rect x="1301" y="1188" width="92" height="22" rx="3" fill="#262626"/><rect x="1380" y="1188" width="13" height="22" fill="#4a4a4a"/><path d="M1382 1196l4.5-4 4.5 4zM1382 1201l4.5 4 4.5-4z" fill="#bbb"/></svg>
<div class="ptitle" style="top:106px">Browser</div><div class="item" style="top:155px">/Volumes</div><div class="item" style="top:173px">Favorites</div><div class="item" style="top:191px">Spatial Bookmarks</div><div class="item" style="top:209px">Project Home</div><div class="item" style="top:227px">Home</div><div class="item" style="top:245px">/ (Macintosh HD)</div><div class="item" style="top:263px">GeoPackage</div><div class="item" style="top:281px">SpatiaLite</div><div class="item" style="top:299px">PostgreSQL</div><div class="item" style="top:317px">STAC</div><div class="item" style="top:335px">MS SQL Server</div><div class="item" style="top:353px">WMS/WMTS</div><div class="item" style="top:371px">Cloud</div><div class="item" style="top:389px">Scenes</div><div class="item" style="top:407px">SensorThings</div><div class="item" style="top:425px">Vector Tiles</div><div class="item" style="top:443px">XYZ Tiles</div><div class="item" style="top:461px">WCS</div><div class="item" style="top:479px">WFS / OGC API - Features</div><div class="item" style="top:497px">ArcGIS REST Servers</div><div class="ptitle" style="top:616px">Layers</div><div class="ltxt" style="top:664px;left:65px;text-decoration:underline;">OrlandoBoardsBillboards_-809605</div><div class="ltxt" style="top:682px;left:65px;">OrlandoParks_-5301150343239511</div><div class="ltxt" style="top:700px;left:63px;">OrlandoBikeLanesExisting_3728859</div><div class="ltxt" style="top:718px;left:63px;">Street_Centerline_63918086150690</div><div class="st" style="left:33px;top:1192px;font-size:13px;color:#a8a8a8">Type to locate (⌘K)</div><div class="st" style="left:869px;top:1194px">Coordinate</div><div class="st" style="left:939px;top:1194px;font-size:12.5px">28.7594°, -81.6025°</div><div class="st" style="left:1090px;top:1194px">Scale</div><div class="st" style="left:1126px;top:1194px;font-size:12.5px">1:101786</div><div class="st" style="left:1248px;top:1194px">Magnifier</div><div class="st" style="left:1305px;top:1194px;font-size:12.5px">100%</div><div class="st" style="left:1403px;top:1194px">Rotation</div>
</body></html>
